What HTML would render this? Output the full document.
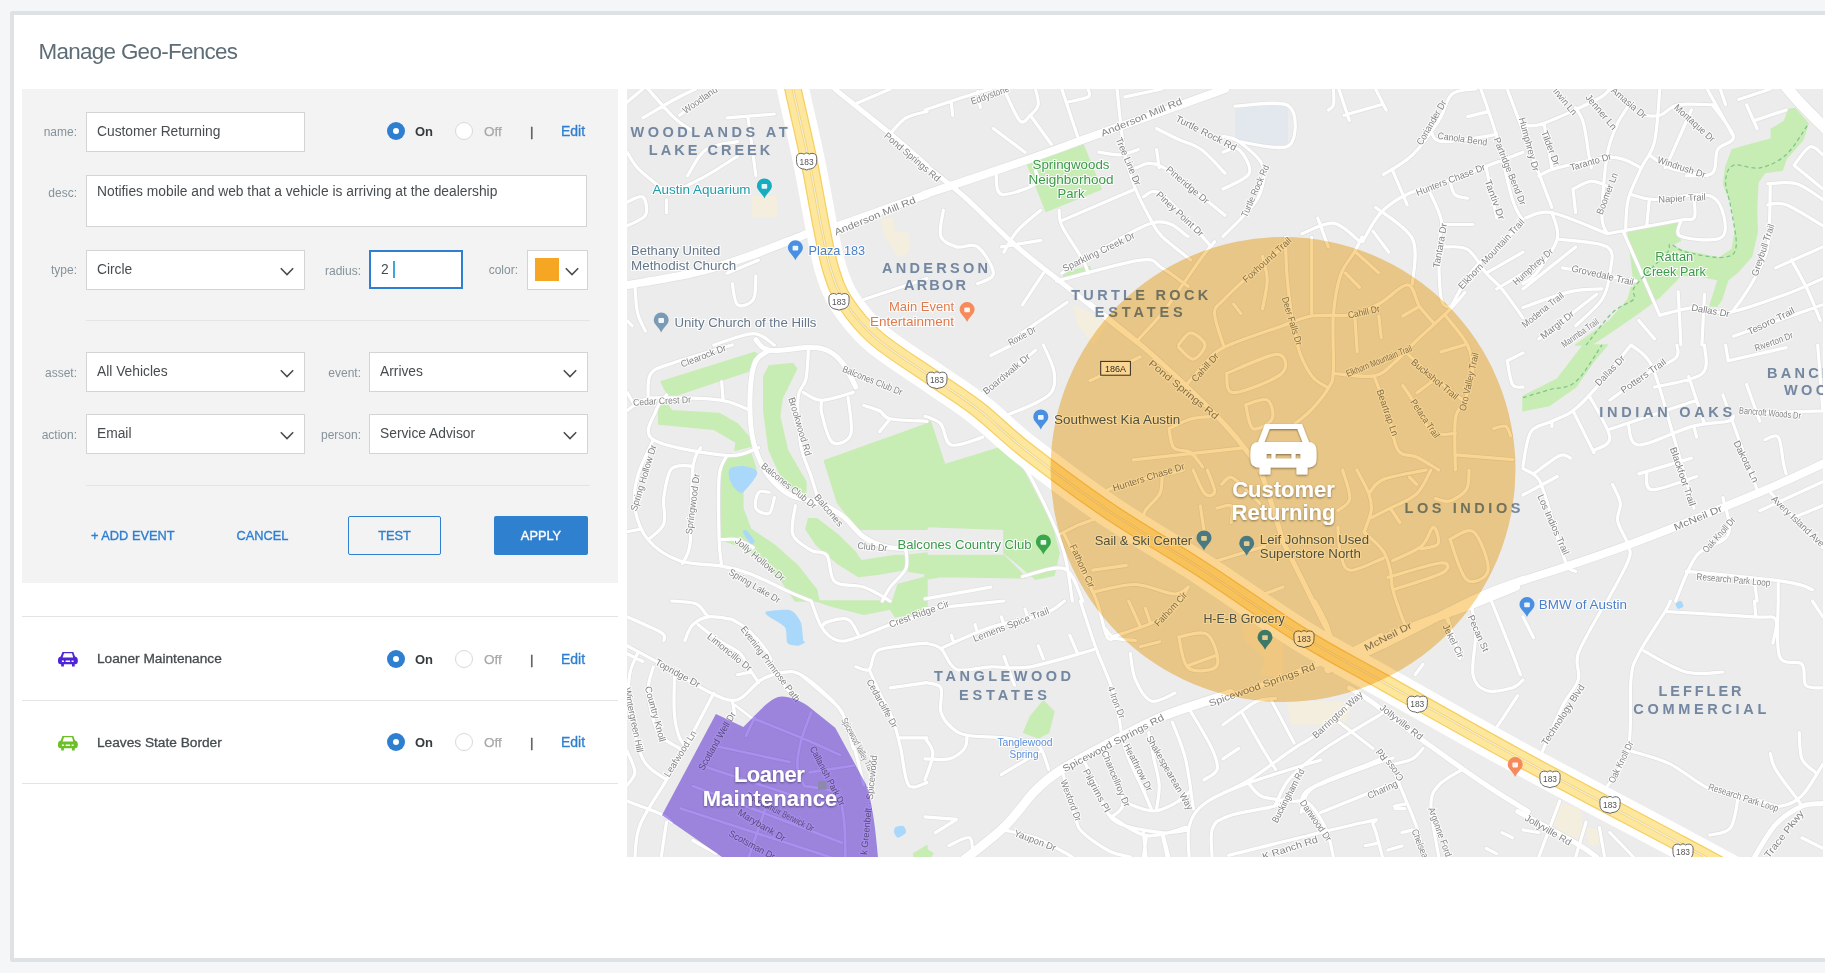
<!DOCTYPE html>
<html><head><meta charset="utf-8">
<style>
*{box-sizing:border-box;margin:0;padding:0}
html,body{width:1825px;height:973px;overflow:hidden;background:#f4f6f8;font-family:"Liberation Sans",sans-serif}
.abs{position:absolute}
#card{position:absolute;left:10px;top:11px;width:1830px;height:951px;border:4px solid #dfe2e4;border-right:none;border-radius:3px 0 0 3px;background:#fff}
#title{position:absolute;left:38.5px;top:38.6px;font-size:22.4px;color:#5e6c75;letter-spacing:-0.68px;white-space:nowrap}
#panel{position:absolute;left:22px;top:89px;width:596px;height:494px;background:#f3f3f3}
.lbl{position:absolute;font-size:12px;color:#85929a;margin-top:1px;text-align:right;white-space:nowrap}
.inp{position:absolute;background:#fff;border:1px solid #d4d4d4;font-size:13.8px;color:#464c50;padding-left:10px;white-space:nowrap}
.chev{position:absolute;right:10px;top:15.5px;width:14px;height:9px}
.hr{position:absolute;height:1px;background:#e4e4e4}
.radio{position:absolute;width:18px;height:18px;border-radius:50%}
.radio.on{background:#2f7fd0}
.radio.on:after{content:"";position:absolute;left:6px;top:6px;width:6px;height:6px;border-radius:50%;background:#fff}
.radio.off{background:#fff;border:1px solid #d9d9d9}
.t{position:absolute;white-space:nowrap}
.btn{position:absolute;font-size:12.8px;color:#2f7fd0;white-space:nowrap;text-align:center;font-weight:normal;-webkit-text-stroke:0.35px currentColor}
</style></head><body>
<div id="card"></div>
<div id="title">Manage Geo-Fences</div>
<div id="panel"></div>

<!-- name row -->
<div class="lbl" style="left:30px;width:47px;top:124px">name:</div>
<div class="inp" style="left:86px;top:112px;width:219px;height:40px;line-height:38px">Customer Returning</div>
<div class="radio on" style="left:387px;top:122px"></div>
<div class="t" style="left:415px;top:124px;font-size:13px;font-weight:bold;color:#363b3e">On</div>
<div class="radio off" style="left:455px;top:122px"></div>
<div class="t" style="left:484px;top:124px;font-size:13.5px;color:#a8a8a8;-webkit-text-stroke:0.25px #a8a8a8">Off</div>
<div class="t" style="left:530px;top:124px;font-size:13px;color:#555;-webkit-text-stroke:0.4px #555">|</div>
<div class="t" style="left:561px;top:123px;font-size:14px;color:#2f7fd0;-webkit-text-stroke:0.3px #2f7fd0">Edit</div>

<!-- desc -->
<div class="lbl" style="left:30px;width:47px;top:185px">desc:</div>
<div class="inp" style="left:86px;top:175px;width:501px;height:52px;line-height:32px">Notifies mobile and web that a vehicle is arriving at the dealership</div>

<!-- type row -->
<div class="lbl" style="left:30px;width:47px;top:262px">type:</div>
<div class="inp sel" style="left:86px;top:250px;width:219px;height:40px;line-height:38px">Circle<svg class="chev" viewBox="0 0 14 9"><polyline points="0.8,1.2 7,7.6 13.2,1.2" fill="none" stroke="#4a4a4a" stroke-width="1.5"/></svg></div>
<div class="lbl" style="left:300px;width:61px;top:263px">radius:</div>
<div class="inp" style="left:369px;top:250px;width:94px;height:39px;line-height:35px;border:2px solid #2f7fd0">2<span style="display:inline-block;width:2px;height:17px;background:#3ba7dc;margin-left:4px;vertical-align:-4px"></span></div>
<div class="lbl" style="left:470px;width:48px;top:262px">color:</div>
<div class="inp sel" style="left:527px;top:250px;width:61px;height:40px"><div class="abs" style="left:7px;top:7px;width:24px;height:23px;background:#f5a623"></div><svg class="chev" style="right:8.5px" viewBox="0 0 14 9"><polyline points="0.8,1.2 7,7.6 13.2,1.2" fill="none" stroke="#4a4a4a" stroke-width="1.5"/></svg></div>

<div class="hr" style="left:86px;top:320px;width:504px"></div>

<!-- asset row -->
<div class="lbl" style="left:30px;width:47px;top:365px">asset:</div>
<div class="inp sel" style="left:86px;top:352px;width:219px;height:40px;line-height:38px">All Vehicles<svg class="chev" viewBox="0 0 14 9"><polyline points="0.8,1.2 7,7.6 13.2,1.2" fill="none" stroke="#4a4a4a" stroke-width="1.5"/></svg></div>
<div class="lbl" style="left:300px;width:61px;top:365px">event:</div>
<div class="inp sel" style="left:369px;top:352px;width:219px;height:40px;line-height:38px">Arrives<svg class="chev" viewBox="0 0 14 9"><polyline points="0.8,1.2 7,7.6 13.2,1.2" fill="none" stroke="#4a4a4a" stroke-width="1.5"/></svg></div>

<!-- action row -->
<div class="lbl" style="left:30px;width:47px;top:427px">action:</div>
<div class="inp sel" style="left:86px;top:414px;width:219px;height:40px;line-height:38px">Email<svg class="chev" viewBox="0 0 14 9"><polyline points="0.8,1.2 7,7.6 13.2,1.2" fill="none" stroke="#4a4a4a" stroke-width="1.5"/></svg></div>
<div class="lbl" style="left:300px;width:61px;top:427px">person:</div>
<div class="inp sel" style="left:369px;top:414px;width:219px;height:40px;line-height:38px">Service Advisor<svg class="chev" viewBox="0 0 14 9"><polyline points="0.8,1.2 7,7.6 13.2,1.2" fill="none" stroke="#4a4a4a" stroke-width="1.5"/></svg></div>

<div class="hr" style="left:86px;top:485px;width:504px"></div>

<!-- buttons -->
<div class="btn" style="left:91px;top:528px">+ ADD EVENT</div>
<div class="btn" style="left:236.5px;top:528px">CANCEL</div>
<div class="btn" style="left:348px;top:516px;width:93px;height:39px;line-height:37px;border:1px solid #2f7fd0;border-radius:2px">TEST</div>
<div class="btn" style="left:494px;top:516px;width:94px;height:39px;line-height:39px;background:#2f80cf;color:#fff;border-radius:2px">APPLY</div>

<!-- list -->
<div class="hr" style="left:22px;top:616px;width:596px"></div>
<div class="hr" style="left:22px;top:700px;width:596px"></div>
<div class="hr" style="left:22px;top:783px;width:596px"></div>


<!-- list rows -->
<svg class="abs" style="left:57px;top:651px" width="21" height="16" viewBox="0 0 21 16"><path fill="#4d24d6" d="M5.4,0.9 L16.3,0.9 L18,5.6 Q20.8,6.2 20.8,9 L20.8,10.8 Q20.8,13.2 18.5,13.2 L17.7,13.2 L17.7,15.4 L15,15.4 L15,13.2 L6.9,13.2 L6.9,15.4 L4.2,15.4 L4.2,13.2 L3.3,13.2 Q1,13.2 1,10.8 L1,9 Q1,6.2 3.7,5.6 Z M7,2.2 L15,2.2 L16.2,6.6 L5.6,6.6 Z M4.9,9.4 h2 v1.6 h-2 Z M8.6,9.4 h4.5 v1.6 h-4.5 Z M14.6,9.4 h2 v1.6 h-2 Z" fill-rule="evenodd"/></svg>
<div class="t" style="left:97px;top:651px;font-size:13.7px;color:#454b4f;-webkit-text-stroke:0.3px #454b4f">Loaner Maintenance</div>
<div class="radio on" style="left:387px;top:650px"></div>
<div class="t" style="left:415px;top:652px;font-size:13px;font-weight:bold;color:#363b3e">On</div>
<div class="radio off" style="left:455px;top:650px"></div>
<div class="t" style="left:484px;top:652px;font-size:13.5px;color:#a8a8a8;-webkit-text-stroke:0.25px #a8a8a8">Off</div>
<div class="t" style="left:530px;top:652px;font-size:13px;color:#555;-webkit-text-stroke:0.4px #555">|</div>
<div class="t" style="left:561px;top:651px;font-size:14px;color:#2f7fd0;-webkit-text-stroke:0.3px #2f7fd0">Edit</div>

<svg class="abs" style="left:57px;top:734.5px" width="21" height="16" viewBox="0 0 21 16"><path fill="#6cbf26" d="M5.4,0.9 L16.3,0.9 L18,5.6 Q20.8,6.2 20.8,9 L20.8,10.8 Q20.8,13.2 18.5,13.2 L17.7,13.2 L17.7,15.4 L15,15.4 L15,13.2 L6.9,13.2 L6.9,15.4 L4.2,15.4 L4.2,13.2 L3.3,13.2 Q1,13.2 1,10.8 L1,9 Q1,6.2 3.7,5.6 Z M7,2.2 L15,2.2 L16.2,6.6 L5.6,6.6 Z M4.9,9.4 h2 v1.6 h-2 Z M8.6,9.4 h4.5 v1.6 h-4.5 Z M14.6,9.4 h2 v1.6 h-2 Z" fill-rule="evenodd"/></svg>
<div class="t" style="left:97px;top:735px;font-size:13.7px;color:#454b4f;-webkit-text-stroke:0.3px #454b4f">Leaves State Border</div>
<div class="radio on" style="left:387px;top:733px"></div>
<div class="t" style="left:415px;top:735px;font-size:13px;font-weight:bold;color:#363b3e">On</div>
<div class="radio off" style="left:455px;top:733px"></div>
<div class="t" style="left:484px;top:735px;font-size:13.5px;color:#a8a8a8;-webkit-text-stroke:0.25px #a8a8a8">Off</div>
<div class="t" style="left:530px;top:735px;font-size:13px;color:#555;-webkit-text-stroke:0.4px #555">|</div>
<div class="t" style="left:561px;top:734px;font-size:14px;color:#2f7fd0;-webkit-text-stroke:0.3px #2f7fd0">Edit</div>

<div id="map" class="abs" style="left:627px;top:89px;width:1196px;height:768px;background:#ebebeb;overflow:hidden"><svg width="1196" height="768" viewBox="627 89 1196 768" style="position:absolute;left:0;top:0;display:block" font-family="Liberation Sans">
<defs><filter id="sh" x="-20%" y="-20%" width="140%" height="140%"><feDropShadow dx="0" dy="1" stdDeviation="1.2" flood-color="#000" flood-opacity="0.45"/></filter></defs>
<rect x="627" y="89" width="1196" height="768" fill="#ececec"/>
<path d="M1026.3,161.4 L1082.9,144.3 L1101.3,189.0 L1046.1,211.4 Z" fill="#c8edb4" stroke="#c8edb4" stroke-width="1.5" stroke-linejoin="round"/>
<path d="M1063.2,273.2 L1089.5,266.6 L1090.8,270.6 L1064.5,279.8 Z" fill="#c8edb4" stroke="#c8edb4" stroke-width="1.5" stroke-linejoin="round"/>
<path d="M1788.6,109.6 L1795.1,108.5 L1808.1,123.7 L1802.7,139.9 L1786.4,158.4 L1782.1,170.3 L1764.8,172.5 L1757.8,182.2 L1756.5,210.4 L1757.2,232.1 L1751.7,255.9 L1738.7,271.1 L1727.9,279.8 L1721.4,299.9 L1717.0,306.0 L1710.0,306.0 L1718.1,279.8 L1697.6,275.4 L1680.2,275.4 L1675.6,281.0 L1659.8,296.8 L1638.8,312.6 L1612.5,331.0 L1591.4,345.0 L1575.6,345.0 L1609.8,320.5 L1628.2,299.5 L1633.5,278.4 L1628.2,232.4 L1630.3,232.1 L1678.0,219.1 L1680.2,240.7 L1671.5,245.1 L1682.4,250.5 L1719.2,258.1 L1732.2,249.4 L1735.5,229.9 L1732.2,206.1 L1723.6,184.4 L1725.7,167.0 L1732.2,149.7 L1751.7,144.3 L1771.3,138.9 L1771.3,129.1 L1784.3,121.5 Z" fill="#c8edb4" stroke="#c8edb4" stroke-width="1.5" stroke-linejoin="round"/>
<path d="M1523.0,396.3 L1557.2,379.2 L1583.5,345.0 L1607.2,345.0 L1594.0,360.8 L1575.6,387.1 L1549.3,405.5 L1523.0,410.8 Z" fill="#c8edb4" stroke="#c8edb4" stroke-width="1.5" stroke-linejoin="round"/>
<path d="M661.2,381.8 L754.6,352.4 L759.9,356.8 L748.1,371.3 L669.1,397.6 Z" fill="#c8edb4" stroke="#c8edb4" stroke-width="1.5" stroke-linejoin="round"/>
<path d="M658.6,405.5 L665.2,401.6 L671.7,410.8 L719.1,413.4 L737.5,423.9 L755.9,445.0 L734.9,450.3 L736.2,442.4 L713.8,429.2 L658.6,423.9 Z" fill="#c8edb4" stroke="#c8edb4" stroke-width="1.5" stroke-linejoin="round"/>
<path d="M769.1,366.1 L792.8,363.4 L796.7,368.7 L782.3,397.6 L779.6,416.1 L787.5,450.3 L805.9,481.8 L805.9,495.0 L784.9,484.5 L769.1,450.3 L763.8,410.8 L763.8,376.6 Z" fill="#c8edb4" stroke="#c8edb4" stroke-width="1.5" stroke-linejoin="round"/>
<path d="M824.4,460.8 L927.0,423.9 L927.0,529.2 L858.6,529.2 L837.5,502.9 Z" fill="#c8edb4" stroke="#c8edb4" stroke-width="1.5" stroke-linejoin="round"/>
<path d="M721.7,468.7 L729.6,455.5 L750.7,452.9 L755.9,468.7 L742.8,484.5 L742.8,508.2 L750.7,529.2 L774.4,545.0 L798.1,566.1 L816.5,589.7 L819.1,601.1 L795.4,601.1 L782.3,581.8 L758.6,555.5 L737.5,545.0 L720.4,539.7 Z" fill="#c8edb4" stroke="#c8edb4" stroke-width="1.5" stroke-linejoin="round"/>
<path d="M808.6,518.7 L816.5,518.7 L837.5,534.5 L855.9,552.9 L861.2,560.8 L895.4,555.5 L905.9,555.5 L908.6,568.7 L879.6,573.9 L858.6,576.6 L837.5,563.4 L816.5,545.0 L805.9,529.2 Z" fill="#c8edb4" stroke="#c8edb4" stroke-width="1.5" stroke-linejoin="round"/>
<path d="M898.1,584.5 L927.0,576.6 L927.0,601.1 L892.8,601.1 Z" fill="#c8edb4" stroke="#c8edb4" stroke-width="1.5" stroke-linejoin="round"/>
<path d="M905.9,555.5 L927.0,552.9 L927.0,573.9 L908.6,571.3 Z" fill="#c8edb4" stroke="#c8edb4" stroke-width="1.5" stroke-linejoin="round"/>
<path d="M925.0,423.9 L930.3,421.3 L944.7,464.7 L1000.0,447.6 L1019.7,463.4 L1051.3,523.9 L1059.2,552.9 L1053.9,575.3 L1035.5,579.2 L1017.1,563.4 L1003.9,552.9 L1003.9,529.2 L925.0,526.6 Z" fill="#c8edb4" stroke="#c8edb4" stroke-width="1.5" stroke-linejoin="round"/>
<path d="M925.0,555.5 L1003.9,555.5 L1019.7,571.3 L1025.0,577.9 L940.8,576.6 L925.0,579.2 Z" fill="#c8edb4" stroke="#c8edb4" stroke-width="1.5" stroke-linejoin="round"/>
<path d="M816.5,601.0 L916.5,601.0 L890.2,608.9 L863.8,614.2 L832.3,606.3 Z" fill="#c8edb4" stroke="#c8edb4" stroke-width="1.5" stroke-linejoin="round"/>
<path d="M884.9,601.0 L927.0,601.0 L927.0,611.5 L895.4,616.8 Z" fill="#c8edb4" stroke="#c8edb4" stroke-width="1.5" stroke-linejoin="round"/>
<path d="M913.8,853.6 L927.0,845.7 L927.0,857.1 L913.8,857.1 Z" fill="#c8edb4" stroke="#c8edb4" stroke-width="1.5" stroke-linejoin="round"/>
<path d="M1023.7,732.6 L1030.3,716.8 L1043.4,701.0 L1053.9,711.5 L1048.7,732.6 L1038.2,737.8 Z" fill="#c8edb4" stroke="#c8edb4" stroke-width="1.5" stroke-linejoin="round"/>
<path d="M925.0,848.4 L932.9,853.6 L930.3,857.1 L925.0,857.1 Z" fill="#c8edb4" stroke="#c8edb4" stroke-width="1.5" stroke-linejoin="round"/>
<path d="M729.6,468.7 C731.4,466.9 739.3,465.9 742.8,466.1 C746.3,466.2 754.2,468.6 755.9,470.0 C757.7,471.4 757.7,473.6 755.9,476.6 C754.2,479.6 745.6,490.8 742.8,492.4 C740.0,493.9 736.6,490.2 734.9,488.4 C733.1,486.7 730.3,481.8 729.6,479.2 C728.9,476.6 727.9,470.4 729.6,468.7 Z" fill="#a9d8fb"/>
<path d="M766.5,611.5 C769.3,610.6 785.6,608.8 790.2,610.2 C794.7,611.6 798.9,618.0 800.7,622.1 C802.4,626.1 802.6,637.8 803.3,640.5 C804.0,643.1 806.6,641.1 805.9,641.8 C805.2,642.5 800.5,645.6 798.1,645.7 C795.6,645.9 789.3,645.6 787.5,643.1 C785.8,640.6 787.4,630.8 784.9,627.3 C782.4,623.8 771.6,618.9 769.1,616.8 C766.6,614.7 763.7,612.4 766.5,611.5 Z" fill="#a9d8fb"/>
<path d="M895.4,827.3 C896.6,826.4 901.9,825.3 903.3,826.0 C904.7,826.7 906.6,831.0 905.9,832.6 C905.2,834.2 899.6,837.8 898.1,837.8 C896.5,837.8 894.5,834.0 894.1,832.6 C893.8,831.2 894.2,828.2 895.4,827.3 Z" fill="#a9d8fb"/>
<path d="M1675.6,603.6 C1675.9,602.6 1679.8,600.6 1680.9,601.0 C1681.9,601.4 1683.8,605.2 1683.5,606.3 C1683.1,607.3 1679.3,609.2 1678.2,608.9 C1677.2,608.5 1675.2,604.7 1675.6,603.6 Z" fill="#a9d8fb"/>
<path d="M742.8,531.8 C742.3,530.1 745.2,529.3 746.7,530.5 C748.3,531.8 754.1,539.3 754.6,541.1 C755.2,542.8 752.3,544.9 750.7,543.7 C749.1,542.5 743.3,533.6 742.8,531.8 Z" fill="#a9d8fb"/>
<path d="M752.0,195.6 L777.0,195.6 L777.0,217.9 L752.0,217.9 Z" fill="#f4eedf"/>
<path d="M880.9,217.9 L892.8,217.9 L895.4,231.1 L908.6,232.4 L909.9,252.2 L898.1,257.4 L890.2,244.3 L883.6,236.4 Z" fill="#f4eedf"/>
<path d="M1554.6,800.9 L1580.9,808.8 L1583.5,837.8 L1567.7,839.1 L1553.3,824.6 Z" fill="#f4eedf"/>
<path d="M1586.1,827.3 L1601.9,829.9 L1604.6,843.0 L1588.8,845.7 Z" fill="#f4eedf"/>
<path d="M1286.2,701.0 L1354.6,701.0 L1344.1,724.7 L1291.4,724.7 Z" fill="#f4eedf"/>
<path d="M1072.4,304.8 L1109.2,320.6 L1093.4,345.1 L1077.6,325.8 Z" fill="#f4eedf"/>
<path d="M1240.8,625.0 L1283.0,622.6 L1283.0,677.5 L1259.9,675.1 L1264.6,658.4 L1245.6,641.7 Z" fill="#f4eedf"/>
<rect x="1235" y="106" width="53" height="39" fill="#e3e8ee"/>
<path d="M751.0,717.5 C760.2,721.2 791.2,733.5 806.0,739.8 C820.8,746.0 834.3,752.5 840.0,755.0 M717.6,746.6 L789.7,762.0 M706.5,767.2 L806.0,799.8 M692.8,786.0 L842.0,842.8 M680.7,808.4 L843.8,861.6 M811.2,712.3 C809.5,717.2 803.2,732.4 800.9,741.5 C798.6,750.6 796.9,759.8 797.5,767.2 C798.1,774.6 803.2,782.9 804.3,786.0 M804.3,786.0 C809.4,787.2 828.6,787.5 835.2,793.0 C841.8,798.5 842.1,807.5 843.8,818.7 C845.5,829.9 845.2,853.1 845.5,860.0 M746.0,736.0 L754.6,717.5 M764.9,810.2 L747.7,860.0 M809.5,772.4 L854.1,765.5 M735.0,705.0 L751.0,717.5" fill="none" stroke="#dfdfdf" stroke-width="3.9000000000000004" stroke-linecap="round" stroke-linejoin="round"/>
<path d="M853.3,104.8 L890.2,89.0 M890.2,133.7 C892.8,131.1 899.8,121.7 905.9,117.9 C912.1,114.2 923.5,112.5 927.0,111.4 M648.1,89.0 C652.4,93.8 666.9,110.9 674.4,117.9 C681.8,125.0 689.7,128.9 692.8,131.1 M642.8,117.9 C648.1,114.9 665.6,104.4 674.4,99.5 C683.1,94.7 691.9,90.8 695.4,89.0 M679.6,115.3 L716.5,89.0 M627.0,102.2 L642.8,89.0 M727.0,117.9 L774.4,114.0 M748.1,117.9 L755.9,175.8 M627.0,152.2 C628.8,154.8 632.7,162.7 637.5,167.9 C642.4,173.2 650.7,179.4 655.9,183.7 C661.2,188.1 666.9,192.5 669.1,194.3 M627.0,202.2 C629.6,201.3 639.7,194.7 642.8,196.9 C645.9,199.1 648.1,210.5 645.4,215.3 C642.8,220.1 630.1,224.1 627.0,225.8 M669.1,194.3 C675.2,191.2 694.5,182.2 705.9,175.8 C717.4,169.5 732.3,159.4 737.5,156.1 M666.5,199.5 L666.5,212.7 M727.0,273.2 L758.6,260.1 M732.3,283.7 C733.1,287.2 734.0,302.2 737.5,304.8 C741.0,307.4 750.2,304.4 753.3,299.5 C756.4,294.7 755.5,279.8 755.9,275.8 M634.9,285.1 C635.3,289.7 635.8,305.0 637.5,312.7 C639.3,320.4 644.1,328.0 645.4,331.1 M713.8,345.1 C720.4,343.2 743.2,333.7 753.3,333.7 C763.4,333.7 770.9,343.2 774.4,345.1 M863.8,299.5 L927.0,278.5 M627.0,320.6 L632.3,325.8 M687.5,175.8 C690.6,171.5 697.6,155.2 705.9,149.5 C714.3,143.8 732.3,142.9 737.5,141.6 M925.0,110.1 C932.9,107.4 961.4,97.8 972.4,94.3 C983.3,90.8 987.7,89.9 990.8,89.0 M951.3,102.2 L952.6,115.3 M977.6,91.6 L980.3,107.4 M1003.9,89.0 C1006.6,94.3 1015.4,116.2 1019.7,120.6 C1024.1,125.0 1027.2,117.9 1030.3,115.3 C1033.3,112.7 1037.3,109.2 1038.2,104.8 C1039.0,100.4 1036.0,91.6 1035.5,89.0 M993.4,128.5 L1025.0,152.2 M1030.3,115.3 L1051.3,144.3 M1061.8,89.0 L1077.6,136.4 M1067.1,102.2 C1070.6,101.3 1084.6,99.1 1088.2,96.9 C1091.7,94.7 1088.2,90.3 1088.2,89.0 M1117.1,89.0 L1119.7,115.3 M1125.0,96.9 L1161.8,89.0 M1156.6,128.5 C1160.1,130.2 1170.2,135.5 1177.6,139.0 C1185.1,142.5 1193.4,143.8 1201.3,149.5 C1209.2,155.2 1221.1,169.3 1225.0,173.2 M1119.7,115.3 C1120.6,121.9 1122.4,142.5 1125.0,154.8 C1127.6,167.1 1131.1,178.0 1135.5,189.0 C1139.9,200.0 1146.9,212.7 1151.3,220.6 C1155.7,228.5 1155.3,229.8 1161.8,236.4 C1168.4,242.9 1186.0,256.1 1190.8,260.1 M996.1,173.2 C996.9,176.7 994.7,192.5 1001.3,194.3 C1007.9,196.0 1029.8,187.7 1035.5,183.7 C1041.2,179.8 1035.5,172.8 1035.5,170.6 M1135.5,167.9 C1139.9,167.7 1146.9,158.7 1161.8,166.6 C1176.8,174.5 1214.5,207.2 1225.0,215.3 M1143.4,196.9 C1146.5,196.5 1150.9,186.4 1161.8,194.3 C1172.8,202.2 1201.3,235.9 1209.2,244.3 M1059.2,210.1 C1059.6,212.7 1057.9,217.5 1061.8,225.8 C1065.8,234.2 1078.5,252.2 1082.9,260.1 C1087.3,267.9 1087.3,271.0 1088.2,273.2 M1061.8,273.2 C1076.8,264.9 1130.3,229.4 1151.3,223.2 C1172.4,217.1 1182.0,234.2 1188.2,236.4 M1056.6,281.1 C1070.6,277.6 1123.2,262.2 1140.8,260.1 C1158.3,257.9 1153.9,263.6 1161.8,267.9 C1169.7,272.3 1183.8,283.3 1188.2,286.4 M1001.3,246.9 L1040.8,240.3 M943.4,210.1 C943.0,214.4 938.6,230.2 940.8,236.4 C943.0,242.5 950.4,245.1 956.6,246.9 C962.7,248.6 971.5,242.5 977.6,246.9 C983.8,251.3 993.4,267.1 993.4,273.2 C993.4,279.4 980.3,282.0 977.6,283.7 M1022.4,304.8 L1043.4,273.2 M1009.2,341.6 L1067.1,302.2 M1098.7,152.2 C1102.2,152.6 1113.2,155.2 1119.7,154.8 C1126.3,154.4 1135.1,150.4 1138.2,149.5 M1156.6,149.5 L1159.2,167.9 M1061.8,220.6 L1135.5,189.0 M1003.9,252.2 C1006.1,248.6 1011.0,238.1 1017.1,231.1 C1023.2,224.1 1036.8,213.6 1040.8,210.1 M1234.8,106.1 C1243.8,106.1 1279.8,99.5 1288.8,106.1 C1297.8,112.7 1297.1,139.7 1288.8,145.6 C1280.5,151.5 1247.1,142.3 1238.8,141.6 M1223.0,136.4 C1225.6,137.2 1232.2,136.8 1238.8,141.6 C1245.4,146.5 1259.0,156.5 1262.5,165.3 C1266.0,174.1 1262.9,185.9 1259.8,194.3 C1256.8,202.6 1250.2,208.3 1244.1,215.3 C1237.9,222.3 1226.5,232.9 1223.0,236.4 M1223.0,152.2 C1225.6,151.7 1234.4,146.0 1238.8,149.5 C1243.2,153.0 1251.9,166.6 1249.3,173.2 C1246.7,179.8 1227.4,186.4 1223.0,189.0 M1333.5,89.0 C1333.5,91.6 1334.4,101.3 1333.5,104.8 C1332.6,108.3 1329.1,109.2 1328.3,110.1 M1338.8,89.0 L1349.3,120.6 M1344.1,115.3 L1380.9,104.8 M1375.6,89.0 L1386.2,110.1 M1383.5,174.5 C1388.4,171.2 1403.3,163.8 1412.5,154.8 C1421.7,145.8 1432.2,130.7 1438.8,120.6 C1445.4,110.5 1445.8,99.5 1451.9,94.3 C1458.1,89.0 1471.7,89.9 1475.6,89.0 M1430.9,131.1 C1432.6,132.9 1432.2,140.8 1441.4,141.6 C1450.6,142.5 1476.9,137.7 1486.2,136.4 C1495.4,135.1 1494.9,134.2 1496.7,133.7 M1467.7,116.6 L1488.8,111.4 M1480.9,89.0 C1483.5,96.9 1491.4,117.9 1496.7,136.4 C1501.9,154.8 1508.1,185.5 1512.5,199.5 C1516.9,213.6 1521.2,217.1 1523.0,220.6 M1507.2,89.0 L1523.0,131.1 M1362.5,241.6 C1365.5,236.8 1373.4,220.6 1380.9,212.7 C1388.4,204.8 1396.2,199.5 1407.2,194.3 C1418.2,189.0 1427.4,188.1 1446.7,181.1 C1466.0,174.1 1510.3,157.0 1523.0,152.2 M1392.7,170.6 L1407.2,204.8 M1428.3,189.0 C1430.5,194.3 1439.7,210.9 1441.4,220.6 C1443.2,230.2 1438.8,233.7 1438.8,246.9 C1438.8,260.1 1439.2,289.4 1441.4,299.5 C1443.6,309.6 1450.2,306.1 1451.9,307.4 M1441.4,224.5 L1473.0,224.5 M1449.3,178.5 C1450.2,181.1 1451.5,191.0 1454.6,194.3 C1457.6,197.6 1465.5,197.6 1467.7,198.2 M1486.2,167.9 L1496.7,217.9 M1449.3,310.1 C1452.8,303.9 1462.5,283.7 1470.4,273.2 C1478.3,262.7 1487.9,255.2 1496.7,246.9 C1505.5,238.6 1518.6,227.2 1523.0,223.2 M1444.1,246.9 C1448.0,247.3 1460.7,245.1 1467.7,249.5 C1474.8,253.9 1480.5,266.6 1486.2,273.2 C1491.9,279.8 1495.8,281.5 1501.9,289.0 C1508.1,296.5 1519.5,313.1 1523.0,317.9 M1486.2,273.2 L1523.0,252.2 M1496.7,289.0 L1523.0,273.2 M1375.6,207.4 C1381.8,212.7 1406.3,226.3 1412.5,239.0 C1418.6,251.7 1412.5,276.3 1412.5,283.7 M1301.9,233.7 C1307.2,232.0 1323.9,221.9 1333.5,223.2 C1343.2,224.5 1355.5,238.6 1359.8,241.6 M1317.7,217.9 L1328.3,246.9 M1373.0,231.1 L1388.8,252.2 M1659.8,315.3 C1665.9,313.9 1685.2,307.8 1696.6,307.4 C1708.0,306.9 1713.3,314.8 1728.2,312.6 C1743.1,310.4 1770.3,299.9 1786.1,294.2 C1801.9,288.5 1816.8,281.1 1822.9,278.4 M1623.0,231.1 L1659.8,315.3 M1607.2,233.7 C1619.0,231.5 1663.8,223.2 1678.2,220.5 C1692.7,217.9 1691.4,221.4 1694.0,217.9 C1696.6,214.4 1694.0,202.6 1694.0,199.5 M1525.6,217.9 C1530.0,217.0 1538.3,210.0 1551.9,212.7 C1565.5,215.3 1598.0,230.2 1607.2,233.7 M1551.9,212.7 C1552.8,217.0 1559.8,228.9 1557.2,239.0 C1554.6,249.0 1541.9,265.7 1536.2,273.2 C1530.5,280.6 1525.2,281.9 1523.0,283.7 M1538.8,175.8 C1541.9,174.5 1544.9,171.0 1557.2,167.9 C1569.5,164.9 1598.4,157.4 1612.5,157.4 C1626.5,157.4 1636.6,166.2 1641.4,167.9 M1523.0,125.8 C1526.5,125.4 1531.8,127.6 1544.0,123.2 C1556.3,118.8 1585.7,105.2 1596.7,99.5 C1607.6,93.8 1607.6,90.8 1609.8,89.0 M1523.0,133.7 C1525.6,140.3 1534.0,160.9 1538.8,173.2 C1543.6,185.5 1549.7,201.7 1551.9,207.4 M1544.0,123.2 L1551.9,167.9 M1575.6,107.4 C1576.9,110.0 1581.3,115.3 1583.5,123.2 C1585.7,131.1 1587.5,147.3 1588.8,154.8 C1590.1,162.2 1591.0,165.7 1591.4,167.9 M1609.8,89.0 C1612.9,91.2 1626.9,96.5 1628.2,102.2 C1629.6,107.9 1621.2,114.4 1617.7,123.2 C1614.2,132.0 1609.8,139.4 1607.2,154.8 C1604.6,170.1 1601.9,202.1 1601.9,215.3 C1601.9,228.4 1606.3,230.6 1607.2,233.7 M1659.8,89.0 C1658.9,97.8 1657.6,128.5 1654.5,141.6 C1651.5,154.8 1645.8,158.3 1641.4,167.9 C1637.0,177.6 1630.9,189.0 1628.2,199.5 C1625.6,210.0 1626.0,225.8 1625.6,231.1 M1641.4,115.3 C1644.5,115.3 1653.7,117.1 1659.8,115.3 C1665.9,113.6 1669.5,106.5 1678.2,104.8 C1687.0,103.0 1706.7,104.8 1712.4,104.8 M1691.4,110.0 C1687.9,117.9 1674.7,147.8 1670.3,157.4 C1665.9,167.0 1665.9,166.2 1665.1,167.9 M1712.4,104.8 C1715.9,110.0 1732.6,128.9 1733.5,136.4 C1734.3,143.8 1721.2,143.4 1717.7,149.5 C1714.2,155.6 1717.7,168.8 1712.4,173.2 C1707.2,177.6 1690.5,175.4 1686.1,175.8 M1649.3,154.8 C1652.8,157.0 1660.7,164.4 1670.3,167.9 C1680.0,171.4 1701.0,174.5 1707.2,175.8 M1630.9,194.2 C1634.8,195.1 1641.0,199.1 1654.5,199.5 C1668.1,199.9 1701.0,190.7 1712.4,196.9 C1723.8,203.0 1728.2,229.8 1722.9,236.3 C1717.7,242.9 1687.9,239.0 1680.9,236.3 C1673.8,233.7 1680.9,223.2 1680.9,220.5 M1649.3,199.5 L1646.7,225.8 M1573.0,189.0 C1576.1,187.7 1585.7,181.5 1591.4,181.1 C1597.1,180.6 1604.6,185.5 1607.2,186.3 M1573.0,189.0 L1575.6,212.7 M1557.2,239.0 C1565.5,240.3 1598.4,241.2 1607.2,246.9 C1616.0,252.6 1610.7,264.4 1609.8,273.2 C1608.9,281.9 1607.6,290.7 1601.9,299.5 C1596.2,308.2 1580.0,321.4 1575.6,325.8 M1523.0,288.9 L1575.6,246.9 M1562.5,267.9 L1636.1,281.1 M1523.0,307.4 C1530.9,304.7 1557.2,294.6 1570.4,291.6 C1583.5,288.5 1596.7,289.4 1601.9,288.9 M1538.8,338.9 L1596.7,294.2 M1707.2,89.0 L1733.5,136.4 M1738.7,99.5 L1770.3,89.0 M1746.6,104.8 L1757.1,128.5 M1754.5,120.6 L1786.1,110.0 M1767.7,183.7 C1772.5,183.7 1787.4,181.1 1796.6,183.7 C1805.8,186.3 1818.5,196.9 1822.9,199.5 M1767.7,204.8 C1770.7,204.8 1776.9,201.3 1786.1,204.8 C1795.3,208.3 1816.8,222.3 1822.9,225.8 M1770.3,183.7 C1769.9,194.2 1770.3,231.1 1767.7,246.9 C1765.0,262.6 1758.9,269.7 1754.5,278.4 C1750.1,287.2 1744.9,294.2 1741.4,299.5 C1737.9,304.7 1734.8,308.2 1733.5,310.0 M1775.6,267.9 L1822.9,246.9 M1794.0,165.3 C1796.6,162.2 1804.9,148.6 1809.8,146.9 C1814.6,145.1 1820.7,153.5 1822.9,154.8 M1794.0,165.3 L1822.9,189.0 M1791.4,260.0 C1794.0,264.8 1802.3,278.9 1807.1,288.9 C1812.0,299.0 1818.1,315.3 1820.3,320.5 M1733.5,336.3 L1822.9,304.7 M1678.2,291.6 L1680.9,345.0 M1704.5,294.2 L1701.9,345.0 M1638.8,320.5 L1654.5,338.9 M1720.3,89.0 L1725.6,104.8 M648.1,397.6 C648.5,393.7 646.7,379.6 650.7,373.9 C654.6,368.2 658.1,368.2 671.7,363.4 C685.3,358.6 722.2,348.1 732.3,345.0 M808.6,347.6 C808.1,352.9 807.7,370.9 805.9,379.2 C804.2,387.5 798.9,386.7 798.1,397.6 C797.2,408.6 798.5,431.8 800.7,445.0 C802.9,458.2 808.1,466.9 811.2,476.6 C814.3,486.2 817.8,498.5 819.1,502.9 M627.0,410.8 C629.6,409.0 636.6,402.5 642.8,400.3 C648.9,398.1 650.7,397.6 663.8,397.6 C677.0,397.6 707.3,398.1 721.7,400.3 C736.2,402.5 745.9,409.0 750.7,410.8 M721.7,381.8 L723.1,400.3 M666.5,395.0 C664.7,397.6 658.1,403.3 655.9,410.8 C653.8,418.2 641.5,432.3 653.3,439.7 C665.2,447.2 709.5,454.2 727.0,455.5 C744.5,456.8 753.3,448.9 758.6,447.6 M653.3,439.7 C650.7,445.9 640.6,465.2 637.5,476.6 C634.5,488.0 633.1,497.6 634.9,508.2 C636.6,518.7 640.6,531.0 648.1,539.7 C655.5,548.5 667.4,556.4 679.6,560.8 C691.9,565.2 709.9,563.9 721.7,566.1 C733.6,568.2 739.3,569.6 750.7,573.9 C762.1,578.3 780.1,587.9 790.2,592.4 C800.2,596.9 807.7,599.6 811.2,601.1 M700.7,447.6 C699.4,451.1 694.5,452.9 692.8,468.7 C691.0,484.5 691.9,526.6 690.2,542.4 C688.4,558.2 683.6,559.9 682.3,563.4 M727.0,455.5 C725.7,459.0 720.4,462.5 719.1,476.6 C717.8,490.6 718.7,524.8 719.1,539.7 C719.5,554.6 721.3,561.7 721.7,566.1 M692.8,466.1 C689.3,466.5 676.6,463.4 671.7,468.7 C666.9,473.9 665.2,488.4 663.8,497.6 C662.5,506.8 666.5,516.9 663.8,523.9 C661.2,531.0 650.7,537.1 648.1,539.7 M627.0,531.8 L640.2,529.2 M721.7,539.7 C724.4,539.7 732.3,538.4 737.5,539.7 C742.8,541.1 750.7,546.3 753.3,547.6 M769.1,492.4 C767.4,492.4 760.8,489.7 758.6,492.4 C756.4,495.0 754.2,504.6 755.9,508.2 C757.7,511.7 766.0,515.2 769.1,513.4 C772.2,511.7 773.5,500.3 774.4,497.6 M795.4,505.5 C795.0,510.4 790.2,527.0 792.8,534.5 C795.4,541.9 805.5,546.8 811.2,550.3 C816.9,553.8 823.1,550.3 827.0,555.5 C830.9,560.8 828.8,576.6 834.9,581.8 C841.0,587.1 854.6,583.9 863.8,587.1 C873.1,590.3 885.8,598.7 890.2,601.1 M905.9,550.3 C905.9,553.3 908.6,562.5 905.9,568.7 C903.3,574.8 894.1,581.7 890.2,587.1 C886.2,592.5 883.6,598.7 882.3,601.1 M803.3,392.4 C806.4,393.7 813.4,400.3 821.7,400.3 C830.1,400.3 848.1,393.7 853.3,392.4 M821.7,400.3 C821.7,402.5 820.0,406.4 821.7,413.4 C823.5,420.4 827.4,438.9 832.3,442.4 C837.1,445.9 848.1,441.9 850.7,434.5 C853.3,427.0 848.5,403.8 848.1,397.6 M863.8,405.5 C866.5,406.4 875.2,408.6 879.6,410.8 C884.0,413.0 882.3,416.9 890.2,418.7 C898.1,420.4 920.9,420.9 927.0,421.3 M890.2,418.7 L879.6,431.8 M627.0,392.4 L634.9,405.5 M990.8,355.5 L1011.8,345.0 M1043.4,345.0 C1045.2,349.4 1052.6,363.4 1053.9,371.3 C1055.3,379.2 1055.3,386.7 1051.3,392.4 C1047.4,398.1 1038.2,401.6 1030.3,405.5 C1022.4,409.5 1008.3,414.3 1003.9,416.1 M977.6,397.6 L1035.5,350.3 M925.0,416.1 C927.6,417.4 936.4,419.1 940.8,423.9 C945.2,428.8 944.3,442.8 951.3,445.0 C958.3,447.2 977.6,438.4 982.9,437.1 M1017.1,460.8 C1019.3,463.4 1022.8,462.5 1030.3,476.6 C1037.7,490.6 1054.8,524.3 1061.8,545.0 C1068.9,565.7 1070.6,591.7 1072.4,601.1 M1022.4,576.6 C1029.4,575.3 1054.4,564.6 1064.5,568.7 C1074.6,572.8 1079.8,595.7 1082.9,601.1 M925.0,598.9 L990.8,587.1 M1507.2,360.8 L1523.0,352.9 M1507.2,360.8 C1508.1,364.7 1509.8,380.1 1512.5,384.5 C1515.1,388.9 1521.2,386.7 1523.0,387.1 M1523.0,466.0 C1524.3,460.3 1526.1,439.3 1530.9,431.8 C1535.7,424.4 1544.9,424.8 1551.9,421.3 C1559.0,417.8 1565.5,416.5 1573.0,410.8 C1580.4,405.1 1587.0,398.1 1596.7,387.1 C1606.3,376.1 1625.2,352.0 1630.9,345.0 M1551.9,421.3 L1551.9,426.6 M1609.8,400.2 C1616.0,395.9 1635.7,381.0 1646.7,373.9 C1657.6,366.9 1670.5,363.0 1675.6,358.2 C1680.6,353.3 1676.7,347.2 1676.9,345.0 M1573.0,410.8 L1594.0,452.9 M1588.8,395.0 C1592.3,402.0 1608.9,427.9 1609.8,437.1 C1610.7,446.3 1596.7,448.0 1594.0,450.2 M1630.9,345.0 C1634.4,348.5 1644.9,351.1 1651.9,366.0 C1658.9,381.0 1665.9,410.8 1673.0,434.5 C1680.0,458.1 1690.5,495.8 1694.0,508.1 M1609.8,429.2 L1696.6,400.2 M1654.5,387.1 C1662.4,384.9 1693.6,381.0 1701.9,373.9 C1710.2,366.9 1704.1,349.8 1704.5,345.0 M1688.7,376.6 L1704.5,423.9 M1628.2,423.9 C1630.0,427.4 1628.2,444.5 1638.8,445.0 C1649.3,445.4 1676.5,430.5 1691.4,426.6 C1706.3,422.6 1721.2,423.0 1728.2,421.3 C1735.2,419.5 1732.6,416.9 1733.5,416.0 M1694.0,426.6 L1696.6,437.1 M1722.9,395.0 L1757.1,489.7 M1749.3,413.4 L1822.9,410.8 M1746.6,384.5 L1759.8,421.3 M1728.2,360.8 L1786.1,347.6 M1725.6,345.0 L1728.2,360.8 M1638.8,473.9 L1691.4,458.1 M1646.7,471.3 C1647.5,474.4 1643.6,488.8 1651.9,489.7 C1660.2,490.6 1689.2,478.7 1696.6,476.5 M1523.0,468.7 C1525.2,470.0 1532.6,472.6 1536.2,476.5 C1539.7,480.5 1539.2,478.3 1544.0,492.3 C1548.9,506.4 1559.8,547.6 1565.1,560.7 C1570.4,573.9 1573.9,569.5 1575.6,571.3 M1533.5,473.9 C1537.9,470.8 1553.7,458.1 1559.8,455.5 C1566.0,452.9 1568.6,457.7 1570.4,458.1 M1523.0,495.0 L1557.2,476.5 M1612.5,484.4 C1613.8,487.5 1619.5,496.7 1620.3,502.9 C1621.2,509.0 1616.4,514.3 1617.7,521.3 C1619.0,528.3 1626.5,538.4 1628.2,544.9 C1630.0,551.5 1631.7,551.4 1628.2,560.7 C1624.7,570.1 1610.7,594.3 1607.2,601.0 M1765.0,439.7 C1767.2,439.3 1775.1,433.1 1778.2,437.1 C1781.3,441.0 1782.1,457.3 1783.5,463.4 C1784.8,469.5 1785.7,472.2 1786.1,473.9 M1759.8,510.7 L1822.9,481.8 M1791.4,518.6 L1822.9,505.5 M1770.3,492.3 L1822.9,547.6 M1722.9,497.6 C1723.8,503.7 1732.6,524.8 1728.2,534.4 C1723.8,544.1 1705.4,544.4 1696.6,555.5 C1687.9,566.6 1679.1,593.4 1675.6,601.0 M1686.1,571.3 C1702.8,573.0 1765.0,578.7 1786.1,581.8 C1807.1,584.8 1808.0,588.4 1812.4,589.7 M1754.5,581.8 L1757.1,601.0 M1778.2,581.8 L1778.2,601.0 M1817.7,345.0 L1822.9,410.8 M671.7,601.0 C675.7,601.4 689.7,601.4 695.4,603.6 C701.1,605.8 703.8,612.0 705.9,614.2 C708.1,616.4 708.1,616.4 708.6,616.8 M627.0,616.8 C632.7,619.4 655.1,628.6 661.2,632.6 C667.4,636.5 663.4,639.2 663.8,640.5 M684.9,640.5 C686.2,637.8 688.8,628.6 692.8,624.7 C696.7,620.7 702.0,617.7 708.6,616.8 C715.2,615.9 728.3,619.0 732.3,619.4 M732.3,619.4 C734.9,621.2 742.4,624.7 748.1,629.9 C753.8,635.2 761.6,643.5 766.5,651.0 C771.3,658.5 773.1,667.7 777.0,674.7 C780.9,681.7 788.0,690.0 790.2,693.1 M698.1,624.7 C701.6,627.3 712.1,635.6 719.1,640.5 C726.1,645.3 735.3,649.2 740.2,653.6 C745.0,658.0 745.0,662.0 748.1,666.8 C751.1,671.6 756.8,679.9 758.6,682.6 M627.0,645.7 C632.7,648.8 647.2,656.3 661.2,664.2 C675.2,672.1 698.5,687.2 711.2,693.1 C723.9,699.0 729.2,701.9 737.5,699.7 C745.9,697.5 753.3,684.6 761.2,679.9 C769.1,675.3 778.3,672.9 784.9,672.1 C791.5,671.2 794.1,671.2 800.7,674.7 C807.3,678.2 817.4,686.5 824.4,693.1 C831.4,699.7 838.0,704.9 842.8,714.2 C847.6,723.4 851.6,742.7 853.3,748.4 M800.7,674.7 C806.8,679.9 830.1,698.4 837.5,706.3 C845.0,714.2 842.4,714.2 845.4,722.1 C848.5,729.9 852.9,743.1 855.9,753.6 C859.0,764.2 862.5,779.9 863.8,785.2 M637.5,653.6 C636.2,657.1 630.9,665.9 629.6,674.7 C628.3,683.5 627.4,692.2 629.6,706.3 C631.8,720.3 636.6,746.6 642.8,758.9 C648.9,771.2 662.5,776.4 666.5,779.9 M653.3,666.8 C652.4,671.2 647.2,682.1 648.1,693.1 C648.9,704.1 653.3,723.4 658.6,732.6 C663.8,741.8 676.1,745.7 679.6,748.4 M674.4,677.3 C674.4,683.5 673.5,704.1 674.4,714.2 C675.2,724.2 677.4,732.1 679.6,737.8 C681.8,743.5 686.2,746.6 687.5,748.4 M713.8,693.1 C709.9,700.6 698.1,723.4 690.2,737.8 C682.3,752.3 674.8,765.5 666.5,779.9 C658.1,794.4 645.4,811.8 640.2,824.7 C634.9,837.5 635.8,851.7 634.9,857.1 M732.3,701.0 L734.9,714.2 M627.0,751.0 C628.3,754.5 634.9,766.4 634.9,772.1 C634.9,777.8 628.3,783.0 627.0,785.2 M627.0,801.0 C632.7,803.2 653.8,810.6 661.2,814.2 C668.7,817.7 670.0,820.7 671.7,822.1 M666.5,822.1 L661.2,857.1 M692.8,840.5 L716.5,853.6 M811.2,601.0 C813.0,605.4 817.4,620.7 821.7,627.3 C826.1,633.9 831.8,638.7 837.5,640.5 C843.2,642.2 847.2,640.5 855.9,637.8 C864.7,635.2 878.3,628.6 890.2,624.7 C902.0,620.7 920.9,615.9 927.0,614.2 M821.7,627.3 C822.6,626.4 822.6,623.4 827.0,622.1 C831.4,620.7 842.8,617.2 848.1,619.4 C853.3,621.6 856.8,632.6 858.6,635.2 M855.9,666.8 C858.1,667.2 865.6,672.1 869.1,669.4 C872.6,666.8 871.3,654.9 877.0,651.0 C882.7,647.1 895.0,647.1 903.3,645.7 C911.6,644.4 923.1,643.5 927.0,643.1 M869.1,669.4 C870.9,673.4 875.7,684.8 879.6,693.1 C883.6,701.4 889.3,710.2 892.8,719.4 C896.3,728.6 898.1,737.4 900.7,748.4 C903.3,759.3 904.2,779.5 908.6,785.2 C913.0,790.9 923.9,783.0 927.0,782.6 M890.2,687.8 L927.0,682.6 M898.1,737.8 L927.0,737.8 M627.0,653.6 L642.8,661.5 M737.5,674.7 L750.7,672.1 M925.0,608.9 C929.4,608.5 938.2,607.6 951.3,606.3 C964.5,604.9 995.2,601.9 1003.9,601.0 M940.8,648.4 C949.1,644.9 973.7,633.0 990.8,627.3 C1007.9,621.6 1031.1,618.5 1043.4,614.2 C1055.7,609.8 1061.0,603.2 1064.5,601.0 M951.3,635.2 L953.9,643.1 M975.0,624.7 L977.6,632.6 M1001.3,616.8 L1003.9,624.7 M1025.0,608.9 L1027.6,616.8 M925.0,643.1 C927.6,644.0 935.5,644.0 940.8,648.4 C946.1,652.8 948.2,666.4 956.6,669.4 C964.9,672.5 978.5,667.2 990.8,666.8 C1003.1,666.4 1013.2,669.6 1030.3,666.8 C1047.4,663.9 1082.9,652.5 1093.4,649.7 M1003.9,656.3 L1014.5,685.2 M1038.2,645.7 L1043.4,658.9 M1069.7,635.2 L1077.6,653.6 M1080.3,601.0 C1082.9,608.9 1090.4,632.6 1096.1,648.4 C1101.8,664.2 1109.6,679.1 1114.5,695.7 C1119.3,712.4 1120.2,732.6 1125.0,748.4 C1129.8,764.2 1139.0,780.4 1143.4,790.5 C1147.8,800.6 1150.0,805.8 1151.3,808.9 M925.0,682.6 C927.6,683.5 938.2,683.0 940.8,687.8 C943.4,692.7 939.0,704.9 940.8,711.5 C942.5,718.1 946.9,723.4 951.3,727.3 C955.7,731.3 958.3,733.5 967.1,735.2 C975.9,737.0 993.4,736.5 1003.9,737.8 C1014.5,739.2 1024.1,741.4 1030.3,743.1 C1036.4,744.9 1037.7,744.0 1040.8,748.4 C1043.9,752.8 1047.4,765.9 1048.7,769.4 M967.1,735.2 C966.7,737.4 967.5,744.4 964.5,748.4 C961.4,752.3 955.3,757.1 948.7,758.9 C942.1,760.6 928.9,758.9 925.0,758.9 M925.0,737.8 C926.3,740.5 932.9,746.6 932.9,753.6 C932.9,760.6 926.3,775.6 925.0,779.9 M1001.3,774.7 L1040.8,751.0 M1061.8,769.4 C1064.0,777.3 1071.5,806.3 1075.0,816.8 C1078.5,827.3 1077.2,826.9 1082.9,832.6 C1088.6,838.3 1101.3,846.9 1109.2,851.0 C1117.1,855.1 1126.8,856.0 1130.3,857.1 M1082.9,758.9 C1085.1,763.3 1092.1,776.4 1096.1,785.2 C1100.0,794.0 1102.2,804.9 1106.6,811.5 C1111.0,818.1 1113.2,821.2 1122.4,824.7 C1131.6,828.2 1150.9,831.7 1161.8,832.6 C1172.8,833.5 1183.8,830.4 1188.2,829.9 M1103.9,748.4 C1106.6,754.5 1116.7,775.6 1119.7,785.2 C1122.8,794.9 1123.7,801.0 1122.4,806.3 C1121.1,811.5 1113.6,815.0 1111.8,816.8 M1148.7,732.6 C1149.6,737.0 1152.2,750.1 1153.9,758.9 C1155.7,767.7 1158.8,776.9 1159.2,785.2 C1159.6,793.5 1157.0,804.9 1156.6,808.9 M1172.4,722.1 C1174.6,728.2 1182.0,744.4 1185.5,758.9 C1189.0,773.4 1192.1,800.6 1193.4,808.9 M1190.8,711.5 C1194.3,717.7 1207.5,738.7 1211.8,748.4 C1216.2,758.0 1218.4,764.2 1217.1,769.4 C1215.8,774.7 1206.1,778.2 1203.9,779.9 M925.0,816.8 L956.6,819.4 M935.5,832.6 L956.6,819.4 M1003.9,829.9 C1009.2,831.3 1025.9,834.3 1035.5,837.8 C1045.2,841.4 1055.7,847.8 1061.8,851.0 C1068.0,854.2 1070.6,856.0 1072.4,857.1 M1143.4,832.6 L1146.1,857.1 M1161.8,832.6 L1167.1,857.1 M1103.9,627.3 C1105.7,629.1 1109.2,635.6 1114.5,637.8 C1119.7,640.0 1132.0,640.0 1135.5,640.5 M1130.3,653.6 C1131.1,658.0 1132.0,672.1 1135.5,679.9 C1139.0,687.8 1144.7,698.8 1151.3,701.0 C1157.9,703.2 1171.1,694.4 1175.0,693.1 M948.7,845.7 C952.2,844.4 965.8,836.0 969.7,837.8 C973.7,839.7 971.9,853.9 972.4,857.1 M1223.0,793.1 C1227.4,790.9 1237.5,787.4 1249.3,779.9 C1261.2,772.5 1281.8,756.7 1294.1,748.4 C1306.3,740.0 1312.0,739.2 1323.0,729.9 C1334.0,720.7 1353.7,699.2 1359.8,693.1 M1223.0,724.7 C1226.1,722.5 1235.7,715.5 1241.4,711.5 C1247.1,707.6 1251.5,703.2 1257.2,701.0 C1262.9,698.8 1272.6,698.8 1275.6,698.4 M1241.4,711.5 C1244.9,717.7 1256.8,738.7 1262.5,748.4 C1268.2,758.0 1273.4,765.9 1275.6,769.4 M1270.4,698.4 L1294.1,743.1 M1304.6,811.5 C1305.0,808.0 1296.7,798.4 1307.2,790.5 C1317.7,782.6 1354.6,769.4 1367.7,764.2 C1380.9,758.9 1381.8,757.6 1386.2,758.9 C1390.5,760.2 1391.4,766.8 1394.1,772.1 C1396.7,777.3 1398.0,780.8 1401.9,790.5 C1405.9,800.1 1414.2,818.9 1417.7,829.9 C1421.2,841.0 1422.1,852.5 1423.0,857.1 M1338.8,722.1 L1373.0,748.4 M1423.0,748.4 C1421.2,750.1 1417.3,756.3 1412.5,758.9 C1407.6,761.5 1397.1,763.3 1394.1,764.2 M1462.5,769.4 C1458.5,772.1 1444.1,779.1 1438.8,785.2 C1433.5,791.4 1430.9,794.3 1430.9,806.3 C1430.9,818.2 1437.5,848.6 1438.8,857.1 M1470.4,601.0 C1471.2,606.3 1475.2,620.3 1475.6,632.6 C1476.1,644.9 1471.2,665.0 1473.0,674.7 C1474.8,684.3 1479.6,688.3 1486.2,690.5 C1492.7,692.7 1506.3,689.6 1512.5,687.8 C1518.6,686.1 1521.2,681.3 1523.0,679.9 M1491.4,601.0 C1494.9,609.8 1507.6,641.4 1512.5,653.6 C1517.3,665.9 1519.1,671.2 1520.4,674.7 M1446.7,614.2 L1459.8,658.9 M1415.1,674.7 L1423.0,664.2 M1496.7,727.3 L1517.7,695.7 M1394.1,806.3 L1407.2,803.6 M1401.9,832.6 L1412.5,829.9 M1365.1,845.7 L1378.3,843.1 M1501.9,832.6 L1512.5,837.8 M1486.2,848.4 L1496.7,853.6 M1223.0,758.9 L1238.8,748.4 M1315.1,601.0 C1317.3,605.4 1325.2,618.5 1328.3,627.3 C1331.3,636.1 1332.6,649.2 1333.5,653.6 M1541.4,753.6 C1544.9,745.7 1556.3,718.5 1562.5,706.2 C1568.6,694.0 1575.6,688.7 1578.2,679.9 C1580.9,671.2 1574.3,665.5 1578.2,653.6 C1582.2,641.8 1598.0,616.3 1601.9,608.9 M1523.0,616.8 L1533.5,637.8 M1604.6,790.4 C1608.5,783.4 1623.9,766.7 1628.2,748.3 C1632.6,729.9 1629.1,695.7 1630.9,679.9 C1632.6,664.1 1633.1,665.0 1638.8,653.6 C1644.5,642.2 1659.8,620.3 1665.1,611.5 C1670.3,602.8 1669.5,602.8 1670.3,601.0 M1665.1,611.5 C1680.0,612.4 1736.1,615.5 1754.5,616.8 C1772.9,618.1 1772.5,615.0 1775.6,619.4 C1778.6,623.8 1773.4,639.1 1772.9,643.1 M1754.5,601.0 L1755.8,616.8 M1644.0,651.0 C1651.0,654.5 1673.0,668.5 1686.1,672.0 C1699.3,675.5 1716.8,672.0 1722.9,672.0 M1778.2,601.0 C1778.4,610.2 1775.6,645.7 1779.5,656.2 C1783.5,666.8 1797.5,659.3 1801.9,664.1 C1806.3,669.0 1802.3,681.2 1805.8,685.2 C1809.3,689.1 1820.1,687.4 1822.9,687.8 M1812.4,601.0 L1822.9,616.8 M1630.9,751.0 C1637.4,753.2 1656.7,757.5 1670.3,764.1 C1683.9,770.7 1697.5,784.3 1712.4,790.4 C1727.3,796.6 1748.4,798.3 1759.8,800.9 C1771.2,803.6 1773.8,807.1 1780.8,806.2 C1787.8,805.3 1794.9,802.7 1801.9,795.7 C1808.9,788.7 1819.4,769.4 1822.9,764.1 M1738.7,793.1 C1737.4,798.8 1735.7,820.2 1730.8,827.3 C1726.0,834.3 1713.3,833.8 1709.8,835.1 M1770.3,753.6 C1771.2,756.2 1771.2,761.9 1775.6,769.4 C1779.9,776.8 1792.2,792.2 1796.6,798.3 C1801.0,804.5 1801.0,804.9 1801.9,806.2 M1799.2,732.5 C1799.7,736.9 1799.2,752.3 1801.9,758.9 C1804.5,765.4 1812.8,769.8 1815.0,772.0 M1801.9,837.8 L1822.9,848.3 M1559.8,800.9 L1538.8,857.0 M1586.1,822.0 L1575.6,857.0 M1599.3,827.3 L1604.6,857.0 M1523.0,829.9 L1538.8,832.5 M1609.8,832.5 L1633.5,857.0 M1189.3,860.0 C1189.3,854.3 1186.6,835.2 1189.3,825.7 C1192.0,816.2 1195.8,809.8 1205.7,802.7 C1215.6,795.6 1229.3,790.1 1248.5,783.0 C1267.7,775.9 1308.8,763.8 1320.8,760.0 M1212.3,860.0 C1212.3,854.8 1209.6,836.4 1212.3,829.0 C1215.0,821.6 1218.3,819.7 1228.7,815.9 C1239.1,812.1 1265.4,809.0 1274.8,806.0 C1284.2,803.0 1283.3,799.3 1285.0,798.0 M1248.5,783.0 C1250.7,785.2 1254.5,793.2 1261.6,796.2 C1268.7,799.2 1284.1,800.3 1291.2,801.1 C1298.3,801.9 1300.5,799.7 1304.3,801.1 C1308.1,802.5 1310.4,804.1 1314.2,809.3 C1318.0,814.5 1324.0,823.8 1327.3,832.3 C1330.6,840.8 1332.9,855.4 1334.0,860.0 M1274.8,806.0 C1276.8,802.0 1282.1,788.8 1287.0,782.0 C1291.9,775.2 1296.8,771.2 1304.0,765.0 C1311.2,758.8 1316.0,754.2 1330.0,745.0 C1344.0,735.8 1378.3,715.8 1388.0,710.0 M1301.0,812.6 C1302.1,809.3 1303.8,797.8 1307.6,792.9 C1311.4,788.0 1312.5,787.9 1324.0,783.0 C1335.5,778.1 1365.2,767.5 1376.7,763.3 C1388.2,759.1 1390.3,758.9 1393.0,758.0 M1320.8,812.6 C1332.8,807.7 1379.9,788.4 1393.1,783.0 C1406.3,777.6 1398.8,780.5 1400.0,780.0 M1228.7,855.3 C1251.2,849.8 1339.4,827.4 1363.5,822.5 C1387.6,817.6 1370.1,819.5 1373.4,825.7 C1376.7,832.0 1381.6,854.3 1383.2,860.0 M1110.4,815.9 C1116.4,819.2 1133.9,833.7 1146.5,835.6 C1159.1,837.5 1179.4,828.8 1186.0,827.4 M1146.5,835.6 L1143.0,860.0 M1163.0,834.0 L1169.6,860.0 M1126.0,802.7 C1130.5,804.1 1144.7,811.0 1153.0,811.0 C1161.3,811.0 1170.0,805.9 1176.0,802.7 C1182.0,799.5 1187.1,793.8 1189.3,792.0 M1395.0,808.6 L1405.0,808.6 M1388.0,850.0 L1402.0,846.0 M1185.8,385.5 C1188.6,382.3 1196.2,372.7 1202.6,366.3 C1209.0,359.9 1209.5,354.4 1224.1,347.2 C1238.7,340.0 1279.0,327.2 1290.0,323.2 M1224.1,347.2 C1222.5,341.6 1214.6,321.6 1214.6,313.6 C1214.6,305.6 1216.9,306.9 1224.1,299.3 C1231.3,291.7 1246.7,277.7 1257.7,268.1 C1268.7,258.5 1284.6,246.2 1290.0,241.8 M1135.5,342.4 C1139.9,337.6 1153.5,324.0 1161.9,313.6 C1170.3,303.2 1179.0,289.7 1185.8,280.1 C1192.6,270.5 1197.8,262.6 1202.6,256.2 C1207.4,249.8 1212.6,244.2 1214.6,241.8 M1178.6,344.8 C1180.6,342.8 1186.2,332.8 1190.6,332.8 C1195.0,332.8 1204.6,340.4 1205.0,344.8 C1205.4,349.2 1197.4,358.8 1193.0,359.2 C1188.6,359.6 1181.0,349.2 1178.6,347.2 M1226.5,373.5 C1234.9,370.3 1267.6,354.4 1276.8,354.4 C1286.0,354.4 1288.8,367.1 1281.6,373.5 C1274.4,379.9 1242.9,392.7 1233.7,392.7 C1224.5,392.7 1227.7,376.7 1226.5,373.5 M1245.7,404.7 C1249.3,403.9 1262.8,397.5 1267.2,399.9 C1271.6,402.3 1274.4,414.2 1272.0,419.0 C1269.6,423.8 1257.3,431.0 1252.9,428.6 C1248.5,426.2 1246.9,408.7 1245.7,404.7 M1169.0,428.6 C1172.6,427.0 1183.8,421.0 1190.6,419.0 C1197.4,417.0 1206.6,417.0 1209.8,416.6 M1169.0,428.6 C1169.8,431.8 1170.2,443.8 1173.8,447.8 C1177.4,451.8 1185.8,449.4 1190.6,452.6 C1195.4,455.8 1200.6,464.5 1202.6,466.9 M1233.7,304.1 L1240.9,313.6 M1262.5,256.2 C1263.3,260.2 1267.2,271.3 1267.2,280.1 C1267.2,288.9 1263.3,304.1 1262.5,308.9 M1090.0,380.7 L1140.3,356.8 M1133.1,459.8 L1243.3,447.8 M1285.4,237.0 C1285.8,245.0 1285.8,266.9 1287.8,284.9 C1289.8,302.9 1293.4,329.6 1297.4,344.8 C1301.4,360.0 1306.5,368.7 1311.7,375.9 C1316.9,383.1 1325.7,385.9 1328.5,387.9 M1283.0,325.6 C1287.8,324.0 1300.5,317.8 1311.7,316.0 C1322.9,314.2 1338.8,316.8 1350.0,314.8 C1361.2,312.8 1369.2,309.0 1378.8,304.0 C1388.4,299.0 1400.7,284.5 1407.5,284.9 C1414.3,285.3 1415.1,300.0 1419.5,306.4 C1423.9,312.8 1431.5,320.4 1433.9,323.2 M1311.7,237.0 L1311.7,316.0 M1362.0,237.0 C1360.8,239.4 1358.4,245.0 1354.8,251.4 C1351.2,257.8 1344.1,264.5 1340.5,275.3 C1336.9,286.1 1334.5,300.0 1333.3,316.0 C1332.1,332.0 1334.1,359.1 1333.3,371.1 C1332.5,383.1 1332.1,381.5 1328.5,387.9 C1324.9,394.3 1317.3,403.4 1311.7,409.4 C1306.1,415.4 1297.8,421.4 1295.0,423.8 M1345.3,272.9 L1359.6,287.3 M1354.8,251.4 L1378.8,272.9 M1333.3,373.5 C1340.1,373.9 1363.6,377.9 1374.0,375.9 C1384.4,373.9 1388.3,367.5 1395.5,361.5 C1402.7,355.5 1408.3,348.4 1417.1,340.0 C1425.9,331.6 1440.2,319.2 1448.2,311.2 C1456.2,303.2 1462.2,295.3 1465.0,292.1 M1374.0,375.9 C1376.4,382.3 1384.4,401.8 1388.4,414.2 C1392.4,426.6 1393.1,442.9 1397.9,450.1 C1402.7,457.3 1410.3,454.0 1417.1,457.3 C1423.9,460.6 1435.1,467.9 1438.7,470.0 M1402.7,349.5 C1406.7,353.1 1416.3,362.3 1426.7,371.1 C1437.1,379.9 1458.6,397.0 1465.0,402.2 M1417.1,392.7 L1436.3,378.3 M1402.7,385.5 C1404.3,387.9 1409.1,394.2 1412.3,399.8 C1415.5,405.4 1417.9,413.4 1421.9,419.0 C1425.9,424.6 1430.7,431.0 1436.3,433.4 C1441.9,435.8 1452.2,433.4 1455.4,433.4 M1445.8,316.0 C1449.4,320.8 1463.0,335.6 1467.4,344.8 C1471.8,354.0 1472.6,361.9 1472.2,371.1 C1471.8,380.3 1467.8,391.8 1465.0,399.8 C1462.2,407.8 1457.0,407.3 1455.4,419.0 C1453.8,430.7 1455.4,461.5 1455.4,470.0 M1441.0,351.9 L1465.0,344.8 M1402.7,316.0 L1419.5,306.4 M1455.4,454.9 L1512.9,459.7 M1493.7,428.6 C1495.7,428.2 1502.9,425.0 1505.7,426.2 C1508.5,427.4 1509.7,434.2 1510.5,435.8 M1378.8,316.0 L1381.2,337.6 M1354.8,316.0 L1357.2,351.9 M1104.9,491.5 C1107.7,490.3 1111.6,487.1 1121.5,484.3 C1131.4,481.5 1154.2,477.2 1164.5,474.8 C1174.8,472.4 1180.4,470.8 1183.6,470.0 M1162.1,477.2 C1161.7,480.0 1162.5,488.2 1159.7,493.8 C1156.9,499.4 1148.2,505.7 1145.4,510.5 C1142.6,515.3 1143.4,520.5 1143.0,522.5 M1193.1,470.0 C1195.1,474.0 1201.4,490.2 1205.0,493.8 C1208.6,497.4 1214.2,495.5 1214.6,491.5 C1215.0,487.5 1208.6,473.6 1207.4,470.0 M1221.7,484.3 C1223.3,483.1 1227.3,476.4 1231.3,477.2 C1235.3,478.0 1240.8,484.7 1245.6,489.1 C1250.4,493.5 1257.5,501.0 1259.9,503.4 M1216.9,508.2 C1219.3,507.8 1228.9,503.4 1231.3,505.8 C1233.7,508.2 1231.3,519.7 1231.3,522.5 M1200.3,505.8 L1205.0,536.8 M1059.5,534.4 C1062.7,532.8 1072.2,527.7 1078.6,524.9 C1085.0,522.1 1093.3,520.1 1097.7,517.7 C1102.1,515.3 1103.7,511.7 1104.9,510.5 M1064.3,534.4 C1065.9,537.6 1069.8,545.5 1073.8,553.5 C1077.8,561.5 1084.2,573.8 1088.2,582.1 C1092.2,590.5 1094.5,594.5 1097.7,603.6 C1100.9,612.7 1104.0,631.4 1107.2,636.9 C1110.4,642.4 1115.2,636.9 1116.8,636.9 M1092.9,570.2 L1126.3,565.4 M1095.3,591.6 C1102.1,590.4 1122.8,584.1 1135.9,584.5 C1149.0,584.9 1165.3,593.6 1174.0,594.0 C1182.7,594.4 1185.9,588.1 1188.3,586.9 M1188.3,586.9 C1185.9,590.5 1180.0,602.3 1174.0,608.3 C1168.0,614.2 1162.9,617.8 1152.6,622.6 C1142.3,627.4 1118.8,634.5 1112.0,636.9 M1128.7,601.2 L1140.6,627.4 M1145.4,608.3 L1150.2,622.6 M1209.8,563.0 L1264.6,546.3 M1178.8,636.9 C1183.6,636.5 1201.1,629.8 1207.4,634.6 C1213.8,639.4 1220.1,660.1 1216.9,665.6 C1213.7,671.1 1194.7,672.7 1188.3,667.9 C1181.9,663.1 1180.4,642.1 1178.8,636.9 M1188.3,665.6 L1214.6,656.0 M1140.6,646.5 L1159.7,641.7 M1264.6,594.0 L1283.0,586.9 M1368.9,493.8 C1371.3,491.4 1373.7,483.5 1383.2,479.5 C1392.7,475.5 1418.9,471.6 1426.1,470.0 M1371.2,517.7 C1374.4,516.1 1382.7,512.2 1390.3,508.2 C1397.9,504.2 1409.8,500.2 1416.6,493.8 C1423.4,487.4 1428.5,474.0 1430.9,470.0 M1390.3,508.2 L1399.9,522.5 M1409.4,477.2 L1416.6,484.3 M1469.0,470.0 C1468.6,473.2 1469.8,483.9 1466.6,489.1 C1463.4,494.3 1455.1,499.4 1449.9,501.0 C1444.7,502.6 1438.0,499.0 1435.6,498.6 M1364.1,532.0 C1367.3,535.2 1378.8,544.7 1383.2,551.1 C1387.6,557.5 1388.7,563.9 1390.3,570.2 C1391.9,576.6 1390.7,581.2 1392.7,589.2 C1394.7,597.2 1399.8,611.5 1402.2,617.9 C1404.6,624.3 1406.2,625.8 1407.0,627.4 M1392.7,560.6 C1397.5,558.2 1414.5,551.9 1421.3,546.3 C1428.1,540.7 1430.5,527.6 1433.3,527.2 C1436.1,526.8 1440.0,540.3 1438.0,543.9 C1436.0,547.5 1424.1,547.9 1421.3,548.7 M1337.9,527.2 C1338.3,531.2 1338.2,543.9 1340.2,551.1 C1342.2,558.3 1342.6,569.0 1349.8,570.2 C1357.0,571.4 1377.6,560.2 1383.2,558.2 M1387.9,577.3 C1396.7,574.9 1431.2,563.8 1440.4,563.0 C1449.6,562.2 1450.3,568.2 1442.8,572.6 C1435.2,577.0 1403.0,586.4 1395.1,589.2 M1449.9,539.2 C1453.9,538.0 1467.4,526.8 1473.8,532.0 C1480.2,537.2 1489.3,562.2 1488.1,570.2 C1486.9,578.2 1473.0,584.9 1466.6,579.7 C1460.2,574.5 1452.7,546.0 1449.9,539.2 M1445.2,615.5 L1449.9,625.0 M1342.6,470.0 C1343.8,474.8 1350.6,491.9 1349.8,498.6 C1349.0,505.4 1339.9,508.5 1337.9,510.5 M1356.9,470.0 C1358.9,474.0 1366.5,487.1 1368.9,493.8 C1371.3,500.6 1372.0,504.1 1371.2,510.5 C1370.4,516.9 1365.3,528.4 1364.1,532.0" fill="none" stroke="#dfdfdf" stroke-width="4.5" stroke-linecap="round" stroke-linejoin="round"/>
<path d="M834.9,89.0 C844.1,96.5 874.8,121.0 890.2,133.7 C905.5,146.5 920.9,160.1 927.0,165.3 M925.0,165.3 C931.6,170.6 949.1,183.3 964.5,196.9 C979.8,210.5 999.6,231.5 1017.1,246.9 C1034.6,262.2 1054.4,276.7 1069.7,289.0 C1085.1,301.3 1097.4,311.2 1109.2,320.6 C1121.1,329.9 1135.5,341.0 1140.8,345.1 M755.9,339.7 C758.1,341.5 760.3,348.9 769.1,350.3 C777.9,351.6 798.9,347.6 808.6,347.6 C818.2,347.6 821.3,347.6 827.0,350.3 C832.7,352.9 838.0,357.3 842.8,363.4 C847.6,369.6 853.8,383.2 855.9,387.1 M769.1,350.3 C766.9,352.0 759.0,355.1 755.9,360.8 C752.9,366.5 751.6,373.9 750.7,384.5 C749.8,395.0 749.8,413.0 750.7,423.9 C751.6,434.9 752.9,441.5 755.9,450.3 C759.0,459.0 763.4,469.1 769.1,476.6 C774.8,484.0 781.8,490.6 790.2,495.0 C798.5,499.4 810.3,499.4 819.1,502.9 C827.9,506.4 835.3,510.4 842.8,516.1 C850.2,521.8 855.9,531.8 863.8,537.1 C871.7,542.4 879.6,545.9 890.2,547.6 C900.7,549.4 920.9,547.6 927.0,547.6 M1223.0,698.4 C1231.8,695.3 1255.5,687.4 1275.6,679.9 C1295.8,672.5 1326.5,661.1 1344.1,653.6 C1361.6,646.2 1374.8,638.3 1380.9,635.2 M1349.3,687.8 C1352.8,690.0 1358.1,692.2 1370.4,701.0 C1382.6,709.8 1403.7,726.4 1423.0,740.5 C1442.3,754.5 1468.6,773.4 1486.2,785.2 C1503.7,797.1 1521.2,807.1 1528.3,811.5 M1754.5,857.0 C1758.0,851.6 1767.7,833.1 1775.6,824.6 C1783.5,816.2 1794.0,809.7 1801.9,806.2 C1809.8,802.7 1819.4,804.0 1822.9,803.6 M1517.7,811.5 C1527.4,816.7 1562.5,835.5 1575.6,843.0 C1588.8,850.6 1593.2,854.7 1596.7,857.0 M1283.0,541.5 C1286.2,547.9 1295.3,566.2 1302.1,579.7 C1308.8,593.2 1318.7,613.1 1323.5,622.6 C1328.3,632.1 1329.5,634.5 1330.7,636.9 M1090.0,304.0 C1098.0,310.4 1121.9,328.8 1137.9,342.4 C1153.9,356.0 1171.4,371.9 1185.8,385.5 C1200.2,399.1 1213.7,412.6 1224.1,423.8 C1234.5,435.0 1241.7,444.1 1248.0,452.6 C1254.3,461.1 1256.2,460.2 1262.0,475.0 C1267.8,489.8 1279.5,530.4 1283.0,541.5" fill="none" stroke="#dfdfdf" stroke-width="6.3" stroke-linecap="round" stroke-linejoin="round"/>
<path d="M627.0,285.1 C638.0,283.1 673.1,277.8 692.8,273.2 C712.5,268.6 727.4,263.6 745.4,257.4 C763.4,251.3 789.7,240.5 800.7,236.4 C811.6,232.2 809.5,233.1 811.2,232.4 M827.0,229.8 L927.0,194.3 M925.0,194.3 C938.2,189.9 975.4,177.8 1003.9,167.9 C1032.5,158.1 1065.4,146.0 1096.1,135.1 C1126.8,124.1 1166.7,109.8 1188.2,102.2 C1209.6,94.5 1218.9,91.2 1225.0,89.0 M1517.7,582.3 C1536.2,576.1 1587.9,559.9 1628.2,544.9 C1668.6,530.0 1726.5,506.3 1759.8,492.3 C1793.1,478.4 1816.8,466.5 1828.2,461.3 M1328.3,669.4 C1337.0,665.5 1356.3,657.6 1380.9,645.7 C1405.5,633.9 1451.9,609.3 1475.6,598.4 C1499.3,587.4 1515.1,583.0 1523.0,579.9 M1354.5,651.3 C1364.8,646.9 1397.5,632.6 1416.6,625.0 C1435.7,617.4 1452.4,612.2 1469.0,605.9 C1485.6,599.5 1508.2,590.1 1516.0,586.9" fill="none" stroke="#dfdfdf" stroke-width="9.3" stroke-linecap="round" stroke-linejoin="round"/>
<path d="M961.8,861.5 C968.9,855.8 991.7,839.2 1003.9,827.3 C1016.2,815.5 1025.9,800.1 1035.5,790.5 C1045.2,780.8 1049.6,777.3 1061.8,769.4 C1074.1,761.5 1092.5,751.9 1109.2,743.1 C1125.9,734.3 1141.7,725.0 1161.8,716.8 C1182.0,708.5 1218.9,697.5 1230.3,693.6" fill="none" stroke="#dfdfdf" stroke-width="10.3" stroke-linecap="round" stroke-linejoin="round"/>
<path d="M1783.5,83.7 C1786.5,87.2 1794.4,96.9 1801.9,104.8 C1809.3,112.7 1823.8,126.7 1828.2,131.1" fill="none" stroke="#dfdfdf" stroke-width="12.3" stroke-linecap="round" stroke-linejoin="round"/>
<path d="M751.0,717.5 C760.2,721.2 791.2,733.5 806.0,739.8 C820.8,746.0 834.3,752.5 840.0,755.0 M717.6,746.6 L789.7,762.0 M706.5,767.2 L806.0,799.8 M692.8,786.0 L842.0,842.8 M680.7,808.4 L843.8,861.6 M811.2,712.3 C809.5,717.2 803.2,732.4 800.9,741.5 C798.6,750.6 796.9,759.8 797.5,767.2 C798.1,774.6 803.2,782.9 804.3,786.0 M804.3,786.0 C809.4,787.2 828.6,787.5 835.2,793.0 C841.8,798.5 842.1,807.5 843.8,818.7 C845.5,829.9 845.2,853.1 845.5,860.0 M746.0,736.0 L754.6,717.5 M764.9,810.2 L747.7,860.0 M809.5,772.4 L854.1,765.5 M735.0,705.0 L751.0,717.5" fill="none" stroke="#ffffff" stroke-width="2.6" stroke-linecap="round" stroke-linejoin="round"/>
<path d="M853.3,104.8 L890.2,89.0 M890.2,133.7 C892.8,131.1 899.8,121.7 905.9,117.9 C912.1,114.2 923.5,112.5 927.0,111.4 M648.1,89.0 C652.4,93.8 666.9,110.9 674.4,117.9 C681.8,125.0 689.7,128.9 692.8,131.1 M642.8,117.9 C648.1,114.9 665.6,104.4 674.4,99.5 C683.1,94.7 691.9,90.8 695.4,89.0 M679.6,115.3 L716.5,89.0 M627.0,102.2 L642.8,89.0 M727.0,117.9 L774.4,114.0 M748.1,117.9 L755.9,175.8 M627.0,152.2 C628.8,154.8 632.7,162.7 637.5,167.9 C642.4,173.2 650.7,179.4 655.9,183.7 C661.2,188.1 666.9,192.5 669.1,194.3 M627.0,202.2 C629.6,201.3 639.7,194.7 642.8,196.9 C645.9,199.1 648.1,210.5 645.4,215.3 C642.8,220.1 630.1,224.1 627.0,225.8 M669.1,194.3 C675.2,191.2 694.5,182.2 705.9,175.8 C717.4,169.5 732.3,159.4 737.5,156.1 M666.5,199.5 L666.5,212.7 M727.0,273.2 L758.6,260.1 M732.3,283.7 C733.1,287.2 734.0,302.2 737.5,304.8 C741.0,307.4 750.2,304.4 753.3,299.5 C756.4,294.7 755.5,279.8 755.9,275.8 M634.9,285.1 C635.3,289.7 635.8,305.0 637.5,312.7 C639.3,320.4 644.1,328.0 645.4,331.1 M713.8,345.1 C720.4,343.2 743.2,333.7 753.3,333.7 C763.4,333.7 770.9,343.2 774.4,345.1 M863.8,299.5 L927.0,278.5 M627.0,320.6 L632.3,325.8 M687.5,175.8 C690.6,171.5 697.6,155.2 705.9,149.5 C714.3,143.8 732.3,142.9 737.5,141.6 M925.0,110.1 C932.9,107.4 961.4,97.8 972.4,94.3 C983.3,90.8 987.7,89.9 990.8,89.0 M951.3,102.2 L952.6,115.3 M977.6,91.6 L980.3,107.4 M1003.9,89.0 C1006.6,94.3 1015.4,116.2 1019.7,120.6 C1024.1,125.0 1027.2,117.9 1030.3,115.3 C1033.3,112.7 1037.3,109.2 1038.2,104.8 C1039.0,100.4 1036.0,91.6 1035.5,89.0 M993.4,128.5 L1025.0,152.2 M1030.3,115.3 L1051.3,144.3 M1061.8,89.0 L1077.6,136.4 M1067.1,102.2 C1070.6,101.3 1084.6,99.1 1088.2,96.9 C1091.7,94.7 1088.2,90.3 1088.2,89.0 M1117.1,89.0 L1119.7,115.3 M1125.0,96.9 L1161.8,89.0 M1156.6,128.5 C1160.1,130.2 1170.2,135.5 1177.6,139.0 C1185.1,142.5 1193.4,143.8 1201.3,149.5 C1209.2,155.2 1221.1,169.3 1225.0,173.2 M1119.7,115.3 C1120.6,121.9 1122.4,142.5 1125.0,154.8 C1127.6,167.1 1131.1,178.0 1135.5,189.0 C1139.9,200.0 1146.9,212.7 1151.3,220.6 C1155.7,228.5 1155.3,229.8 1161.8,236.4 C1168.4,242.9 1186.0,256.1 1190.8,260.1 M996.1,173.2 C996.9,176.7 994.7,192.5 1001.3,194.3 C1007.9,196.0 1029.8,187.7 1035.5,183.7 C1041.2,179.8 1035.5,172.8 1035.5,170.6 M1135.5,167.9 C1139.9,167.7 1146.9,158.7 1161.8,166.6 C1176.8,174.5 1214.5,207.2 1225.0,215.3 M1143.4,196.9 C1146.5,196.5 1150.9,186.4 1161.8,194.3 C1172.8,202.2 1201.3,235.9 1209.2,244.3 M1059.2,210.1 C1059.6,212.7 1057.9,217.5 1061.8,225.8 C1065.8,234.2 1078.5,252.2 1082.9,260.1 C1087.3,267.9 1087.3,271.0 1088.2,273.2 M1061.8,273.2 C1076.8,264.9 1130.3,229.4 1151.3,223.2 C1172.4,217.1 1182.0,234.2 1188.2,236.4 M1056.6,281.1 C1070.6,277.6 1123.2,262.2 1140.8,260.1 C1158.3,257.9 1153.9,263.6 1161.8,267.9 C1169.7,272.3 1183.8,283.3 1188.2,286.4 M1001.3,246.9 L1040.8,240.3 M943.4,210.1 C943.0,214.4 938.6,230.2 940.8,236.4 C943.0,242.5 950.4,245.1 956.6,246.9 C962.7,248.6 971.5,242.5 977.6,246.9 C983.8,251.3 993.4,267.1 993.4,273.2 C993.4,279.4 980.3,282.0 977.6,283.7 M1022.4,304.8 L1043.4,273.2 M1009.2,341.6 L1067.1,302.2 M1098.7,152.2 C1102.2,152.6 1113.2,155.2 1119.7,154.8 C1126.3,154.4 1135.1,150.4 1138.2,149.5 M1156.6,149.5 L1159.2,167.9 M1061.8,220.6 L1135.5,189.0 M1003.9,252.2 C1006.1,248.6 1011.0,238.1 1017.1,231.1 C1023.2,224.1 1036.8,213.6 1040.8,210.1 M1234.8,106.1 C1243.8,106.1 1279.8,99.5 1288.8,106.1 C1297.8,112.7 1297.1,139.7 1288.8,145.6 C1280.5,151.5 1247.1,142.3 1238.8,141.6 M1223.0,136.4 C1225.6,137.2 1232.2,136.8 1238.8,141.6 C1245.4,146.5 1259.0,156.5 1262.5,165.3 C1266.0,174.1 1262.9,185.9 1259.8,194.3 C1256.8,202.6 1250.2,208.3 1244.1,215.3 C1237.9,222.3 1226.5,232.9 1223.0,236.4 M1223.0,152.2 C1225.6,151.7 1234.4,146.0 1238.8,149.5 C1243.2,153.0 1251.9,166.6 1249.3,173.2 C1246.7,179.8 1227.4,186.4 1223.0,189.0 M1333.5,89.0 C1333.5,91.6 1334.4,101.3 1333.5,104.8 C1332.6,108.3 1329.1,109.2 1328.3,110.1 M1338.8,89.0 L1349.3,120.6 M1344.1,115.3 L1380.9,104.8 M1375.6,89.0 L1386.2,110.1 M1383.5,174.5 C1388.4,171.2 1403.3,163.8 1412.5,154.8 C1421.7,145.8 1432.2,130.7 1438.8,120.6 C1445.4,110.5 1445.8,99.5 1451.9,94.3 C1458.1,89.0 1471.7,89.9 1475.6,89.0 M1430.9,131.1 C1432.6,132.9 1432.2,140.8 1441.4,141.6 C1450.6,142.5 1476.9,137.7 1486.2,136.4 C1495.4,135.1 1494.9,134.2 1496.7,133.7 M1467.7,116.6 L1488.8,111.4 M1480.9,89.0 C1483.5,96.9 1491.4,117.9 1496.7,136.4 C1501.9,154.8 1508.1,185.5 1512.5,199.5 C1516.9,213.6 1521.2,217.1 1523.0,220.6 M1507.2,89.0 L1523.0,131.1 M1362.5,241.6 C1365.5,236.8 1373.4,220.6 1380.9,212.7 C1388.4,204.8 1396.2,199.5 1407.2,194.3 C1418.2,189.0 1427.4,188.1 1446.7,181.1 C1466.0,174.1 1510.3,157.0 1523.0,152.2 M1392.7,170.6 L1407.2,204.8 M1428.3,189.0 C1430.5,194.3 1439.7,210.9 1441.4,220.6 C1443.2,230.2 1438.8,233.7 1438.8,246.9 C1438.8,260.1 1439.2,289.4 1441.4,299.5 C1443.6,309.6 1450.2,306.1 1451.9,307.4 M1441.4,224.5 L1473.0,224.5 M1449.3,178.5 C1450.2,181.1 1451.5,191.0 1454.6,194.3 C1457.6,197.6 1465.5,197.6 1467.7,198.2 M1486.2,167.9 L1496.7,217.9 M1449.3,310.1 C1452.8,303.9 1462.5,283.7 1470.4,273.2 C1478.3,262.7 1487.9,255.2 1496.7,246.9 C1505.5,238.6 1518.6,227.2 1523.0,223.2 M1444.1,246.9 C1448.0,247.3 1460.7,245.1 1467.7,249.5 C1474.8,253.9 1480.5,266.6 1486.2,273.2 C1491.9,279.8 1495.8,281.5 1501.9,289.0 C1508.1,296.5 1519.5,313.1 1523.0,317.9 M1486.2,273.2 L1523.0,252.2 M1496.7,289.0 L1523.0,273.2 M1375.6,207.4 C1381.8,212.7 1406.3,226.3 1412.5,239.0 C1418.6,251.7 1412.5,276.3 1412.5,283.7 M1301.9,233.7 C1307.2,232.0 1323.9,221.9 1333.5,223.2 C1343.2,224.5 1355.5,238.6 1359.8,241.6 M1317.7,217.9 L1328.3,246.9 M1373.0,231.1 L1388.8,252.2 M1659.8,315.3 C1665.9,313.9 1685.2,307.8 1696.6,307.4 C1708.0,306.9 1713.3,314.8 1728.2,312.6 C1743.1,310.4 1770.3,299.9 1786.1,294.2 C1801.9,288.5 1816.8,281.1 1822.9,278.4 M1623.0,231.1 L1659.8,315.3 M1607.2,233.7 C1619.0,231.5 1663.8,223.2 1678.2,220.5 C1692.7,217.9 1691.4,221.4 1694.0,217.9 C1696.6,214.4 1694.0,202.6 1694.0,199.5 M1525.6,217.9 C1530.0,217.0 1538.3,210.0 1551.9,212.7 C1565.5,215.3 1598.0,230.2 1607.2,233.7 M1551.9,212.7 C1552.8,217.0 1559.8,228.9 1557.2,239.0 C1554.6,249.0 1541.9,265.7 1536.2,273.2 C1530.5,280.6 1525.2,281.9 1523.0,283.7 M1538.8,175.8 C1541.9,174.5 1544.9,171.0 1557.2,167.9 C1569.5,164.9 1598.4,157.4 1612.5,157.4 C1626.5,157.4 1636.6,166.2 1641.4,167.9 M1523.0,125.8 C1526.5,125.4 1531.8,127.6 1544.0,123.2 C1556.3,118.8 1585.7,105.2 1596.7,99.5 C1607.6,93.8 1607.6,90.8 1609.8,89.0 M1523.0,133.7 C1525.6,140.3 1534.0,160.9 1538.8,173.2 C1543.6,185.5 1549.7,201.7 1551.9,207.4 M1544.0,123.2 L1551.9,167.9 M1575.6,107.4 C1576.9,110.0 1581.3,115.3 1583.5,123.2 C1585.7,131.1 1587.5,147.3 1588.8,154.8 C1590.1,162.2 1591.0,165.7 1591.4,167.9 M1609.8,89.0 C1612.9,91.2 1626.9,96.5 1628.2,102.2 C1629.6,107.9 1621.2,114.4 1617.7,123.2 C1614.2,132.0 1609.8,139.4 1607.2,154.8 C1604.6,170.1 1601.9,202.1 1601.9,215.3 C1601.9,228.4 1606.3,230.6 1607.2,233.7 M1659.8,89.0 C1658.9,97.8 1657.6,128.5 1654.5,141.6 C1651.5,154.8 1645.8,158.3 1641.4,167.9 C1637.0,177.6 1630.9,189.0 1628.2,199.5 C1625.6,210.0 1626.0,225.8 1625.6,231.1 M1641.4,115.3 C1644.5,115.3 1653.7,117.1 1659.8,115.3 C1665.9,113.6 1669.5,106.5 1678.2,104.8 C1687.0,103.0 1706.7,104.8 1712.4,104.8 M1691.4,110.0 C1687.9,117.9 1674.7,147.8 1670.3,157.4 C1665.9,167.0 1665.9,166.2 1665.1,167.9 M1712.4,104.8 C1715.9,110.0 1732.6,128.9 1733.5,136.4 C1734.3,143.8 1721.2,143.4 1717.7,149.5 C1714.2,155.6 1717.7,168.8 1712.4,173.2 C1707.2,177.6 1690.5,175.4 1686.1,175.8 M1649.3,154.8 C1652.8,157.0 1660.7,164.4 1670.3,167.9 C1680.0,171.4 1701.0,174.5 1707.2,175.8 M1630.9,194.2 C1634.8,195.1 1641.0,199.1 1654.5,199.5 C1668.1,199.9 1701.0,190.7 1712.4,196.9 C1723.8,203.0 1728.2,229.8 1722.9,236.3 C1717.7,242.9 1687.9,239.0 1680.9,236.3 C1673.8,233.7 1680.9,223.2 1680.9,220.5 M1649.3,199.5 L1646.7,225.8 M1573.0,189.0 C1576.1,187.7 1585.7,181.5 1591.4,181.1 C1597.1,180.6 1604.6,185.5 1607.2,186.3 M1573.0,189.0 L1575.6,212.7 M1557.2,239.0 C1565.5,240.3 1598.4,241.2 1607.2,246.9 C1616.0,252.6 1610.7,264.4 1609.8,273.2 C1608.9,281.9 1607.6,290.7 1601.9,299.5 C1596.2,308.2 1580.0,321.4 1575.6,325.8 M1523.0,288.9 L1575.6,246.9 M1562.5,267.9 L1636.1,281.1 M1523.0,307.4 C1530.9,304.7 1557.2,294.6 1570.4,291.6 C1583.5,288.5 1596.7,289.4 1601.9,288.9 M1538.8,338.9 L1596.7,294.2 M1707.2,89.0 L1733.5,136.4 M1738.7,99.5 L1770.3,89.0 M1746.6,104.8 L1757.1,128.5 M1754.5,120.6 L1786.1,110.0 M1767.7,183.7 C1772.5,183.7 1787.4,181.1 1796.6,183.7 C1805.8,186.3 1818.5,196.9 1822.9,199.5 M1767.7,204.8 C1770.7,204.8 1776.9,201.3 1786.1,204.8 C1795.3,208.3 1816.8,222.3 1822.9,225.8 M1770.3,183.7 C1769.9,194.2 1770.3,231.1 1767.7,246.9 C1765.0,262.6 1758.9,269.7 1754.5,278.4 C1750.1,287.2 1744.9,294.2 1741.4,299.5 C1737.9,304.7 1734.8,308.2 1733.5,310.0 M1775.6,267.9 L1822.9,246.9 M1794.0,165.3 C1796.6,162.2 1804.9,148.6 1809.8,146.9 C1814.6,145.1 1820.7,153.5 1822.9,154.8 M1794.0,165.3 L1822.9,189.0 M1791.4,260.0 C1794.0,264.8 1802.3,278.9 1807.1,288.9 C1812.0,299.0 1818.1,315.3 1820.3,320.5 M1733.5,336.3 L1822.9,304.7 M1678.2,291.6 L1680.9,345.0 M1704.5,294.2 L1701.9,345.0 M1638.8,320.5 L1654.5,338.9 M1720.3,89.0 L1725.6,104.8 M648.1,397.6 C648.5,393.7 646.7,379.6 650.7,373.9 C654.6,368.2 658.1,368.2 671.7,363.4 C685.3,358.6 722.2,348.1 732.3,345.0 M808.6,347.6 C808.1,352.9 807.7,370.9 805.9,379.2 C804.2,387.5 798.9,386.7 798.1,397.6 C797.2,408.6 798.5,431.8 800.7,445.0 C802.9,458.2 808.1,466.9 811.2,476.6 C814.3,486.2 817.8,498.5 819.1,502.9 M627.0,410.8 C629.6,409.0 636.6,402.5 642.8,400.3 C648.9,398.1 650.7,397.6 663.8,397.6 C677.0,397.6 707.3,398.1 721.7,400.3 C736.2,402.5 745.9,409.0 750.7,410.8 M721.7,381.8 L723.1,400.3 M666.5,395.0 C664.7,397.6 658.1,403.3 655.9,410.8 C653.8,418.2 641.5,432.3 653.3,439.7 C665.2,447.2 709.5,454.2 727.0,455.5 C744.5,456.8 753.3,448.9 758.6,447.6 M653.3,439.7 C650.7,445.9 640.6,465.2 637.5,476.6 C634.5,488.0 633.1,497.6 634.9,508.2 C636.6,518.7 640.6,531.0 648.1,539.7 C655.5,548.5 667.4,556.4 679.6,560.8 C691.9,565.2 709.9,563.9 721.7,566.1 C733.6,568.2 739.3,569.6 750.7,573.9 C762.1,578.3 780.1,587.9 790.2,592.4 C800.2,596.9 807.7,599.6 811.2,601.1 M700.7,447.6 C699.4,451.1 694.5,452.9 692.8,468.7 C691.0,484.5 691.9,526.6 690.2,542.4 C688.4,558.2 683.6,559.9 682.3,563.4 M727.0,455.5 C725.7,459.0 720.4,462.5 719.1,476.6 C717.8,490.6 718.7,524.8 719.1,539.7 C719.5,554.6 721.3,561.7 721.7,566.1 M692.8,466.1 C689.3,466.5 676.6,463.4 671.7,468.7 C666.9,473.9 665.2,488.4 663.8,497.6 C662.5,506.8 666.5,516.9 663.8,523.9 C661.2,531.0 650.7,537.1 648.1,539.7 M627.0,531.8 L640.2,529.2 M721.7,539.7 C724.4,539.7 732.3,538.4 737.5,539.7 C742.8,541.1 750.7,546.3 753.3,547.6 M769.1,492.4 C767.4,492.4 760.8,489.7 758.6,492.4 C756.4,495.0 754.2,504.6 755.9,508.2 C757.7,511.7 766.0,515.2 769.1,513.4 C772.2,511.7 773.5,500.3 774.4,497.6 M795.4,505.5 C795.0,510.4 790.2,527.0 792.8,534.5 C795.4,541.9 805.5,546.8 811.2,550.3 C816.9,553.8 823.1,550.3 827.0,555.5 C830.9,560.8 828.8,576.6 834.9,581.8 C841.0,587.1 854.6,583.9 863.8,587.1 C873.1,590.3 885.8,598.7 890.2,601.1 M905.9,550.3 C905.9,553.3 908.6,562.5 905.9,568.7 C903.3,574.8 894.1,581.7 890.2,587.1 C886.2,592.5 883.6,598.7 882.3,601.1 M803.3,392.4 C806.4,393.7 813.4,400.3 821.7,400.3 C830.1,400.3 848.1,393.7 853.3,392.4 M821.7,400.3 C821.7,402.5 820.0,406.4 821.7,413.4 C823.5,420.4 827.4,438.9 832.3,442.4 C837.1,445.9 848.1,441.9 850.7,434.5 C853.3,427.0 848.5,403.8 848.1,397.6 M863.8,405.5 C866.5,406.4 875.2,408.6 879.6,410.8 C884.0,413.0 882.3,416.9 890.2,418.7 C898.1,420.4 920.9,420.9 927.0,421.3 M890.2,418.7 L879.6,431.8 M627.0,392.4 L634.9,405.5 M990.8,355.5 L1011.8,345.0 M1043.4,345.0 C1045.2,349.4 1052.6,363.4 1053.9,371.3 C1055.3,379.2 1055.3,386.7 1051.3,392.4 C1047.4,398.1 1038.2,401.6 1030.3,405.5 C1022.4,409.5 1008.3,414.3 1003.9,416.1 M977.6,397.6 L1035.5,350.3 M925.0,416.1 C927.6,417.4 936.4,419.1 940.8,423.9 C945.2,428.8 944.3,442.8 951.3,445.0 C958.3,447.2 977.6,438.4 982.9,437.1 M1017.1,460.8 C1019.3,463.4 1022.8,462.5 1030.3,476.6 C1037.7,490.6 1054.8,524.3 1061.8,545.0 C1068.9,565.7 1070.6,591.7 1072.4,601.1 M1022.4,576.6 C1029.4,575.3 1054.4,564.6 1064.5,568.7 C1074.6,572.8 1079.8,595.7 1082.9,601.1 M925.0,598.9 L990.8,587.1 M1507.2,360.8 L1523.0,352.9 M1507.2,360.8 C1508.1,364.7 1509.8,380.1 1512.5,384.5 C1515.1,388.9 1521.2,386.7 1523.0,387.1 M1523.0,466.0 C1524.3,460.3 1526.1,439.3 1530.9,431.8 C1535.7,424.4 1544.9,424.8 1551.9,421.3 C1559.0,417.8 1565.5,416.5 1573.0,410.8 C1580.4,405.1 1587.0,398.1 1596.7,387.1 C1606.3,376.1 1625.2,352.0 1630.9,345.0 M1551.9,421.3 L1551.9,426.6 M1609.8,400.2 C1616.0,395.9 1635.7,381.0 1646.7,373.9 C1657.6,366.9 1670.5,363.0 1675.6,358.2 C1680.6,353.3 1676.7,347.2 1676.9,345.0 M1573.0,410.8 L1594.0,452.9 M1588.8,395.0 C1592.3,402.0 1608.9,427.9 1609.8,437.1 C1610.7,446.3 1596.7,448.0 1594.0,450.2 M1630.9,345.0 C1634.4,348.5 1644.9,351.1 1651.9,366.0 C1658.9,381.0 1665.9,410.8 1673.0,434.5 C1680.0,458.1 1690.5,495.8 1694.0,508.1 M1609.8,429.2 L1696.6,400.2 M1654.5,387.1 C1662.4,384.9 1693.6,381.0 1701.9,373.9 C1710.2,366.9 1704.1,349.8 1704.5,345.0 M1688.7,376.6 L1704.5,423.9 M1628.2,423.9 C1630.0,427.4 1628.2,444.5 1638.8,445.0 C1649.3,445.4 1676.5,430.5 1691.4,426.6 C1706.3,422.6 1721.2,423.0 1728.2,421.3 C1735.2,419.5 1732.6,416.9 1733.5,416.0 M1694.0,426.6 L1696.6,437.1 M1722.9,395.0 L1757.1,489.7 M1749.3,413.4 L1822.9,410.8 M1746.6,384.5 L1759.8,421.3 M1728.2,360.8 L1786.1,347.6 M1725.6,345.0 L1728.2,360.8 M1638.8,473.9 L1691.4,458.1 M1646.7,471.3 C1647.5,474.4 1643.6,488.8 1651.9,489.7 C1660.2,490.6 1689.2,478.7 1696.6,476.5 M1523.0,468.7 C1525.2,470.0 1532.6,472.6 1536.2,476.5 C1539.7,480.5 1539.2,478.3 1544.0,492.3 C1548.9,506.4 1559.8,547.6 1565.1,560.7 C1570.4,573.9 1573.9,569.5 1575.6,571.3 M1533.5,473.9 C1537.9,470.8 1553.7,458.1 1559.8,455.5 C1566.0,452.9 1568.6,457.7 1570.4,458.1 M1523.0,495.0 L1557.2,476.5 M1612.5,484.4 C1613.8,487.5 1619.5,496.7 1620.3,502.9 C1621.2,509.0 1616.4,514.3 1617.7,521.3 C1619.0,528.3 1626.5,538.4 1628.2,544.9 C1630.0,551.5 1631.7,551.4 1628.2,560.7 C1624.7,570.1 1610.7,594.3 1607.2,601.0 M1765.0,439.7 C1767.2,439.3 1775.1,433.1 1778.2,437.1 C1781.3,441.0 1782.1,457.3 1783.5,463.4 C1784.8,469.5 1785.7,472.2 1786.1,473.9 M1759.8,510.7 L1822.9,481.8 M1791.4,518.6 L1822.9,505.5 M1770.3,492.3 L1822.9,547.6 M1722.9,497.6 C1723.8,503.7 1732.6,524.8 1728.2,534.4 C1723.8,544.1 1705.4,544.4 1696.6,555.5 C1687.9,566.6 1679.1,593.4 1675.6,601.0 M1686.1,571.3 C1702.8,573.0 1765.0,578.7 1786.1,581.8 C1807.1,584.8 1808.0,588.4 1812.4,589.7 M1754.5,581.8 L1757.1,601.0 M1778.2,581.8 L1778.2,601.0 M1817.7,345.0 L1822.9,410.8 M671.7,601.0 C675.7,601.4 689.7,601.4 695.4,603.6 C701.1,605.8 703.8,612.0 705.9,614.2 C708.1,616.4 708.1,616.4 708.6,616.8 M627.0,616.8 C632.7,619.4 655.1,628.6 661.2,632.6 C667.4,636.5 663.4,639.2 663.8,640.5 M684.9,640.5 C686.2,637.8 688.8,628.6 692.8,624.7 C696.7,620.7 702.0,617.7 708.6,616.8 C715.2,615.9 728.3,619.0 732.3,619.4 M732.3,619.4 C734.9,621.2 742.4,624.7 748.1,629.9 C753.8,635.2 761.6,643.5 766.5,651.0 C771.3,658.5 773.1,667.7 777.0,674.7 C780.9,681.7 788.0,690.0 790.2,693.1 M698.1,624.7 C701.6,627.3 712.1,635.6 719.1,640.5 C726.1,645.3 735.3,649.2 740.2,653.6 C745.0,658.0 745.0,662.0 748.1,666.8 C751.1,671.6 756.8,679.9 758.6,682.6 M627.0,645.7 C632.7,648.8 647.2,656.3 661.2,664.2 C675.2,672.1 698.5,687.2 711.2,693.1 C723.9,699.0 729.2,701.9 737.5,699.7 C745.9,697.5 753.3,684.6 761.2,679.9 C769.1,675.3 778.3,672.9 784.9,672.1 C791.5,671.2 794.1,671.2 800.7,674.7 C807.3,678.2 817.4,686.5 824.4,693.1 C831.4,699.7 838.0,704.9 842.8,714.2 C847.6,723.4 851.6,742.7 853.3,748.4 M800.7,674.7 C806.8,679.9 830.1,698.4 837.5,706.3 C845.0,714.2 842.4,714.2 845.4,722.1 C848.5,729.9 852.9,743.1 855.9,753.6 C859.0,764.2 862.5,779.9 863.8,785.2 M637.5,653.6 C636.2,657.1 630.9,665.9 629.6,674.7 C628.3,683.5 627.4,692.2 629.6,706.3 C631.8,720.3 636.6,746.6 642.8,758.9 C648.9,771.2 662.5,776.4 666.5,779.9 M653.3,666.8 C652.4,671.2 647.2,682.1 648.1,693.1 C648.9,704.1 653.3,723.4 658.6,732.6 C663.8,741.8 676.1,745.7 679.6,748.4 M674.4,677.3 C674.4,683.5 673.5,704.1 674.4,714.2 C675.2,724.2 677.4,732.1 679.6,737.8 C681.8,743.5 686.2,746.6 687.5,748.4 M713.8,693.1 C709.9,700.6 698.1,723.4 690.2,737.8 C682.3,752.3 674.8,765.5 666.5,779.9 C658.1,794.4 645.4,811.8 640.2,824.7 C634.9,837.5 635.8,851.7 634.9,857.1 M732.3,701.0 L734.9,714.2 M627.0,751.0 C628.3,754.5 634.9,766.4 634.9,772.1 C634.9,777.8 628.3,783.0 627.0,785.2 M627.0,801.0 C632.7,803.2 653.8,810.6 661.2,814.2 C668.7,817.7 670.0,820.7 671.7,822.1 M666.5,822.1 L661.2,857.1 M692.8,840.5 L716.5,853.6 M811.2,601.0 C813.0,605.4 817.4,620.7 821.7,627.3 C826.1,633.9 831.8,638.7 837.5,640.5 C843.2,642.2 847.2,640.5 855.9,637.8 C864.7,635.2 878.3,628.6 890.2,624.7 C902.0,620.7 920.9,615.9 927.0,614.2 M821.7,627.3 C822.6,626.4 822.6,623.4 827.0,622.1 C831.4,620.7 842.8,617.2 848.1,619.4 C853.3,621.6 856.8,632.6 858.6,635.2 M855.9,666.8 C858.1,667.2 865.6,672.1 869.1,669.4 C872.6,666.8 871.3,654.9 877.0,651.0 C882.7,647.1 895.0,647.1 903.3,645.7 C911.6,644.4 923.1,643.5 927.0,643.1 M869.1,669.4 C870.9,673.4 875.7,684.8 879.6,693.1 C883.6,701.4 889.3,710.2 892.8,719.4 C896.3,728.6 898.1,737.4 900.7,748.4 C903.3,759.3 904.2,779.5 908.6,785.2 C913.0,790.9 923.9,783.0 927.0,782.6 M890.2,687.8 L927.0,682.6 M898.1,737.8 L927.0,737.8 M627.0,653.6 L642.8,661.5 M737.5,674.7 L750.7,672.1 M925.0,608.9 C929.4,608.5 938.2,607.6 951.3,606.3 C964.5,604.9 995.2,601.9 1003.9,601.0 M940.8,648.4 C949.1,644.9 973.7,633.0 990.8,627.3 C1007.9,621.6 1031.1,618.5 1043.4,614.2 C1055.7,609.8 1061.0,603.2 1064.5,601.0 M951.3,635.2 L953.9,643.1 M975.0,624.7 L977.6,632.6 M1001.3,616.8 L1003.9,624.7 M1025.0,608.9 L1027.6,616.8 M925.0,643.1 C927.6,644.0 935.5,644.0 940.8,648.4 C946.1,652.8 948.2,666.4 956.6,669.4 C964.9,672.5 978.5,667.2 990.8,666.8 C1003.1,666.4 1013.2,669.6 1030.3,666.8 C1047.4,663.9 1082.9,652.5 1093.4,649.7 M1003.9,656.3 L1014.5,685.2 M1038.2,645.7 L1043.4,658.9 M1069.7,635.2 L1077.6,653.6 M1080.3,601.0 C1082.9,608.9 1090.4,632.6 1096.1,648.4 C1101.8,664.2 1109.6,679.1 1114.5,695.7 C1119.3,712.4 1120.2,732.6 1125.0,748.4 C1129.8,764.2 1139.0,780.4 1143.4,790.5 C1147.8,800.6 1150.0,805.8 1151.3,808.9 M925.0,682.6 C927.6,683.5 938.2,683.0 940.8,687.8 C943.4,692.7 939.0,704.9 940.8,711.5 C942.5,718.1 946.9,723.4 951.3,727.3 C955.7,731.3 958.3,733.5 967.1,735.2 C975.9,737.0 993.4,736.5 1003.9,737.8 C1014.5,739.2 1024.1,741.4 1030.3,743.1 C1036.4,744.9 1037.7,744.0 1040.8,748.4 C1043.9,752.8 1047.4,765.9 1048.7,769.4 M967.1,735.2 C966.7,737.4 967.5,744.4 964.5,748.4 C961.4,752.3 955.3,757.1 948.7,758.9 C942.1,760.6 928.9,758.9 925.0,758.9 M925.0,737.8 C926.3,740.5 932.9,746.6 932.9,753.6 C932.9,760.6 926.3,775.6 925.0,779.9 M1001.3,774.7 L1040.8,751.0 M1061.8,769.4 C1064.0,777.3 1071.5,806.3 1075.0,816.8 C1078.5,827.3 1077.2,826.9 1082.9,832.6 C1088.6,838.3 1101.3,846.9 1109.2,851.0 C1117.1,855.1 1126.8,856.0 1130.3,857.1 M1082.9,758.9 C1085.1,763.3 1092.1,776.4 1096.1,785.2 C1100.0,794.0 1102.2,804.9 1106.6,811.5 C1111.0,818.1 1113.2,821.2 1122.4,824.7 C1131.6,828.2 1150.9,831.7 1161.8,832.6 C1172.8,833.5 1183.8,830.4 1188.2,829.9 M1103.9,748.4 C1106.6,754.5 1116.7,775.6 1119.7,785.2 C1122.8,794.9 1123.7,801.0 1122.4,806.3 C1121.1,811.5 1113.6,815.0 1111.8,816.8 M1148.7,732.6 C1149.6,737.0 1152.2,750.1 1153.9,758.9 C1155.7,767.7 1158.8,776.9 1159.2,785.2 C1159.6,793.5 1157.0,804.9 1156.6,808.9 M1172.4,722.1 C1174.6,728.2 1182.0,744.4 1185.5,758.9 C1189.0,773.4 1192.1,800.6 1193.4,808.9 M1190.8,711.5 C1194.3,717.7 1207.5,738.7 1211.8,748.4 C1216.2,758.0 1218.4,764.2 1217.1,769.4 C1215.8,774.7 1206.1,778.2 1203.9,779.9 M925.0,816.8 L956.6,819.4 M935.5,832.6 L956.6,819.4 M1003.9,829.9 C1009.2,831.3 1025.9,834.3 1035.5,837.8 C1045.2,841.4 1055.7,847.8 1061.8,851.0 C1068.0,854.2 1070.6,856.0 1072.4,857.1 M1143.4,832.6 L1146.1,857.1 M1161.8,832.6 L1167.1,857.1 M1103.9,627.3 C1105.7,629.1 1109.2,635.6 1114.5,637.8 C1119.7,640.0 1132.0,640.0 1135.5,640.5 M1130.3,653.6 C1131.1,658.0 1132.0,672.1 1135.5,679.9 C1139.0,687.8 1144.7,698.8 1151.3,701.0 C1157.9,703.2 1171.1,694.4 1175.0,693.1 M948.7,845.7 C952.2,844.4 965.8,836.0 969.7,837.8 C973.7,839.7 971.9,853.9 972.4,857.1 M1223.0,793.1 C1227.4,790.9 1237.5,787.4 1249.3,779.9 C1261.2,772.5 1281.8,756.7 1294.1,748.4 C1306.3,740.0 1312.0,739.2 1323.0,729.9 C1334.0,720.7 1353.7,699.2 1359.8,693.1 M1223.0,724.7 C1226.1,722.5 1235.7,715.5 1241.4,711.5 C1247.1,707.6 1251.5,703.2 1257.2,701.0 C1262.9,698.8 1272.6,698.8 1275.6,698.4 M1241.4,711.5 C1244.9,717.7 1256.8,738.7 1262.5,748.4 C1268.2,758.0 1273.4,765.9 1275.6,769.4 M1270.4,698.4 L1294.1,743.1 M1304.6,811.5 C1305.0,808.0 1296.7,798.4 1307.2,790.5 C1317.7,782.6 1354.6,769.4 1367.7,764.2 C1380.9,758.9 1381.8,757.6 1386.2,758.9 C1390.5,760.2 1391.4,766.8 1394.1,772.1 C1396.7,777.3 1398.0,780.8 1401.9,790.5 C1405.9,800.1 1414.2,818.9 1417.7,829.9 C1421.2,841.0 1422.1,852.5 1423.0,857.1 M1338.8,722.1 L1373.0,748.4 M1423.0,748.4 C1421.2,750.1 1417.3,756.3 1412.5,758.9 C1407.6,761.5 1397.1,763.3 1394.1,764.2 M1462.5,769.4 C1458.5,772.1 1444.1,779.1 1438.8,785.2 C1433.5,791.4 1430.9,794.3 1430.9,806.3 C1430.9,818.2 1437.5,848.6 1438.8,857.1 M1470.4,601.0 C1471.2,606.3 1475.2,620.3 1475.6,632.6 C1476.1,644.9 1471.2,665.0 1473.0,674.7 C1474.8,684.3 1479.6,688.3 1486.2,690.5 C1492.7,692.7 1506.3,689.6 1512.5,687.8 C1518.6,686.1 1521.2,681.3 1523.0,679.9 M1491.4,601.0 C1494.9,609.8 1507.6,641.4 1512.5,653.6 C1517.3,665.9 1519.1,671.2 1520.4,674.7 M1446.7,614.2 L1459.8,658.9 M1415.1,674.7 L1423.0,664.2 M1496.7,727.3 L1517.7,695.7 M1394.1,806.3 L1407.2,803.6 M1401.9,832.6 L1412.5,829.9 M1365.1,845.7 L1378.3,843.1 M1501.9,832.6 L1512.5,837.8 M1486.2,848.4 L1496.7,853.6 M1223.0,758.9 L1238.8,748.4 M1315.1,601.0 C1317.3,605.4 1325.2,618.5 1328.3,627.3 C1331.3,636.1 1332.6,649.2 1333.5,653.6 M1541.4,753.6 C1544.9,745.7 1556.3,718.5 1562.5,706.2 C1568.6,694.0 1575.6,688.7 1578.2,679.9 C1580.9,671.2 1574.3,665.5 1578.2,653.6 C1582.2,641.8 1598.0,616.3 1601.9,608.9 M1523.0,616.8 L1533.5,637.8 M1604.6,790.4 C1608.5,783.4 1623.9,766.7 1628.2,748.3 C1632.6,729.9 1629.1,695.7 1630.9,679.9 C1632.6,664.1 1633.1,665.0 1638.8,653.6 C1644.5,642.2 1659.8,620.3 1665.1,611.5 C1670.3,602.8 1669.5,602.8 1670.3,601.0 M1665.1,611.5 C1680.0,612.4 1736.1,615.5 1754.5,616.8 C1772.9,618.1 1772.5,615.0 1775.6,619.4 C1778.6,623.8 1773.4,639.1 1772.9,643.1 M1754.5,601.0 L1755.8,616.8 M1644.0,651.0 C1651.0,654.5 1673.0,668.5 1686.1,672.0 C1699.3,675.5 1716.8,672.0 1722.9,672.0 M1778.2,601.0 C1778.4,610.2 1775.6,645.7 1779.5,656.2 C1783.5,666.8 1797.5,659.3 1801.9,664.1 C1806.3,669.0 1802.3,681.2 1805.8,685.2 C1809.3,689.1 1820.1,687.4 1822.9,687.8 M1812.4,601.0 L1822.9,616.8 M1630.9,751.0 C1637.4,753.2 1656.7,757.5 1670.3,764.1 C1683.9,770.7 1697.5,784.3 1712.4,790.4 C1727.3,796.6 1748.4,798.3 1759.8,800.9 C1771.2,803.6 1773.8,807.1 1780.8,806.2 C1787.8,805.3 1794.9,802.7 1801.9,795.7 C1808.9,788.7 1819.4,769.4 1822.9,764.1 M1738.7,793.1 C1737.4,798.8 1735.7,820.2 1730.8,827.3 C1726.0,834.3 1713.3,833.8 1709.8,835.1 M1770.3,753.6 C1771.2,756.2 1771.2,761.9 1775.6,769.4 C1779.9,776.8 1792.2,792.2 1796.6,798.3 C1801.0,804.5 1801.0,804.9 1801.9,806.2 M1799.2,732.5 C1799.7,736.9 1799.2,752.3 1801.9,758.9 C1804.5,765.4 1812.8,769.8 1815.0,772.0 M1801.9,837.8 L1822.9,848.3 M1559.8,800.9 L1538.8,857.0 M1586.1,822.0 L1575.6,857.0 M1599.3,827.3 L1604.6,857.0 M1523.0,829.9 L1538.8,832.5 M1609.8,832.5 L1633.5,857.0 M1189.3,860.0 C1189.3,854.3 1186.6,835.2 1189.3,825.7 C1192.0,816.2 1195.8,809.8 1205.7,802.7 C1215.6,795.6 1229.3,790.1 1248.5,783.0 C1267.7,775.9 1308.8,763.8 1320.8,760.0 M1212.3,860.0 C1212.3,854.8 1209.6,836.4 1212.3,829.0 C1215.0,821.6 1218.3,819.7 1228.7,815.9 C1239.1,812.1 1265.4,809.0 1274.8,806.0 C1284.2,803.0 1283.3,799.3 1285.0,798.0 M1248.5,783.0 C1250.7,785.2 1254.5,793.2 1261.6,796.2 C1268.7,799.2 1284.1,800.3 1291.2,801.1 C1298.3,801.9 1300.5,799.7 1304.3,801.1 C1308.1,802.5 1310.4,804.1 1314.2,809.3 C1318.0,814.5 1324.0,823.8 1327.3,832.3 C1330.6,840.8 1332.9,855.4 1334.0,860.0 M1274.8,806.0 C1276.8,802.0 1282.1,788.8 1287.0,782.0 C1291.9,775.2 1296.8,771.2 1304.0,765.0 C1311.2,758.8 1316.0,754.2 1330.0,745.0 C1344.0,735.8 1378.3,715.8 1388.0,710.0 M1301.0,812.6 C1302.1,809.3 1303.8,797.8 1307.6,792.9 C1311.4,788.0 1312.5,787.9 1324.0,783.0 C1335.5,778.1 1365.2,767.5 1376.7,763.3 C1388.2,759.1 1390.3,758.9 1393.0,758.0 M1320.8,812.6 C1332.8,807.7 1379.9,788.4 1393.1,783.0 C1406.3,777.6 1398.8,780.5 1400.0,780.0 M1228.7,855.3 C1251.2,849.8 1339.4,827.4 1363.5,822.5 C1387.6,817.6 1370.1,819.5 1373.4,825.7 C1376.7,832.0 1381.6,854.3 1383.2,860.0 M1110.4,815.9 C1116.4,819.2 1133.9,833.7 1146.5,835.6 C1159.1,837.5 1179.4,828.8 1186.0,827.4 M1146.5,835.6 L1143.0,860.0 M1163.0,834.0 L1169.6,860.0 M1126.0,802.7 C1130.5,804.1 1144.7,811.0 1153.0,811.0 C1161.3,811.0 1170.0,805.9 1176.0,802.7 C1182.0,799.5 1187.1,793.8 1189.3,792.0 M1395.0,808.6 L1405.0,808.6 M1388.0,850.0 L1402.0,846.0 M1185.8,385.5 C1188.6,382.3 1196.2,372.7 1202.6,366.3 C1209.0,359.9 1209.5,354.4 1224.1,347.2 C1238.7,340.0 1279.0,327.2 1290.0,323.2 M1224.1,347.2 C1222.5,341.6 1214.6,321.6 1214.6,313.6 C1214.6,305.6 1216.9,306.9 1224.1,299.3 C1231.3,291.7 1246.7,277.7 1257.7,268.1 C1268.7,258.5 1284.6,246.2 1290.0,241.8 M1135.5,342.4 C1139.9,337.6 1153.5,324.0 1161.9,313.6 C1170.3,303.2 1179.0,289.7 1185.8,280.1 C1192.6,270.5 1197.8,262.6 1202.6,256.2 C1207.4,249.8 1212.6,244.2 1214.6,241.8 M1178.6,344.8 C1180.6,342.8 1186.2,332.8 1190.6,332.8 C1195.0,332.8 1204.6,340.4 1205.0,344.8 C1205.4,349.2 1197.4,358.8 1193.0,359.2 C1188.6,359.6 1181.0,349.2 1178.6,347.2 M1226.5,373.5 C1234.9,370.3 1267.6,354.4 1276.8,354.4 C1286.0,354.4 1288.8,367.1 1281.6,373.5 C1274.4,379.9 1242.9,392.7 1233.7,392.7 C1224.5,392.7 1227.7,376.7 1226.5,373.5 M1245.7,404.7 C1249.3,403.9 1262.8,397.5 1267.2,399.9 C1271.6,402.3 1274.4,414.2 1272.0,419.0 C1269.6,423.8 1257.3,431.0 1252.9,428.6 C1248.5,426.2 1246.9,408.7 1245.7,404.7 M1169.0,428.6 C1172.6,427.0 1183.8,421.0 1190.6,419.0 C1197.4,417.0 1206.6,417.0 1209.8,416.6 M1169.0,428.6 C1169.8,431.8 1170.2,443.8 1173.8,447.8 C1177.4,451.8 1185.8,449.4 1190.6,452.6 C1195.4,455.8 1200.6,464.5 1202.6,466.9 M1233.7,304.1 L1240.9,313.6 M1262.5,256.2 C1263.3,260.2 1267.2,271.3 1267.2,280.1 C1267.2,288.9 1263.3,304.1 1262.5,308.9 M1090.0,380.7 L1140.3,356.8 M1133.1,459.8 L1243.3,447.8 M1285.4,237.0 C1285.8,245.0 1285.8,266.9 1287.8,284.9 C1289.8,302.9 1293.4,329.6 1297.4,344.8 C1301.4,360.0 1306.5,368.7 1311.7,375.9 C1316.9,383.1 1325.7,385.9 1328.5,387.9 M1283.0,325.6 C1287.8,324.0 1300.5,317.8 1311.7,316.0 C1322.9,314.2 1338.8,316.8 1350.0,314.8 C1361.2,312.8 1369.2,309.0 1378.8,304.0 C1388.4,299.0 1400.7,284.5 1407.5,284.9 C1414.3,285.3 1415.1,300.0 1419.5,306.4 C1423.9,312.8 1431.5,320.4 1433.9,323.2 M1311.7,237.0 L1311.7,316.0 M1362.0,237.0 C1360.8,239.4 1358.4,245.0 1354.8,251.4 C1351.2,257.8 1344.1,264.5 1340.5,275.3 C1336.9,286.1 1334.5,300.0 1333.3,316.0 C1332.1,332.0 1334.1,359.1 1333.3,371.1 C1332.5,383.1 1332.1,381.5 1328.5,387.9 C1324.9,394.3 1317.3,403.4 1311.7,409.4 C1306.1,415.4 1297.8,421.4 1295.0,423.8 M1345.3,272.9 L1359.6,287.3 M1354.8,251.4 L1378.8,272.9 M1333.3,373.5 C1340.1,373.9 1363.6,377.9 1374.0,375.9 C1384.4,373.9 1388.3,367.5 1395.5,361.5 C1402.7,355.5 1408.3,348.4 1417.1,340.0 C1425.9,331.6 1440.2,319.2 1448.2,311.2 C1456.2,303.2 1462.2,295.3 1465.0,292.1 M1374.0,375.9 C1376.4,382.3 1384.4,401.8 1388.4,414.2 C1392.4,426.6 1393.1,442.9 1397.9,450.1 C1402.7,457.3 1410.3,454.0 1417.1,457.3 C1423.9,460.6 1435.1,467.9 1438.7,470.0 M1402.7,349.5 C1406.7,353.1 1416.3,362.3 1426.7,371.1 C1437.1,379.9 1458.6,397.0 1465.0,402.2 M1417.1,392.7 L1436.3,378.3 M1402.7,385.5 C1404.3,387.9 1409.1,394.2 1412.3,399.8 C1415.5,405.4 1417.9,413.4 1421.9,419.0 C1425.9,424.6 1430.7,431.0 1436.3,433.4 C1441.9,435.8 1452.2,433.4 1455.4,433.4 M1445.8,316.0 C1449.4,320.8 1463.0,335.6 1467.4,344.8 C1471.8,354.0 1472.6,361.9 1472.2,371.1 C1471.8,380.3 1467.8,391.8 1465.0,399.8 C1462.2,407.8 1457.0,407.3 1455.4,419.0 C1453.8,430.7 1455.4,461.5 1455.4,470.0 M1441.0,351.9 L1465.0,344.8 M1402.7,316.0 L1419.5,306.4 M1455.4,454.9 L1512.9,459.7 M1493.7,428.6 C1495.7,428.2 1502.9,425.0 1505.7,426.2 C1508.5,427.4 1509.7,434.2 1510.5,435.8 M1378.8,316.0 L1381.2,337.6 M1354.8,316.0 L1357.2,351.9 M1104.9,491.5 C1107.7,490.3 1111.6,487.1 1121.5,484.3 C1131.4,481.5 1154.2,477.2 1164.5,474.8 C1174.8,472.4 1180.4,470.8 1183.6,470.0 M1162.1,477.2 C1161.7,480.0 1162.5,488.2 1159.7,493.8 C1156.9,499.4 1148.2,505.7 1145.4,510.5 C1142.6,515.3 1143.4,520.5 1143.0,522.5 M1193.1,470.0 C1195.1,474.0 1201.4,490.2 1205.0,493.8 C1208.6,497.4 1214.2,495.5 1214.6,491.5 C1215.0,487.5 1208.6,473.6 1207.4,470.0 M1221.7,484.3 C1223.3,483.1 1227.3,476.4 1231.3,477.2 C1235.3,478.0 1240.8,484.7 1245.6,489.1 C1250.4,493.5 1257.5,501.0 1259.9,503.4 M1216.9,508.2 C1219.3,507.8 1228.9,503.4 1231.3,505.8 C1233.7,508.2 1231.3,519.7 1231.3,522.5 M1200.3,505.8 L1205.0,536.8 M1059.5,534.4 C1062.7,532.8 1072.2,527.7 1078.6,524.9 C1085.0,522.1 1093.3,520.1 1097.7,517.7 C1102.1,515.3 1103.7,511.7 1104.9,510.5 M1064.3,534.4 C1065.9,537.6 1069.8,545.5 1073.8,553.5 C1077.8,561.5 1084.2,573.8 1088.2,582.1 C1092.2,590.5 1094.5,594.5 1097.7,603.6 C1100.9,612.7 1104.0,631.4 1107.2,636.9 C1110.4,642.4 1115.2,636.9 1116.8,636.9 M1092.9,570.2 L1126.3,565.4 M1095.3,591.6 C1102.1,590.4 1122.8,584.1 1135.9,584.5 C1149.0,584.9 1165.3,593.6 1174.0,594.0 C1182.7,594.4 1185.9,588.1 1188.3,586.9 M1188.3,586.9 C1185.9,590.5 1180.0,602.3 1174.0,608.3 C1168.0,614.2 1162.9,617.8 1152.6,622.6 C1142.3,627.4 1118.8,634.5 1112.0,636.9 M1128.7,601.2 L1140.6,627.4 M1145.4,608.3 L1150.2,622.6 M1209.8,563.0 L1264.6,546.3 M1178.8,636.9 C1183.6,636.5 1201.1,629.8 1207.4,634.6 C1213.8,639.4 1220.1,660.1 1216.9,665.6 C1213.7,671.1 1194.7,672.7 1188.3,667.9 C1181.9,663.1 1180.4,642.1 1178.8,636.9 M1188.3,665.6 L1214.6,656.0 M1140.6,646.5 L1159.7,641.7 M1264.6,594.0 L1283.0,586.9 M1368.9,493.8 C1371.3,491.4 1373.7,483.5 1383.2,479.5 C1392.7,475.5 1418.9,471.6 1426.1,470.0 M1371.2,517.7 C1374.4,516.1 1382.7,512.2 1390.3,508.2 C1397.9,504.2 1409.8,500.2 1416.6,493.8 C1423.4,487.4 1428.5,474.0 1430.9,470.0 M1390.3,508.2 L1399.9,522.5 M1409.4,477.2 L1416.6,484.3 M1469.0,470.0 C1468.6,473.2 1469.8,483.9 1466.6,489.1 C1463.4,494.3 1455.1,499.4 1449.9,501.0 C1444.7,502.6 1438.0,499.0 1435.6,498.6 M1364.1,532.0 C1367.3,535.2 1378.8,544.7 1383.2,551.1 C1387.6,557.5 1388.7,563.9 1390.3,570.2 C1391.9,576.6 1390.7,581.2 1392.7,589.2 C1394.7,597.2 1399.8,611.5 1402.2,617.9 C1404.6,624.3 1406.2,625.8 1407.0,627.4 M1392.7,560.6 C1397.5,558.2 1414.5,551.9 1421.3,546.3 C1428.1,540.7 1430.5,527.6 1433.3,527.2 C1436.1,526.8 1440.0,540.3 1438.0,543.9 C1436.0,547.5 1424.1,547.9 1421.3,548.7 M1337.9,527.2 C1338.3,531.2 1338.2,543.9 1340.2,551.1 C1342.2,558.3 1342.6,569.0 1349.8,570.2 C1357.0,571.4 1377.6,560.2 1383.2,558.2 M1387.9,577.3 C1396.7,574.9 1431.2,563.8 1440.4,563.0 C1449.6,562.2 1450.3,568.2 1442.8,572.6 C1435.2,577.0 1403.0,586.4 1395.1,589.2 M1449.9,539.2 C1453.9,538.0 1467.4,526.8 1473.8,532.0 C1480.2,537.2 1489.3,562.2 1488.1,570.2 C1486.9,578.2 1473.0,584.9 1466.6,579.7 C1460.2,574.5 1452.7,546.0 1449.9,539.2 M1445.2,615.5 L1449.9,625.0 M1342.6,470.0 C1343.8,474.8 1350.6,491.9 1349.8,498.6 C1349.0,505.4 1339.9,508.5 1337.9,510.5 M1356.9,470.0 C1358.9,474.0 1366.5,487.1 1368.9,493.8 C1371.3,500.6 1372.0,504.1 1371.2,510.5 C1370.4,516.9 1365.3,528.4 1364.1,532.0" fill="none" stroke="#ffffff" stroke-width="3.2" stroke-linecap="round" stroke-linejoin="round"/>
<path d="M834.9,89.0 C844.1,96.5 874.8,121.0 890.2,133.7 C905.5,146.5 920.9,160.1 927.0,165.3 M925.0,165.3 C931.6,170.6 949.1,183.3 964.5,196.9 C979.8,210.5 999.6,231.5 1017.1,246.9 C1034.6,262.2 1054.4,276.7 1069.7,289.0 C1085.1,301.3 1097.4,311.2 1109.2,320.6 C1121.1,329.9 1135.5,341.0 1140.8,345.1 M755.9,339.7 C758.1,341.5 760.3,348.9 769.1,350.3 C777.9,351.6 798.9,347.6 808.6,347.6 C818.2,347.6 821.3,347.6 827.0,350.3 C832.7,352.9 838.0,357.3 842.8,363.4 C847.6,369.6 853.8,383.2 855.9,387.1 M769.1,350.3 C766.9,352.0 759.0,355.1 755.9,360.8 C752.9,366.5 751.6,373.9 750.7,384.5 C749.8,395.0 749.8,413.0 750.7,423.9 C751.6,434.9 752.9,441.5 755.9,450.3 C759.0,459.0 763.4,469.1 769.1,476.6 C774.8,484.0 781.8,490.6 790.2,495.0 C798.5,499.4 810.3,499.4 819.1,502.9 C827.9,506.4 835.3,510.4 842.8,516.1 C850.2,521.8 855.9,531.8 863.8,537.1 C871.7,542.4 879.6,545.9 890.2,547.6 C900.7,549.4 920.9,547.6 927.0,547.6 M1223.0,698.4 C1231.8,695.3 1255.5,687.4 1275.6,679.9 C1295.8,672.5 1326.5,661.1 1344.1,653.6 C1361.6,646.2 1374.8,638.3 1380.9,635.2 M1349.3,687.8 C1352.8,690.0 1358.1,692.2 1370.4,701.0 C1382.6,709.8 1403.7,726.4 1423.0,740.5 C1442.3,754.5 1468.6,773.4 1486.2,785.2 C1503.7,797.1 1521.2,807.1 1528.3,811.5 M1754.5,857.0 C1758.0,851.6 1767.7,833.1 1775.6,824.6 C1783.5,816.2 1794.0,809.7 1801.9,806.2 C1809.8,802.7 1819.4,804.0 1822.9,803.6 M1517.7,811.5 C1527.4,816.7 1562.5,835.5 1575.6,843.0 C1588.8,850.6 1593.2,854.7 1596.7,857.0 M1283.0,541.5 C1286.2,547.9 1295.3,566.2 1302.1,579.7 C1308.8,593.2 1318.7,613.1 1323.5,622.6 C1328.3,632.1 1329.5,634.5 1330.7,636.9 M1090.0,304.0 C1098.0,310.4 1121.9,328.8 1137.9,342.4 C1153.9,356.0 1171.4,371.9 1185.8,385.5 C1200.2,399.1 1213.7,412.6 1224.1,423.8 C1234.5,435.0 1241.7,444.1 1248.0,452.6 C1254.3,461.1 1256.2,460.2 1262.0,475.0 C1267.8,489.8 1279.5,530.4 1283.0,541.5" fill="none" stroke="#ffffff" stroke-width="5" stroke-linecap="round" stroke-linejoin="round"/>
<path d="M627.0,285.1 C638.0,283.1 673.1,277.8 692.8,273.2 C712.5,268.6 727.4,263.6 745.4,257.4 C763.4,251.3 789.7,240.5 800.7,236.4 C811.6,232.2 809.5,233.1 811.2,232.4 M827.0,229.8 L927.0,194.3 M925.0,194.3 C938.2,189.9 975.4,177.8 1003.9,167.9 C1032.5,158.1 1065.4,146.0 1096.1,135.1 C1126.8,124.1 1166.7,109.8 1188.2,102.2 C1209.6,94.5 1218.9,91.2 1225.0,89.0 M1517.7,582.3 C1536.2,576.1 1587.9,559.9 1628.2,544.9 C1668.6,530.0 1726.5,506.3 1759.8,492.3 C1793.1,478.4 1816.8,466.5 1828.2,461.3 M1328.3,669.4 C1337.0,665.5 1356.3,657.6 1380.9,645.7 C1405.5,633.9 1451.9,609.3 1475.6,598.4 C1499.3,587.4 1515.1,583.0 1523.0,579.9 M1354.5,651.3 C1364.8,646.9 1397.5,632.6 1416.6,625.0 C1435.7,617.4 1452.4,612.2 1469.0,605.9 C1485.6,599.5 1508.2,590.1 1516.0,586.9" fill="none" stroke="#ffffff" stroke-width="8" stroke-linecap="round" stroke-linejoin="round"/>
<path d="M961.8,861.5 C968.9,855.8 991.7,839.2 1003.9,827.3 C1016.2,815.5 1025.9,800.1 1035.5,790.5 C1045.2,780.8 1049.6,777.3 1061.8,769.4 C1074.1,761.5 1092.5,751.9 1109.2,743.1 C1125.9,734.3 1141.7,725.0 1161.8,716.8 C1182.0,708.5 1218.9,697.5 1230.3,693.6" fill="none" stroke="#ffffff" stroke-width="9" stroke-linecap="round" stroke-linejoin="round"/>
<path d="M1783.5,83.7 C1786.5,87.2 1794.4,96.9 1801.9,104.8 C1809.3,112.7 1823.8,126.7 1828.2,131.1" fill="none" stroke="#ffffff" stroke-width="11" stroke-linecap="round" stroke-linejoin="round"/>
<path d="M1807.1,125.8 C1803.6,130.7 1794.0,147.8 1786.1,154.8 C1778.2,161.8 1768.5,166.2 1759.8,167.9 C1751.0,169.7 1739.2,163.1 1733.5,165.3 C1727.8,167.5 1726.0,174.1 1725.6,181.1 C1725.1,188.1 1729.1,196.4 1730.8,207.4 C1732.6,218.4 1737.4,238.5 1736.1,246.9 C1734.8,255.2 1731.3,256.5 1722.9,257.4 C1714.6,258.3 1694.9,254.3 1686.1,252.1 C1677.3,249.9 1673.4,244.2 1670.3,244.2 C1667.3,244.2 1671.6,247.3 1667.7,252.1 C1663.8,256.9 1652.4,267.0 1646.7,273.2 C1641.0,279.3 1635.7,284.6 1633.5,288.9 C1631.3,293.3 1637.0,295.5 1633.5,299.5 C1630.0,303.4 1620.3,305.0 1612.5,312.6 C1604.6,320.2 1590.5,339.6 1586.1,345.0" fill="none" stroke="#80c58f" stroke-width="1.3" stroke-dasharray="4 3"/>
<path d="M1523.0,397.6 C1527.4,396.3 1540.5,392.4 1549.3,389.7 C1558.1,387.1 1566.8,389.3 1575.6,381.8 C1584.4,374.4 1597.5,351.1 1601.9,345.0" fill="none" stroke="#80c58f" stroke-width="1.3" stroke-dasharray="4 3"/>
<path d="M788.0,60.0 C788.8,64.8 789.5,72.2 793.0,89.0 C796.5,105.8 804.2,137.5 809.0,161.0 C813.8,184.5 818.3,211.8 822.0,230.0 C825.7,248.2 827.2,258.0 831.0,270.0 C834.8,282.0 837.5,290.7 845.0,302.0 C852.5,313.3 861.3,325.3 876.0,338.0 C890.7,350.7 915.8,366.0 933.0,378.0 C950.2,390.0 963.3,397.8 979.0,410.0 C994.7,422.2 1005.3,434.2 1027.0,451.0 C1048.7,467.8 1080.2,491.5 1109.0,511.0 C1137.8,530.5 1167.8,547.2 1200.0,568.0 C1232.2,588.8 1271.2,616.8 1302.0,636.0 C1332.8,655.2 1348.2,662.3 1385.0,683.0 C1421.8,703.7 1473.7,733.2 1523.0,760.0 C1572.3,786.8 1644.8,824.7 1681.0,844.0 C1717.2,863.3 1730.2,870.7 1740.0,876.0" fill="none" stroke="#ffffff" stroke-width="32"/>
<path d="M788.0,60.0 C788.8,64.8 789.5,72.2 793.0,89.0 C796.5,105.8 804.2,137.5 809.0,161.0 C813.8,184.5 818.3,211.8 822.0,230.0 C825.7,248.2 827.2,258.0 831.0,270.0 C834.8,282.0 837.5,290.7 845.0,302.0 C852.5,313.3 861.3,325.3 876.0,338.0 C890.7,350.7 915.8,366.0 933.0,378.0 C950.2,390.0 963.3,397.8 979.0,410.0 C994.7,422.2 1005.3,434.2 1027.0,451.0 C1048.7,467.8 1080.2,491.5 1109.0,511.0 C1137.8,530.5 1167.8,547.2 1200.0,568.0 C1232.2,588.8 1271.2,616.8 1302.0,636.0 C1332.8,655.2 1348.2,662.3 1385.0,683.0 C1421.8,703.7 1473.7,733.2 1523.0,760.0 C1572.3,786.8 1644.8,824.7 1681.0,844.0 C1717.2,863.3 1730.2,870.7 1740.0,876.0" fill="none" stroke="#f6cf62" stroke-width="17.5"/>
<path d="M788.0,60.0 C788.8,64.8 789.5,72.2 793.0,89.0 C796.5,105.8 804.2,137.5 809.0,161.0 C813.8,184.5 818.3,211.8 822.0,230.0 C825.7,248.2 827.2,258.0 831.0,270.0 C834.8,282.0 837.5,290.7 845.0,302.0 C852.5,313.3 861.3,325.3 876.0,338.0 C890.7,350.7 915.8,366.0 933.0,378.0 C950.2,390.0 963.3,397.8 979.0,410.0 C994.7,422.2 1005.3,434.2 1027.0,451.0 C1048.7,467.8 1080.2,491.5 1109.0,511.0 C1137.8,530.5 1167.8,547.2 1200.0,568.0 C1232.2,588.8 1271.2,616.8 1302.0,636.0 C1332.8,655.2 1348.2,662.3 1385.0,683.0 C1421.8,703.7 1473.7,733.2 1523.0,760.0 C1572.3,786.8 1644.8,824.7 1681.0,844.0 C1717.2,863.3 1730.2,870.7 1740.0,876.0" fill="none" stroke="#fde79d" stroke-width="15"/>
<path d="M788.0,60.0 C788.8,64.8 789.5,72.2 793.0,89.0 C796.5,105.8 804.2,137.5 809.0,161.0 C813.8,184.5 818.3,211.8 822.0,230.0 C825.7,248.2 827.2,258.0 831.0,270.0 C834.8,282.0 837.5,290.7 845.0,302.0 C852.5,313.3 861.3,325.3 876.0,338.0 C890.7,350.7 915.8,366.0 933.0,378.0 C950.2,390.0 963.3,397.8 979.0,410.0 C994.7,422.2 1005.3,434.2 1027.0,451.0 C1048.7,467.8 1080.2,491.5 1109.0,511.0 C1137.8,530.5 1167.8,547.2 1200.0,568.0 C1232.2,588.8 1271.2,616.8 1302.0,636.0 C1332.8,655.2 1348.2,662.3 1385.0,683.0 C1421.8,703.7 1473.7,733.2 1523.0,760.0 C1572.3,786.8 1644.8,824.7 1681.0,844.0 C1717.2,863.3 1730.2,870.7 1740.0,876.0" fill="none" stroke="#f6d06a" stroke-width="2.6"/>
<path d="M788.0,60.0 C788.8,64.8 789.5,72.2 793.0,89.0 C796.5,105.8 804.2,137.5 809.0,161.0 C813.8,184.5 818.3,211.8 822.0,230.0 C825.7,248.2 827.2,258.0 831.0,270.0 C834.8,282.0 837.5,290.7 845.0,302.0 C852.5,313.3 861.3,325.3 876.0,338.0 C890.7,350.7 915.8,366.0 933.0,378.0 C950.2,390.0 963.3,397.8 979.0,410.0 C994.7,422.2 1005.3,434.2 1027.0,451.0 C1048.7,467.8 1080.2,491.5 1109.0,511.0 C1137.8,530.5 1167.8,547.2 1200.0,568.0 C1232.2,588.8 1271.2,616.8 1302.0,636.0 C1332.8,655.2 1348.2,662.3 1385.0,683.0 C1421.8,703.7 1473.7,733.2 1523.0,760.0 C1572.3,786.8 1644.8,824.7 1681.0,844.0 C1717.2,863.3 1730.2,870.7 1740.0,876.0" fill="none" stroke="#f1ede2" stroke-width="1.2"/>
<rect x="1100.7" y="361.4" width="29.7" height="13.8" fill="#fff" stroke="#333" stroke-width="1"/><text x="1115.5" y="372" font-size="9" fill="#333" text-anchor="middle">186A</text>
<g transform="translate(806.6,161.2)"><path d="M-9.5,-6 C-8,-8 -5,-8.5 -2.5,-7 C-1,-8.5 1,-8.5 2.5,-7 C5,-8.5 8,-8 9.5,-6 C10.5,-4 10,-2 10,0 C10,4 8,7.5 2,8 L0,8.8 L-2,8 C-8,7.5 -10,4 -10,0 C-10,-2 -10.5,-4 -9.5,-6 Z" fill="#fff" stroke="#666" stroke-width="1"/><text x="0" y="3.3" font-size="9" fill="#555" text-anchor="middle" textLength="14" lengthAdjust="spacingAndGlyphs">183</text></g>
<g transform="translate(839.0,301.4)"><path d="M-9.5,-6 C-8,-8 -5,-8.5 -2.5,-7 C-1,-8.5 1,-8.5 2.5,-7 C5,-8.5 8,-8 9.5,-6 C10.5,-4 10,-2 10,0 C10,4 8,7.5 2,8 L0,8.8 L-2,8 C-8,7.5 -10,4 -10,0 C-10,-2 -10.5,-4 -9.5,-6 Z" fill="#fff" stroke="#666" stroke-width="1"/><text x="0" y="3.3" font-size="9" fill="#555" text-anchor="middle" textLength="14" lengthAdjust="spacingAndGlyphs">183</text></g>
<g transform="translate(936.9,380.0)"><path d="M-9.5,-6 C-8,-8 -5,-8.5 -2.5,-7 C-1,-8.5 1,-8.5 2.5,-7 C5,-8.5 8,-8 9.5,-6 C10.5,-4 10,-2 10,0 C10,4 8,7.5 2,8 L0,8.8 L-2,8 C-8,7.5 -10,4 -10,0 C-10,-2 -10.5,-4 -9.5,-6 Z" fill="#fff" stroke="#666" stroke-width="1"/><text x="0" y="3.3" font-size="9" fill="#555" text-anchor="middle" textLength="14" lengthAdjust="spacingAndGlyphs">183</text></g>
<g transform="translate(1304.0,638.8)"><path d="M-9.5,-6 C-8,-8 -5,-8.5 -2.5,-7 C-1,-8.5 1,-8.5 2.5,-7 C5,-8.5 8,-8 9.5,-6 C10.5,-4 10,-2 10,0 C10,4 8,7.5 2,8 L0,8.8 L-2,8 C-8,7.5 -10,4 -10,0 C-10,-2 -10.5,-4 -9.5,-6 Z" fill="#fff" stroke="#666" stroke-width="1"/><text x="0" y="3.3" font-size="9" fill="#555" text-anchor="middle" textLength="14" lengthAdjust="spacingAndGlyphs">183</text></g>
<g transform="translate(1417.3,704.0)"><path d="M-9.5,-6 C-8,-8 -5,-8.5 -2.5,-7 C-1,-8.5 1,-8.5 2.5,-7 C5,-8.5 8,-8 9.5,-6 C10.5,-4 10,-2 10,0 C10,4 8,7.5 2,8 L0,8.8 L-2,8 C-8,7.5 -10,4 -10,0 C-10,-2 -10.5,-4 -9.5,-6 Z" fill="#fff" stroke="#666" stroke-width="1"/><text x="0" y="3.3" font-size="9" fill="#555" text-anchor="middle" textLength="14" lengthAdjust="spacingAndGlyphs">183</text></g>
<g transform="translate(1550.0,779.0)"><path d="M-9.5,-6 C-8,-8 -5,-8.5 -2.5,-7 C-1,-8.5 1,-8.5 2.5,-7 C5,-8.5 8,-8 9.5,-6 C10.5,-4 10,-2 10,0 C10,4 8,7.5 2,8 L0,8.8 L-2,8 C-8,7.5 -10,4 -10,0 C-10,-2 -10.5,-4 -9.5,-6 Z" fill="#fff" stroke="#666" stroke-width="1"/><text x="0" y="3.3" font-size="9" fill="#555" text-anchor="middle" textLength="14" lengthAdjust="spacingAndGlyphs">183</text></g>
<g transform="translate(1610.0,804.6)"><path d="M-9.5,-6 C-8,-8 -5,-8.5 -2.5,-7 C-1,-8.5 1,-8.5 2.5,-7 C5,-8.5 8,-8 9.5,-6 C10.5,-4 10,-2 10,0 C10,4 8,7.5 2,8 L0,8.8 L-2,8 C-8,7.5 -10,4 -10,0 C-10,-2 -10.5,-4 -9.5,-6 Z" fill="#fff" stroke="#666" stroke-width="1"/><text x="0" y="3.3" font-size="9" fill="#555" text-anchor="middle" textLength="14" lengthAdjust="spacingAndGlyphs">183</text></g>
<g transform="translate(1683.0,852.0)"><path d="M-9.5,-6 C-8,-8 -5,-8.5 -2.5,-7 C-1,-8.5 1,-8.5 2.5,-7 C5,-8.5 8,-8 9.5,-6 C10.5,-4 10,-2 10,0 C10,4 8,7.5 2,8 L0,8.8 L-2,8 C-8,7.5 -10,4 -10,0 C-10,-2 -10.5,-4 -9.5,-6 Z" fill="#fff" stroke="#666" stroke-width="1"/><text x="0" y="3.3" font-size="9" fill="#555" text-anchor="middle" textLength="14" lengthAdjust="spacingAndGlyphs">183</text></g>
<text x="875" y="219.2" transform="rotate(-22.3 875 216)" font-size="9.6" fill="#848484" stroke="#fff" stroke-width="2" stroke-opacity="0.85" paint-order="stroke" text-anchor="middle" textLength="86.8" lengthAdjust="spacingAndGlyphs">Anderson Mill Rd</text>
<text x="1141.5" y="120.5" transform="rotate(-22.3 1141.5 117.3)" font-size="9.6" fill="#848484" stroke="#fff" stroke-width="2" stroke-opacity="0.85" paint-order="stroke" text-anchor="middle" textLength="86.8" lengthAdjust="spacingAndGlyphs">Anderson Mill Rd</text>
<text x="912.3" y="160.2" transform="rotate(40.4 912.3 157)" font-size="9.6" fill="#848484" stroke="#fff" stroke-width="2" stroke-opacity="0.85" paint-order="stroke" text-anchor="middle" textLength="70" lengthAdjust="spacingAndGlyphs">Pond Springs Rd</text>
<text x="1206" y="136.2" transform="rotate(27 1206 133)" font-size="9.6" fill="#848484" stroke="#fff" stroke-width="2" stroke-opacity="0.85" paint-order="stroke" text-anchor="middle" textLength="67" lengthAdjust="spacingAndGlyphs">Turtle Rock Rd</text>
<text x="1128.3" y="164.6" transform="rotate(67 1128.3 161.4)" font-size="9.6" fill="#848484" stroke="#fff" stroke-width="2" stroke-opacity="0.85" paint-order="stroke" text-anchor="middle" textLength="51" lengthAdjust="spacingAndGlyphs">Tree Line Dr</text>
<text x="1187.5" y="188.2" transform="rotate(40 1187.5 185)" font-size="9.6" fill="#848484" stroke="#fff" stroke-width="2" stroke-opacity="0.85" paint-order="stroke" text-anchor="middle" textLength="53" lengthAdjust="spacingAndGlyphs">Pineridge Dr</text>
<text x="1180" y="217.2" transform="rotate(43 1180 214)" font-size="9.6" fill="#848484" stroke="#fff" stroke-width="2" stroke-opacity="0.85" paint-order="stroke" text-anchor="middle" textLength="61" lengthAdjust="spacingAndGlyphs">Piney Point Dr</text>
<text x="1098.7" y="255.2" transform="rotate(-25.8 1098.7 252)" font-size="9.6" fill="#848484" stroke="#fff" stroke-width="2" stroke-opacity="0.85" paint-order="stroke" text-anchor="middle" textLength="78.8" lengthAdjust="spacingAndGlyphs">Sparkling Creek Dr</text>
<text x="1022" y="339.2" transform="rotate(-29 1022 336)" font-size="9.6" fill="#848484" stroke="#fff" stroke-width="2" stroke-opacity="0.85" paint-order="stroke" text-anchor="middle" textLength="30" lengthAdjust="spacingAndGlyphs">Roxie Dr</text>
<text x="1006.6" y="377.2" transform="rotate(-39.5 1006.6 374)" font-size="9.6" fill="#848484" stroke="#fff" stroke-width="2" stroke-opacity="0.85" paint-order="stroke" text-anchor="middle" textLength="58" lengthAdjust="spacingAndGlyphs">Boardwalk Dr</text>
<text x="703.4" y="359.2" transform="rotate(-21 703.4 356)" font-size="9.6" fill="#848484" stroke="#fff" stroke-width="2" stroke-opacity="0.85" paint-order="stroke" text-anchor="middle" textLength="47.9" lengthAdjust="spacingAndGlyphs">Clearock Dr</text>
<text x="662" y="404.2" transform="rotate(-3 662 401)" font-size="9.6" fill="#848484" stroke="#fff" stroke-width="2" stroke-opacity="0.85" paint-order="stroke" text-anchor="middle" textLength="58" lengthAdjust="spacingAndGlyphs">Cedar Crest Dr</text>
<text x="800" y="429.7" transform="rotate(73.5 800 426.5)" font-size="9.6" fill="#848484" stroke="#fff" stroke-width="2" stroke-opacity="0.85" paint-order="stroke" text-anchor="middle" textLength="60.4" lengthAdjust="spacingAndGlyphs">Brookwood Rd</text>
<text x="872.4" y="383.7" transform="rotate(22 872.4 380.5)" font-size="9.6" fill="#848484" stroke="#fff" stroke-width="2" stroke-opacity="0.85" paint-order="stroke" text-anchor="middle" textLength="63.8" lengthAdjust="spacingAndGlyphs">Balcones Club Dr</text>
<text x="788.9" y="488.9" transform="rotate(38.6 788.9 485.7)" font-size="9.6" fill="#848484" stroke="#fff" stroke-width="2" stroke-opacity="0.85" paint-order="stroke" text-anchor="middle" textLength="67.4" lengthAdjust="spacingAndGlyphs">Balcones Club Dr</text>
<text x="828.7" y="513.5" transform="rotate(50 828.7 510.3)" font-size="9.6" fill="#848484" stroke="#fff" stroke-width="2" stroke-opacity="0.85" paint-order="stroke" text-anchor="middle" textLength="39" lengthAdjust="spacingAndGlyphs">Balcones</text>
<text x="872.4" y="550.2" transform="rotate(5 872.4 547)" font-size="9.6" fill="#848484" stroke="#fff" stroke-width="2" stroke-opacity="0.85" paint-order="stroke" text-anchor="middle" textLength="30" lengthAdjust="spacingAndGlyphs">Club Dr</text>
<text x="643.5" y="481.2" transform="rotate(-73 643.5 478)" font-size="9.6" fill="#848484" stroke="#fff" stroke-width="2" stroke-opacity="0.85" paint-order="stroke" text-anchor="middle" textLength="68.7" lengthAdjust="spacingAndGlyphs">Spring Hollow Dr</text>
<text x="692.7" y="507.2" transform="rotate(-82.5 692.7 504)" font-size="9.6" fill="#848484" stroke="#fff" stroke-width="2" stroke-opacity="0.85" paint-order="stroke" text-anchor="middle" textLength="61" lengthAdjust="spacingAndGlyphs">Springwood Dr</text>
<text x="760" y="562.7" transform="rotate(40 760 559.5)" font-size="9.6" fill="#848484" stroke="#fff" stroke-width="2" stroke-opacity="0.85" paint-order="stroke" text-anchor="middle" textLength="61.7" lengthAdjust="spacingAndGlyphs">Jolly Hollow Dr</text>
<text x="754.6" y="589.2" transform="rotate(30.7 754.6 586)" font-size="9.6" fill="#848484" stroke="#fff" stroke-width="2" stroke-opacity="0.85" paint-order="stroke" text-anchor="middle" textLength="58" lengthAdjust="spacingAndGlyphs">Spring Lake Dr</text>
<text x="919" y="617.2" transform="rotate(-20 919 614)" font-size="9.6" fill="#848484" stroke="#fff" stroke-width="2" stroke-opacity="0.85" paint-order="stroke" text-anchor="middle" textLength="63" lengthAdjust="spacingAndGlyphs">Crest Ridge Cir</text>
<text x="1011" y="627.9" transform="rotate(-21 1011 624.7)" font-size="9.6" fill="#848484" stroke="#fff" stroke-width="2" stroke-opacity="0.85" paint-order="stroke" text-anchor="middle" textLength="80.4" lengthAdjust="spacingAndGlyphs">Lemens Spice Trail</text>
<text x="770.4" y="667.2" transform="rotate(53 770.4 664)" font-size="9.6" fill="#848484" stroke="#fff" stroke-width="2" stroke-opacity="0.85" paint-order="stroke" text-anchor="middle" textLength="92" lengthAdjust="spacingAndGlyphs">Evening Primrose Path</text>
<text x="729.6" y="655.5" transform="rotate(39 729.6 652.3)" font-size="9.6" fill="#848484" stroke="#fff" stroke-width="2" stroke-opacity="0.85" paint-order="stroke" text-anchor="middle" textLength="54" lengthAdjust="spacingAndGlyphs">Limoncillo Dr</text>
<text x="677.7" y="676.5" transform="rotate(28.6 677.7 673.3)" font-size="9.6" fill="#848484" stroke="#fff" stroke-width="2" stroke-opacity="0.85" paint-order="stroke" text-anchor="middle" textLength="49.4" lengthAdjust="spacingAndGlyphs">Topridge Dr</text>
<text x="655.3" y="717.2" transform="rotate(75 655.3 714)" font-size="9.6" fill="#848484" stroke="#fff" stroke-width="2" stroke-opacity="0.85" paint-order="stroke" text-anchor="middle" textLength="57" lengthAdjust="spacingAndGlyphs">Country Knoll</text>
<text x="633.6" y="723.2" transform="rotate(78.5 633.6 720)" font-size="9.6" fill="#848484" stroke="#fff" stroke-width="2" stroke-opacity="0.85" paint-order="stroke" text-anchor="middle" textLength="65.8" lengthAdjust="spacingAndGlyphs">Wintergreen Hill</text>
<text x="680.3" y="756.9" transform="rotate(-58 680.3 753.7)" font-size="9.6" fill="#848484" stroke="#fff" stroke-width="2" stroke-opacity="0.85" paint-order="stroke" text-anchor="middle" textLength="52.5" lengthAdjust="spacingAndGlyphs">Leafwood Ln</text>
<text x="717" y="744.2" transform="rotate(-60 717 741)" font-size="9.6" fill="#848484" stroke="#fff" stroke-width="2" stroke-opacity="0.85" paint-order="stroke" text-anchor="middle" textLength="65.5" lengthAdjust="spacingAndGlyphs">Scotland Well Dr</text>
<text x="827.6" y="779.2" transform="rotate(62.4 827.6 776)" font-size="9.6" fill="#848484" stroke="#fff" stroke-width="2" stroke-opacity="0.85" paint-order="stroke" text-anchor="middle" textLength="65.4" lengthAdjust="spacingAndGlyphs">Callanish Park Dr</text>
<text x="761.8" y="828.5" transform="rotate(31 761.8 825.3)" font-size="9.6" fill="#848484" stroke="#fff" stroke-width="2" stroke-opacity="0.85" paint-order="stroke" text-anchor="middle" textLength="53.8" lengthAdjust="spacingAndGlyphs">Marybank Dr</text>
<text x="752" y="848.2" transform="rotate(28.6 752 845)" font-size="9.6" fill="#848484" stroke="#fff" stroke-width="2" stroke-opacity="0.85" paint-order="stroke" text-anchor="middle" textLength="51" lengthAdjust="spacingAndGlyphs">Scotsman Dr</text>
<text x="780" y="815.2" transform="rotate(27 780 812)" font-size="9.6" fill="#848484" stroke="#fff" stroke-width="2" stroke-opacity="0.85" paint-order="stroke" text-anchor="middle" textLength="75" lengthAdjust="spacingAndGlyphs">Tweedsmuir Berwick Dr</text>
<text x="858" y="748.2" transform="rotate(62 858 745)" font-size="9.6" fill="#848484" stroke="#fff" stroke-width="2" stroke-opacity="0.85" paint-order="stroke" text-anchor="middle" textLength="60" lengthAdjust="spacingAndGlyphs">Spicewood Valley Trail</text>
<text x="869" y="808.2" transform="rotate(-84 869 805)" font-size="9.6" fill="#848484" stroke="#fff" stroke-width="2" stroke-opacity="0.85" paint-order="stroke" text-anchor="middle" textLength="100" lengthAdjust="spacingAndGlyphs">k Greenbelt · Spicewood</text>
<text x="882.2" y="706.8" transform="rotate(61 882.2 703.6)" font-size="9.6" fill="#848484" stroke="#fff" stroke-width="2" stroke-opacity="0.85" paint-order="stroke" text-anchor="middle" textLength="54" lengthAdjust="spacingAndGlyphs">Cedarcliffe Dr</text>
<text x="1082.3" y="569.2" transform="rotate(65 1082.3 566)" font-size="9.6" fill="#848484" stroke="#fff" stroke-width="2" stroke-opacity="0.85" paint-order="stroke" text-anchor="middle" textLength="46.4" lengthAdjust="spacingAndGlyphs">Fathom Cir</text>
<text x="1170.8" y="612.4" transform="rotate(-47 1170.8 609.2)" font-size="9.6" fill="#848484" stroke="#fff" stroke-width="2" stroke-opacity="0.85" paint-order="stroke" text-anchor="middle" textLength="43" lengthAdjust="spacingAndGlyphs">Fathom Cir</text>
<text x="1148.7" y="480.4" transform="rotate(-17.5 1148.7 477.2)" font-size="9.6" fill="#848484" stroke="#fff" stroke-width="2" stroke-opacity="0.85" paint-order="stroke" text-anchor="middle" textLength="74.5" lengthAdjust="spacingAndGlyphs">Hunters Chase Dr</text>
<text x="1183.6" y="392.9" transform="rotate(39.5 1183.6 389.7)" font-size="9.6" fill="#848484" stroke="#fff" stroke-width="2" stroke-opacity="0.85" paint-order="stroke" text-anchor="middle" textLength="87" lengthAdjust="spacingAndGlyphs">Pond Springs Rd</text>
<text x="1205.2" y="370.6" transform="rotate(-48 1205.2 367.4)" font-size="9.6" fill="#848484" stroke="#fff" stroke-width="2" stroke-opacity="0.85" paint-order="stroke" text-anchor="middle" textLength="35.4" lengthAdjust="spacingAndGlyphs">Cahill Dr</text>
<text x="1116.4" y="705.5" transform="rotate(69 1116.4 702.3)" font-size="9.6" fill="#848484" stroke="#fff" stroke-width="2" stroke-opacity="0.85" paint-order="stroke" text-anchor="middle" textLength="33.6" lengthAdjust="spacingAndGlyphs">4 Iron Dr</text>
<text x="1113.2" y="746.2" transform="rotate(-27.8 1113.2 743)" font-size="9.6" fill="#848484" stroke="#fff" stroke-width="2" stroke-opacity="0.85" paint-order="stroke" text-anchor="middle" textLength="113" lengthAdjust="spacingAndGlyphs">Spicewood Springs Rd</text>
<text x="1071" y="803.6" transform="rotate(69 1071 800.4)" font-size="9.6" fill="#848484" stroke="#fff" stroke-width="2" stroke-opacity="0.85" paint-order="stroke" text-anchor="middle" textLength="43.7" lengthAdjust="spacingAndGlyphs">Wexford Dr</text>
<text x="1096.7" y="793.7" transform="rotate(62 1096.7 790.5)" font-size="9.6" fill="#848484" stroke="#fff" stroke-width="2" stroke-opacity="0.85" paint-order="stroke" text-anchor="middle" textLength="47.7" lengthAdjust="spacingAndGlyphs">Pilgrims Pl</text>
<text x="1115.8" y="781.8" transform="rotate(67 1115.8 778.6)" font-size="9.6" fill="#848484" stroke="#fff" stroke-width="2" stroke-opacity="0.85" paint-order="stroke" text-anchor="middle" textLength="60" lengthAdjust="spacingAndGlyphs">Chancellroy Dr</text>
<text x="1138.2" y="770.6" transform="rotate(63 1138.2 767.4)" font-size="9.6" fill="#848484" stroke="#fff" stroke-width="2" stroke-opacity="0.85" paint-order="stroke" text-anchor="middle" textLength="51.8" lengthAdjust="spacingAndGlyphs">Heathrow Dr</text>
<text x="1169.7" y="775.9" transform="rotate(60 1169.7 772.7)" font-size="9.6" fill="#848484" stroke="#fff" stroke-width="2" stroke-opacity="0.85" paint-order="stroke" text-anchor="middle" textLength="84" lengthAdjust="spacingAndGlyphs">Shakespearean Way</text>
<text x="1035" y="843.7" transform="rotate(21 1035 840.5)" font-size="9.6" fill="#848484" stroke="#fff" stroke-width="2" stroke-opacity="0.85" paint-order="stroke" text-anchor="middle" textLength="43.8" lengthAdjust="spacingAndGlyphs">Yaupon Dr</text>
<text x="1262" y="688.2" transform="rotate(-19.5 1262 685)" font-size="9.6" fill="#848484" stroke="#fff" stroke-width="2" stroke-opacity="0.85" paint-order="stroke" text-anchor="middle" textLength="112" lengthAdjust="spacingAndGlyphs">Spicewood Springs Rd</text>
<text x="1388" y="639.8" transform="rotate(-27 1388 636.6)" font-size="9.6" fill="#848484" stroke="#fff" stroke-width="2" stroke-opacity="0.85" paint-order="stroke" text-anchor="middle" textLength="51.8" lengthAdjust="spacingAndGlyphs">McNeil Dr</text>
<text x="1337.5" y="718.0" transform="rotate(-42.5 1337.5 714.8)" font-size="9.6" fill="#848484" stroke="#fff" stroke-width="2" stroke-opacity="0.85" paint-order="stroke" text-anchor="middle" textLength="64.3" lengthAdjust="spacingAndGlyphs">Barrington Way</text>
<text x="1401.3" y="725.2" transform="rotate(37.7 1401.3 722)" font-size="9.6" fill="#848484" stroke="#fff" stroke-width="2" stroke-opacity="0.85" paint-order="stroke" text-anchor="middle" textLength="51.6" lengthAdjust="spacingAndGlyphs">Jollyville Rd</text>
<text x="1288.2" y="798.9" transform="rotate(-62.3 1288.2 795.7)" font-size="9.6" fill="#848484" stroke="#fff" stroke-width="2" stroke-opacity="0.85" paint-order="stroke" text-anchor="middle" textLength="59.4" lengthAdjust="spacingAndGlyphs">Buckingham Rd</text>
<text x="1382.5" y="792.8" transform="rotate(-25 1382.5 789.6)" font-size="9.6" fill="#848484" stroke="#fff" stroke-width="2" stroke-opacity="0.85" paint-order="stroke" text-anchor="middle" textLength="32" lengthAdjust="spacingAndGlyphs">Charing</text>
<text x="1390" y="768.2" transform="rotate(232 1390 765)" font-size="9.6" fill="#848484" stroke="#fff" stroke-width="2" stroke-opacity="0.85" paint-order="stroke" text-anchor="middle" textLength="38" lengthAdjust="spacingAndGlyphs">Cross Rd</text>
<text x="1315.8" y="823.9" transform="rotate(55 1315.8 820.7)" font-size="9.6" fill="#848484" stroke="#fff" stroke-width="2" stroke-opacity="0.85" paint-order="stroke" text-anchor="middle" textLength="48" lengthAdjust="spacingAndGlyphs">Danwood Dr</text>
<text x="1290" y="851.2" transform="rotate(-18 1290 848)" font-size="9.6" fill="#848484" stroke="#fff" stroke-width="2" stroke-opacity="0.85" paint-order="stroke" text-anchor="middle" textLength="58" lengthAdjust="spacingAndGlyphs">K Ranch Rd</text>
<text x="1420" y="846.7" transform="rotate(68 1420 843.5)" font-size="9.6" fill="#848484" stroke="#fff" stroke-width="2" stroke-opacity="0.85" paint-order="stroke" text-anchor="middle" textLength="30" lengthAdjust="spacingAndGlyphs">Chelsea</text>
<text x="1440" y="835.2" transform="rotate(70 1440 832)" font-size="9.6" fill="#848484" stroke="#fff" stroke-width="2" stroke-opacity="0.85" paint-order="stroke" text-anchor="middle" textLength="52" lengthAdjust="spacingAndGlyphs">Argonne Ford</text>
<text x="1453.3" y="644.2" transform="rotate(64 1453.3 641)" font-size="9.6" fill="#848484" stroke="#fff" stroke-width="2" stroke-opacity="0.85" paint-order="stroke" text-anchor="middle" textLength="36.5" lengthAdjust="spacingAndGlyphs">Jekel Cir</text>
<text x="1478.3" y="636.5" transform="rotate(66 1478.3 633.3)" font-size="9.6" fill="#848484" stroke="#fff" stroke-width="2" stroke-opacity="0.85" paint-order="stroke" text-anchor="middle" textLength="38.8" lengthAdjust="spacingAndGlyphs">Pecan St</text>
<text x="1553.3" y="527.8" transform="rotate(66 1553.3 524.6)" font-size="9.6" fill="#848484" stroke="#fff" stroke-width="2" stroke-opacity="0.85" paint-order="stroke" text-anchor="middle" textLength="64.8" lengthAdjust="spacingAndGlyphs">Los Indios Trail</text>
<text x="1682.8" y="479.7" transform="rotate(71 1682.8 476.5)" font-size="9.6" fill="#848484" stroke="#fff" stroke-width="2" stroke-opacity="0.85" paint-order="stroke" text-anchor="middle" textLength="61.2" lengthAdjust="spacingAndGlyphs">Blackfoot Trail</text>
<text x="1746" y="464.6" transform="rotate(64 1746 461.4)" font-size="9.6" fill="#848484" stroke="#fff" stroke-width="2" stroke-opacity="0.85" paint-order="stroke" text-anchor="middle" textLength="45.3" lengthAdjust="spacingAndGlyphs">Dakota Ln</text>
<text x="1770" y="416.2" transform="rotate(5 1770 413)" font-size="9.6" fill="#848484" stroke="#fff" stroke-width="2" stroke-opacity="0.85" paint-order="stroke" text-anchor="middle" textLength="62" lengthAdjust="spacingAndGlyphs">Bancroft Woods Dr</text>
<text x="1698" y="521.2" transform="rotate(-22.6 1698 518)" font-size="9.6" fill="#848484" stroke="#fff" stroke-width="2" stroke-opacity="0.85" paint-order="stroke" text-anchor="middle" textLength="51.2" lengthAdjust="spacingAndGlyphs">McNeil Dr</text>
<text x="1719" y="538.2" transform="rotate(-48.6 1719 535)" font-size="9.6" fill="#848484" stroke="#fff" stroke-width="2" stroke-opacity="0.85" paint-order="stroke" text-anchor="middle" textLength="44" lengthAdjust="spacingAndGlyphs">Oak Knoll Dr</text>
<text x="1733.5" y="583.0" transform="rotate(5 1733.5 579.8)" font-size="9.6" fill="#848484" stroke="#fff" stroke-width="2" stroke-opacity="0.85" paint-order="stroke" text-anchor="middle" textLength="74" lengthAdjust="spacingAndGlyphs">Research Park Loop</text>
<text x="1798" y="524.5" transform="rotate(43.5 1798 521.3)" font-size="9.6" fill="#848484" stroke="#fff" stroke-width="2" stroke-opacity="0.85" paint-order="stroke" text-anchor="middle" textLength="69" lengthAdjust="spacingAndGlyphs">Avery Island Ave</text>
<text x="1643.4" y="379.2" transform="rotate(-35 1643.4 376)" font-size="9.6" fill="#848484" stroke="#fff" stroke-width="2" stroke-opacity="0.85" paint-order="stroke" text-anchor="middle" textLength="52.8" lengthAdjust="spacingAndGlyphs">Potters Trail</text>
<text x="1610" y="373.8" transform="rotate(-46 1610 370.6)" font-size="9.6" fill="#848484" stroke="#fff" stroke-width="2" stroke-opacity="0.85" paint-order="stroke" text-anchor="middle" textLength="38" lengthAdjust="spacingAndGlyphs">Dallas Dr</text>
<text x="1773.8" y="344.9" transform="rotate(-20 1773.8 341.7)" font-size="9.6" fill="#848484" stroke="#fff" stroke-width="2" stroke-opacity="0.85" paint-order="stroke" text-anchor="middle" textLength="40" lengthAdjust="spacingAndGlyphs">Riverton Dr</text>
<text x="1563" y="718.0" transform="rotate(-57 1563 714.8)" font-size="9.6" fill="#848484" stroke="#fff" stroke-width="2" stroke-opacity="0.85" paint-order="stroke" text-anchor="middle" textLength="70.4" lengthAdjust="spacingAndGlyphs">Technology Blvd</text>
<text x="1621" y="765.2" transform="rotate(-64 1621 762)" font-size="9.6" fill="#848484" stroke="#fff" stroke-width="2" stroke-opacity="0.85" paint-order="stroke" text-anchor="middle" textLength="45.2" lengthAdjust="spacingAndGlyphs">Oak Knoll Dr</text>
<text x="1743.4" y="800.8" transform="rotate(17.8 1743.4 797.6)" font-size="9.6" fill="#848484" stroke="#fff" stroke-width="2" stroke-opacity="0.85" paint-order="stroke" text-anchor="middle" textLength="73" lengthAdjust="spacingAndGlyphs">Research Park Loop</text>
<text x="1548" y="833.2" transform="rotate(30 1548 830)" font-size="9.6" fill="#848484" stroke="#fff" stroke-width="2" stroke-opacity="0.85" paint-order="stroke" text-anchor="middle" textLength="52" lengthAdjust="spacingAndGlyphs">Jollyville Rd</text>
<text x="1784" y="837.2" transform="rotate(-52 1784 834)" font-size="9.6" fill="#848484" stroke="#fff" stroke-width="2" stroke-opacity="0.85" paint-order="stroke" text-anchor="middle" textLength="57.7" lengthAdjust="spacingAndGlyphs">Trace Pkwy</text>
<text x="1431.5" y="125.8" transform="rotate(-60 1431.5 122.6)" font-size="9.6" fill="#848484" stroke="#fff" stroke-width="2" stroke-opacity="0.85" paint-order="stroke" text-anchor="middle" textLength="50" lengthAdjust="spacingAndGlyphs">Coriander Dr</text>
<text x="1462.5" y="142.2" transform="rotate(8 1462.5 139)" font-size="9.6" fill="#848484" stroke="#fff" stroke-width="2" stroke-opacity="0.85" paint-order="stroke" text-anchor="middle" textLength="50" lengthAdjust="spacingAndGlyphs">Canola Bend</text>
<text x="1509.9" y="174.5" transform="rotate(68 1509.9 171.3)" font-size="9.6" fill="#848484" stroke="#fff" stroke-width="2" stroke-opacity="0.85" paint-order="stroke" text-anchor="middle" textLength="72" lengthAdjust="spacingAndGlyphs">Partridge Bend Dr</text>
<text x="1450.6" y="183.0" transform="rotate(-21 1450.6 179.8)" font-size="9.6" fill="#848484" stroke="#fff" stroke-width="2" stroke-opacity="0.85" paint-order="stroke" text-anchor="middle" textLength="73.3" lengthAdjust="spacingAndGlyphs">Hunters Chase Dr</text>
<text x="1494.7" y="202.8" transform="rotate(70 1494.7 199.6)" font-size="9.6" fill="#848484" stroke="#fff" stroke-width="2" stroke-opacity="0.85" paint-order="stroke" text-anchor="middle" textLength="42" lengthAdjust="spacingAndGlyphs">Tantiv Dr</text>
<text x="1440" y="248.8" transform="rotate(-80 1440 245.6)" font-size="9.6" fill="#848484" stroke="#fff" stroke-width="2" stroke-opacity="0.85" paint-order="stroke" text-anchor="middle" textLength="45.5" lengthAdjust="spacingAndGlyphs">Tantara Dr</text>
<text x="1491.4" y="257.2" transform="rotate(-47 1491.4 254)" font-size="9.6" fill="#848484" stroke="#fff" stroke-width="2" stroke-opacity="0.85" paint-order="stroke" text-anchor="middle" textLength="92" lengthAdjust="spacingAndGlyphs">Elkhorn Mountain Trail</text>
<text x="1255.2" y="194.2" transform="rotate(-66 1255.2 191)" font-size="9.6" fill="#848484" stroke="#fff" stroke-width="2" stroke-opacity="0.85" paint-order="stroke" text-anchor="middle" textLength="56" lengthAdjust="spacingAndGlyphs">Turtle Rock Rd</text>
<text x="1267" y="263.2" transform="rotate(-42.4 1267 260)" font-size="9.6" fill="#848484" stroke="#fff" stroke-width="2" stroke-opacity="0.85" paint-order="stroke" text-anchor="middle" textLength="62.3" lengthAdjust="spacingAndGlyphs">Foxhound Trail</text>
<text x="1292" y="324.2" transform="rotate(73 1292 321)" font-size="9.6" fill="#848484" stroke="#fff" stroke-width="2" stroke-opacity="0.85" paint-order="stroke" text-anchor="middle" textLength="50" lengthAdjust="spacingAndGlyphs">Deer Falls Dr</text>
<text x="1363.8" y="315.2" transform="rotate(-12 1363.8 312)" font-size="9.6" fill="#848484" stroke="#fff" stroke-width="2" stroke-opacity="0.85" paint-order="stroke" text-anchor="middle" textLength="32.3" lengthAdjust="spacingAndGlyphs">Cahill Dr</text>
<text x="1529" y="147.5" transform="rotate(75 1529 144.3)" font-size="9.6" fill="#848484" stroke="#fff" stroke-width="2" stroke-opacity="0.85" paint-order="stroke" text-anchor="middle" textLength="55" lengthAdjust="spacingAndGlyphs">Humphrey Dr</text>
<text x="1550.6" y="151.2" transform="rotate(69 1550.6 148)" font-size="9.6" fill="#848484" stroke="#fff" stroke-width="2" stroke-opacity="0.85" paint-order="stroke" text-anchor="middle" textLength="36.8" lengthAdjust="spacingAndGlyphs">Tilder Dr</text>
<text x="1590.7" y="165.2" transform="rotate(-16 1590.7 162)" font-size="9.6" fill="#848484" stroke="#fff" stroke-width="2" stroke-opacity="0.85" paint-order="stroke" text-anchor="middle" textLength="42.4" lengthAdjust="spacingAndGlyphs">Taranto Dr</text>
<text x="1607.2" y="196.8" transform="rotate(-69 1607.2 193.6)" font-size="9.6" fill="#848484" stroke="#fff" stroke-width="2" stroke-opacity="0.85" paint-order="stroke" text-anchor="middle" textLength="43.8" lengthAdjust="spacingAndGlyphs">Boomer Ln</text>
<text x="1681.5" y="170.5" transform="rotate(18 1681.5 167.3)" font-size="9.6" fill="#848484" stroke="#fff" stroke-width="2" stroke-opacity="0.85" paint-order="stroke" text-anchor="middle" textLength="50" lengthAdjust="spacingAndGlyphs">Windrush Dr</text>
<text x="1682" y="201.4" transform="rotate(-3 1682 198.2)" font-size="9.6" fill="#848484" stroke="#fff" stroke-width="2" stroke-opacity="0.85" paint-order="stroke" text-anchor="middle" textLength="47.4" lengthAdjust="spacingAndGlyphs">Napier Trail</text>
<text x="1694.7" y="126.4" transform="rotate(42 1694.7 123.2)" font-size="9.6" fill="#848484" stroke="#fff" stroke-width="2" stroke-opacity="0.85" paint-order="stroke" text-anchor="middle" textLength="51" lengthAdjust="spacingAndGlyphs">Montaque Dr</text>
<text x="1601.2" y="115.2" transform="rotate(50 1601.2 112)" font-size="9.6" fill="#848484" stroke="#fff" stroke-width="2" stroke-opacity="0.85" paint-order="stroke" text-anchor="middle" textLength="43" lengthAdjust="spacingAndGlyphs">Jenner Ln</text>
<text x="1629" y="106.2" transform="rotate(40 1629 103)" font-size="9.6" fill="#848484" stroke="#fff" stroke-width="2" stroke-opacity="0.85" paint-order="stroke" text-anchor="middle" textLength="43" lengthAdjust="spacingAndGlyphs">Amasia Dr</text>
<text x="1565" y="104.7" transform="rotate(50 1565 101.5)" font-size="9.6" fill="#848484" stroke="#fff" stroke-width="2" stroke-opacity="0.85" paint-order="stroke" text-anchor="middle" textLength="32" lengthAdjust="spacingAndGlyphs">Irwin Ln</text>
<text x="1602.6" y="278.4" transform="rotate(13 1602.6 275.2)" font-size="9.6" fill="#848484" stroke="#fff" stroke-width="2" stroke-opacity="0.85" paint-order="stroke" text-anchor="middle" textLength="63.5" lengthAdjust="spacingAndGlyphs">Grovedale Trail</text>
<text x="1533" y="269.9" transform="rotate(-42 1533 266.7)" font-size="9.6" fill="#848484" stroke="#fff" stroke-width="2" stroke-opacity="0.85" paint-order="stroke" text-anchor="middle" textLength="50" lengthAdjust="spacingAndGlyphs">Humphrey Dr</text>
<text x="1542.7" y="313.2" transform="rotate(-38.7 1542.7 310)" font-size="9.6" fill="#848484" stroke="#fff" stroke-width="2" stroke-opacity="0.85" paint-order="stroke" text-anchor="middle" textLength="50.6" lengthAdjust="spacingAndGlyphs">Modena Trail</text>
<text x="1557.2" y="328.2" transform="rotate(-38 1557.2 325)" font-size="9.6" fill="#848484" stroke="#fff" stroke-width="2" stroke-opacity="0.85" paint-order="stroke" text-anchor="middle" textLength="40" lengthAdjust="spacingAndGlyphs">Margit Dr</text>
<text x="1580" y="336.2" transform="rotate(-35 1580 333)" font-size="9.6" fill="#848484" stroke="#fff" stroke-width="2" stroke-opacity="0.85" paint-order="stroke" text-anchor="middle" textLength="43" lengthAdjust="spacingAndGlyphs">Marimba Trail</text>
<text x="1763" y="253.2" transform="rotate(-71.6 1763 250)" font-size="9.6" fill="#848484" stroke="#fff" stroke-width="2" stroke-opacity="0.85" paint-order="stroke" text-anchor="middle" textLength="54" lengthAdjust="spacingAndGlyphs">Greybull Trail</text>
<text x="1710.5" y="313.9" transform="rotate(10 1710.5 310.7)" font-size="9.6" fill="#848484" stroke="#fff" stroke-width="2" stroke-opacity="0.85" paint-order="stroke" text-anchor="middle" textLength="38.6" lengthAdjust="spacingAndGlyphs">Dallas Dr</text>
<text x="1771" y="324.4" transform="rotate(-26 1771 321.2)" font-size="9.6" fill="#848484" stroke="#fff" stroke-width="2" stroke-opacity="0.85" paint-order="stroke" text-anchor="middle" textLength="51" lengthAdjust="spacingAndGlyphs">Tesoro Trail</text>
<text x="1379" y="364.2" transform="rotate(-22 1379 361)" font-size="9.6" fill="#848484" stroke="#fff" stroke-width="2" stroke-opacity="0.85" paint-order="stroke" text-anchor="middle" textLength="70" lengthAdjust="spacingAndGlyphs">Elkhorn Mountain Trail</text>
<text x="1434.8" y="382.4" transform="rotate(39.5 1434.8 379.2)" font-size="9.6" fill="#848484" stroke="#fff" stroke-width="2" stroke-opacity="0.85" paint-order="stroke" text-anchor="middle" textLength="58" lengthAdjust="spacingAndGlyphs">Buckshot Trail</text>
<text x="1469" y="385.0" transform="rotate(-77 1469 381.8)" font-size="9.6" fill="#848484" stroke="#fff" stroke-width="2" stroke-opacity="0.85" paint-order="stroke" text-anchor="middle" textLength="59.4" lengthAdjust="spacingAndGlyphs">Oro Valley Trail</text>
<text x="1387.5" y="415.9" transform="rotate(71 1387.5 412.7)" font-size="9.6" fill="#848484" stroke="#fff" stroke-width="2" stroke-opacity="0.85" paint-order="stroke" text-anchor="middle" textLength="48.7" lengthAdjust="spacingAndGlyphs">Beartrap Ln</text>
<text x="1425" y="421.9" transform="rotate(56 1425 418.7)" font-size="9.6" fill="#848484" stroke="#fff" stroke-width="2" stroke-opacity="0.85" paint-order="stroke" text-anchor="middle" textLength="44.4" lengthAdjust="spacingAndGlyphs">Petaca Trail</text>
<text x="700" y="103.2" transform="rotate(-35 700 100)" font-size="9.6" fill="#848484" stroke="#fff" stroke-width="2" stroke-opacity="0.85" paint-order="stroke" text-anchor="middle" textLength="40" lengthAdjust="spacingAndGlyphs">Woodland</text>
<text x="990" y="98.2" transform="rotate(-20 990 95)" font-size="9.6" fill="#848484" stroke="#fff" stroke-width="2" stroke-opacity="0.85" paint-order="stroke" text-anchor="middle" textLength="40" lengthAdjust="spacingAndGlyphs">Eddystone</text>
<text x="709" y="137.1" font-size="14.5" font-weight="bold" fill="#7387a1" stroke="#ebebeb" stroke-width="2" stroke-opacity="0.6" paint-order="stroke" text-anchor="middle" textLength="157" lengthAdjust="spacing">WOODLANDS AT</text>
<text x="709.5" y="154.6" font-size="14.5" font-weight="bold" fill="#7387a1" stroke="#ebebeb" stroke-width="2" stroke-opacity="0.6" paint-order="stroke" text-anchor="middle" textLength="121.5" lengthAdjust="spacing">LAKE CREEK</text>
<text x="935" y="273" font-size="14.5" font-weight="bold" fill="#7387a1" stroke="#ebebeb" stroke-width="2" stroke-opacity="0.6" paint-order="stroke" text-anchor="middle" textLength="106" lengthAdjust="spacing">ANDERSON</text>
<text x="935" y="290" font-size="14.5" font-weight="bold" fill="#7387a1" stroke="#ebebeb" stroke-width="2" stroke-opacity="0.6" paint-order="stroke" text-anchor="middle" textLength="62" lengthAdjust="spacing">ARBOR</text>
<text x="1139.7" y="299.5" font-size="14.5" font-weight="bold" fill="#7387a1" stroke="#ebebeb" stroke-width="2" stroke-opacity="0.6" paint-order="stroke" text-anchor="middle" textLength="137" lengthAdjust="spacing">TURTLE ROCK</text>
<text x="1138.7" y="316.6" font-size="14.5" font-weight="bold" fill="#7387a1" stroke="#ebebeb" stroke-width="2" stroke-opacity="0.6" paint-order="stroke" text-anchor="middle" textLength="88" lengthAdjust="spacing">ESTATES</text>
<text x="1665.7" y="417.3" font-size="14.5" font-weight="bold" fill="#7387a1" stroke="#ebebeb" stroke-width="2" stroke-opacity="0.6" paint-order="stroke" text-anchor="middle" textLength="133" lengthAdjust="spacing">INDIAN OAKS</text>
<text x="1462.5" y="513.4" font-size="14.5" font-weight="bold" fill="#7387a1" stroke="#ebebeb" stroke-width="2" stroke-opacity="0.6" paint-order="stroke" text-anchor="middle" textLength="116" lengthAdjust="spacing">LOS INDIOS</text>
<text x="1002.6" y="681.3" font-size="14.5" font-weight="bold" fill="#7387a1" stroke="#ebebeb" stroke-width="2" stroke-opacity="0.6" paint-order="stroke" text-anchor="middle" textLength="137" lengthAdjust="spacing">TANGLEWOOD</text>
<text x="1003" y="699.7" font-size="14.5" font-weight="bold" fill="#7387a1" stroke="#ebebeb" stroke-width="2" stroke-opacity="0.6" paint-order="stroke" text-anchor="middle" textLength="88" lengthAdjust="spacing">ESTATES</text>
<text x="1700" y="695.7" font-size="14.5" font-weight="bold" fill="#7387a1" stroke="#ebebeb" stroke-width="2" stroke-opacity="0.6" paint-order="stroke" text-anchor="middle" textLength="83" lengthAdjust="spacing">LEFFLER</text>
<text x="1699.8" y="713.6" font-size="14.5" font-weight="bold" fill="#7387a1" stroke="#ebebeb" stroke-width="2" stroke-opacity="0.6" paint-order="stroke" text-anchor="middle" textLength="133" lengthAdjust="spacing">COMMERCIAL</text>
<text x="1819" y="377.9" font-size="14.5" font-weight="bold" fill="#7387a1" stroke="#ebebeb" stroke-width="2" stroke-opacity="0.6" paint-order="stroke" text-anchor="middle" textLength="104" lengthAdjust="spacing">BANCROFT</text>
<text x="1819" y="395" font-size="14.5" font-weight="bold" fill="#7387a1" stroke="#ebebeb" stroke-width="2" stroke-opacity="0.6" paint-order="stroke" text-anchor="middle" textLength="70" lengthAdjust="spacing">WOODS</text>
<text x="652.6" y="194" font-size="13" fill="#1e9ca9" stroke="#fff" stroke-width="2.2" stroke-opacity="0.9" paint-order="stroke" text-anchor="start" textLength="98" lengthAdjust="spacingAndGlyphs">Austin Aquarium</text>
<text x="631" y="254.8" font-size="13" fill="#65778a" stroke="#fff" stroke-width="2.2" stroke-opacity="0.9" paint-order="stroke" text-anchor="start" textLength="89.4" lengthAdjust="spacingAndGlyphs">Bethany United</text>
<text x="631" y="270" font-size="13" fill="#65778a" stroke="#fff" stroke-width="2.2" stroke-opacity="0.9" paint-order="stroke" text-anchor="start" textLength="105.2" lengthAdjust="spacingAndGlyphs">Methodist Church</text>
<text x="808.6" y="255.3" font-size="13" fill="#4a7fc9" stroke="#fff" stroke-width="2.2" stroke-opacity="0.9" paint-order="stroke" text-anchor="start" textLength="56.6" lengthAdjust="spacingAndGlyphs">Plaza 183</text>
<text x="674.4" y="327.2" font-size="13" fill="#65778a" stroke="#fff" stroke-width="2.2" stroke-opacity="0.9" paint-order="stroke" text-anchor="start" textLength="142.1" lengthAdjust="spacingAndGlyphs">Unity Church of the Hills</text>
<text x="954" y="311.4" font-size="13" fill="#e07a4c" stroke="#fff" stroke-width="2.2" stroke-opacity="0.9" paint-order="stroke" text-anchor="end" textLength="65" lengthAdjust="spacingAndGlyphs">Main Event</text>
<text x="954" y="325.8" font-size="13" fill="#e07a4c" stroke="#fff" stroke-width="2.2" stroke-opacity="0.9" paint-order="stroke" text-anchor="end" textLength="84" lengthAdjust="spacingAndGlyphs">Entertainment</text>
<text x="1071" y="169.3" font-size="13" fill="#3a9a4a" stroke="#fff" stroke-width="2.2" stroke-opacity="0.9" paint-order="stroke" text-anchor="middle" textLength="77" lengthAdjust="spacingAndGlyphs">Springwoods</text>
<text x="1071" y="183.7" font-size="13" fill="#3a9a4a" stroke="#fff" stroke-width="2.2" stroke-opacity="0.9" paint-order="stroke" text-anchor="middle" textLength="85" lengthAdjust="spacingAndGlyphs">Neighborhood</text>
<text x="1071" y="198.2" font-size="13" fill="#3a9a4a" stroke="#fff" stroke-width="2.2" stroke-opacity="0.9" paint-order="stroke" text-anchor="middle" textLength="27" lengthAdjust="spacingAndGlyphs">Park</text>
<text x="1054" y="424" font-size="13" fill="#4f6273" stroke="#fff" stroke-width="2.2" stroke-opacity="0.9" paint-order="stroke" text-anchor="start" textLength="126.3" lengthAdjust="spacingAndGlyphs">Southwest Kia Austin</text>
<text x="897.4" y="549" font-size="13.5" fill="#3a9a4a" stroke="#fff" stroke-width="2.2" stroke-opacity="0.9" paint-order="stroke" text-anchor="start" textLength="134.2" lengthAdjust="spacingAndGlyphs">Balcones Country Club</text>
<text x="1094.7" y="545" font-size="13" fill="#4f6273" stroke="#fff" stroke-width="2.2" stroke-opacity="0.9" paint-order="stroke" text-anchor="start" textLength="97.4" lengthAdjust="spacingAndGlyphs">Sail &amp; Ski Center</text>
<text x="1259.8" y="543.7" font-size="13" fill="#4f6273" stroke="#fff" stroke-width="2.2" stroke-opacity="0.9" paint-order="stroke" text-anchor="start" textLength="109.2" lengthAdjust="spacingAndGlyphs">Leif Johnson Used</text>
<text x="1259.8" y="558.2" font-size="13" fill="#4f6273" stroke="#fff" stroke-width="2.2" stroke-opacity="0.9" paint-order="stroke" text-anchor="start" textLength="101" lengthAdjust="spacingAndGlyphs">Superstore North</text>
<text x="1203.4" y="623.4" font-size="13" fill="#4f6273" stroke="#fff" stroke-width="2.2" stroke-opacity="0.9" paint-order="stroke" text-anchor="start" textLength="81.4" lengthAdjust="spacingAndGlyphs">H-E-B Grocery</text>
<text x="1025" y="745.7" font-size="11" fill="#5b8fd6" stroke="#fff" stroke-width="2.2" stroke-opacity="0.9" paint-order="stroke" text-anchor="middle" textLength="55.2" lengthAdjust="spacingAndGlyphs">Tanglewood</text>
<text x="1024" y="758" font-size="11" fill="#5b8fd6" stroke="#fff" stroke-width="2.2" stroke-opacity="0.9" paint-order="stroke" text-anchor="middle" textLength="29" lengthAdjust="spacingAndGlyphs">Spring</text>
<text x="1538.8" y="608.9" font-size="13" fill="#4a7fc9" stroke="#fff" stroke-width="2.2" stroke-opacity="0.9" paint-order="stroke" text-anchor="start" textLength="88.1" lengthAdjust="spacingAndGlyphs">BMW of Austin</text>
<text x="1674.3" y="261.3" font-size="13" fill="#3a9a4a" stroke="#fff" stroke-width="2.2" stroke-opacity="0.9" paint-order="stroke" text-anchor="middle" textLength="38" lengthAdjust="spacingAndGlyphs">Rattan</text>
<text x="1674.3" y="276.3" font-size="13" fill="#3a9a4a" stroke="#fff" stroke-width="2.2" stroke-opacity="0.9" paint-order="stroke" text-anchor="middle" textLength="63" lengthAdjust="spacingAndGlyphs">Creek Park</text>
<g transform="translate(764.4,186.4)"><path d="M0,12 C-2,7 -7.5,4 -7.5,-0.5 A7.5,7.5 0 1 1 7.5,-0.5 C7.5,4 2,7 0,12 Z" fill="#17adc0"/><rect x="-2.8" y="-2.5" width="5.6" height="4.8" rx="0.8" fill="#fff" opacity="0.9"/></g>
<g transform="translate(795.4,248.2)"><path d="M0,12 C-2,7 -7.5,4 -7.5,-0.5 A7.5,7.5 0 1 1 7.5,-0.5 C7.5,4 2,7 0,12 Z" fill="#4a90e2"/><rect x="-2.8" y="-2.5" width="5.6" height="4.8" rx="0.8" fill="#fff" opacity="0.9"/></g>
<g transform="translate(661.2,320.6)"><path d="M0,12 C-2,7 -7.5,4 -7.5,-0.5 A7.5,7.5 0 1 1 7.5,-0.5 C7.5,4 2,7 0,12 Z" fill="#7a9bb3"/><rect x="-2.8" y="-2.5" width="5.6" height="4.8" rx="0.8" fill="#fff" opacity="0.9"/></g>
<g transform="translate(967.1,310)"><path d="M0,12 C-2,7 -7.5,4 -7.5,-0.5 A7.5,7.5 0 1 1 7.5,-0.5 C7.5,4 2,7 0,12 Z" fill="#f78a5a"/><rect x="-2.8" y="-2.5" width="5.6" height="4.8" rx="0.8" fill="#fff" opacity="0.9"/></g>
<g transform="translate(1040.8,417.4)"><path d="M0,12 C-2,7 -7.5,4 -7.5,-0.5 A7.5,7.5 0 1 1 7.5,-0.5 C7.5,4 2,7 0,12 Z" fill="#4a90e2"/><rect x="-2.8" y="-2.5" width="5.6" height="4.8" rx="0.8" fill="#fff" opacity="0.9"/></g>
<g transform="translate(1043.4,542.4)"><path d="M0,12 C-2,7 -7.5,4 -7.5,-0.5 A7.5,7.5 0 1 1 7.5,-0.5 C7.5,4 2,7 0,12 Z" fill="#3aa64c"/><rect x="-2.8" y="-2.5" width="5.6" height="4.8" rx="0.8" fill="#fff" opacity="0.9"/></g>
<g transform="translate(1204,538.4)"><path d="M0,12 C-2,7 -7.5,4 -7.5,-0.5 A7.5,7.5 0 1 1 7.5,-0.5 C7.5,4 2,7 0,12 Z" fill="#4a90e2"/><rect x="-2.8" y="-2.5" width="5.6" height="4.8" rx="0.8" fill="#fff" opacity="0.9"/></g>
<g transform="translate(1246.7,543.7)"><path d="M0,12 C-2,7 -7.5,4 -7.5,-0.5 A7.5,7.5 0 1 1 7.5,-0.5 C7.5,4 2,7 0,12 Z" fill="#4a90e2"/><rect x="-2.8" y="-2.5" width="5.6" height="4.8" rx="0.8" fill="#fff" opacity="0.9"/></g>
<g transform="translate(1265,637.8)"><path d="M0,12 C-2,7 -7.5,4 -7.5,-0.5 A7.5,7.5 0 1 1 7.5,-0.5 C7.5,4 2,7 0,12 Z" fill="#3f8fb3"/><rect x="-2.8" y="-2.5" width="5.6" height="4.8" rx="0.8" fill="#fff" opacity="0.9"/></g>
<g transform="translate(1527,605)"><path d="M0,12 C-2,7 -7.5,4 -7.5,-0.5 A7.5,7.5 0 1 1 7.5,-0.5 C7.5,4 2,7 0,12 Z" fill="#4a90e2"/><rect x="-2.8" y="-2.5" width="5.6" height="4.8" rx="0.8" fill="#fff" opacity="0.9"/></g>
<g transform="translate(1515.2,765.1)"><path d="M0,12 C-2,7 -7.5,4 -7.5,-0.5 A7.5,7.5 0 1 1 7.5,-0.5 C7.5,4 2,7 0,12 Z" fill="#f78a5a"/><rect x="-2.8" y="-2.5" width="5.6" height="4.8" rx="0.8" fill="#fff" opacity="0.9"/></g>
<circle cx="1283" cy="469.5" r="232.5" fill="#fad692" style="mix-blend-mode:multiply"/>
<path d="M661.9,815.3 L715.9,714 L743.4,726.9 L758,712.3 C768,702 775,696.5 782,696.5 C790,696.5 799,700 808,706 L835.2,727.8 L866.1,784.4 C872,800 876,830 879,870 L740.7,870 Z" fill="#a98fef" style="mix-blend-mode:multiply"/>
<rect x="818" y="781" width="8.6" height="8.6" fill="#8c89ab"/>
<g filter="url(#sh)" fill="#fff">
<path d="M1265,424 L1302,424 L1310.5,446 L1256.5,446 Z M1269.5,429 L1264.5,442 L1302.5,442 L1297.5,429 Z" fill-rule="evenodd"/>
<path d="M1259,442 L1308,442 Q1316.5,442 1316.5,451 L1316.5,459 Q1316.5,467.5 1308,467.5 L1259,467.5 Q1250.5,467.5 1250.5,459 L1250.5,451 Q1250.5,442 1259,442 Z M1266.5,454 L1271.5,454 L1271.5,458.5 L1266.5,458.5 Z M1275.5,454 L1291.5,454 L1291.5,458.5 L1275.5,458.5 Z M1295.5,454 L1300.5,454 L1300.5,458.5 L1295.5,458.5 Z" fill-rule="evenodd"/>
<rect x="1259.5" y="465" width="11" height="9.5" rx="1"/><rect x="1296.5" y="465" width="11" height="9.5" rx="1"/>
</g>
<g filter="url(#sh)" font-size="22" font-weight="bold" fill="#fff" text-anchor="middle"><text x="1283.5" y="496.5" textLength="102.7">Customer</text><text x="1283.5" y="519.5" textLength="104">Returning</text></g>
<g filter="url(#sh)" font-size="22" font-weight="bold" fill="#fff" text-anchor="middle"><text x="769.4" y="782" textLength="71">Loaner</text><text x="770" y="805.5" textLength="134.7">Maintenance</text></g>
</svg></div>
</body></html>
